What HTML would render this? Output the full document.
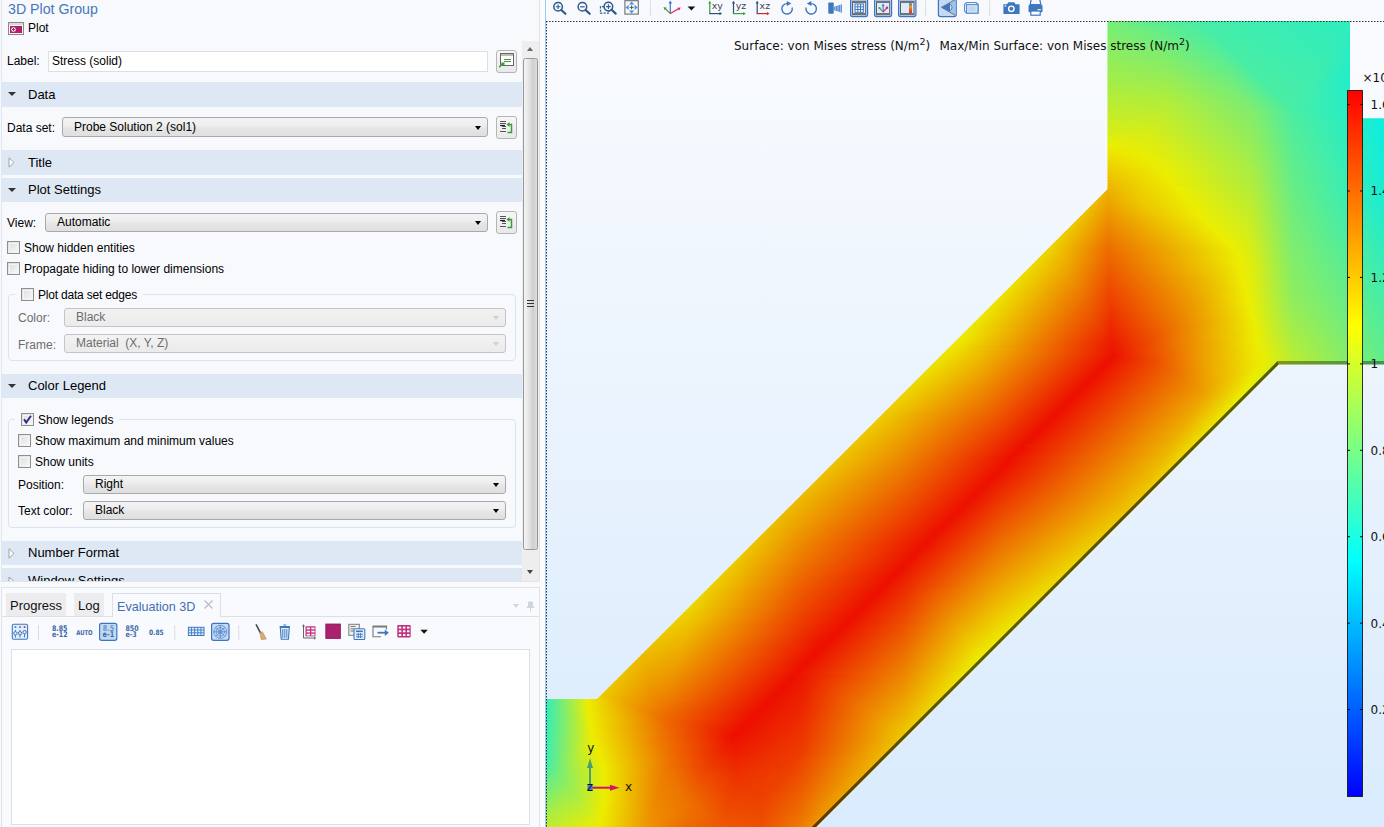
<!DOCTYPE html>
<html lang="en"><head><meta charset="utf-8"><title>3D Plot Group</title>
<style>
html,body{margin:0;padding:0}
body{width:1384px;height:827px;overflow:hidden;position:relative;background:#f8f9fd;font-family:"Liberation Sans",sans-serif;font-size:12px}
.t{position:absolute;white-space:nowrap}
.u{font-family:"Liberation Sans",sans-serif}
.p{font-family:"DejaVu Sans","Liberation Sans",sans-serif}
.a{position:absolute}
.hd{position:absolute;left:2px;width:520px;height:24.500px;background:#dee8f5}
.sel{position:absolute;box-sizing:border-box;border:1px solid #a9a9a9;border-radius:3px;background:linear-gradient(#f4f4f4,#ededed 45%,#e6e6e6 55%,#dfdfdf)}
.sel.dis{border-color:#c4c4c4;background:linear-gradient(#f2f2f2,#ebebeb)}
.btn{position:absolute;box-sizing:border-box;border:1px solid #b4b4b4;border-radius:3px;background:linear-gradient(#f6f6f6,#e9e9e9)}
.cb{position:absolute;box-sizing:border-box;width:13px;height:13px;border:1px solid #8e8f8f;background:linear-gradient(135deg,#dcdcdc,#f8f8f8)}
.cb:after{content:"";position:absolute;left:1px;top:1px;right:1px;bottom:1px;border:1px solid #f4f4f4}
.grp{position:absolute;box-sizing:border-box;border:1px solid #dbe3ec;border-radius:4px}
.tri{position:absolute;width:0;height:0;border-left:3.5px solid transparent;border-right:3.5px solid transparent;border-top:4px solid #000}
</style></head>
<body>
<div class="a" style="left:1px;top:0;width:1px;height:581px;background:#e3e6ec"></div>
<span class="t u" style="left:8px;top:-0.92px;font-size:14.2px;line-height:20px;color:#4876bb;">3D Plot Group</span>
<svg class="a" style="left:8px;top:22px" width="16" height="13" viewBox="0 0 16 13"><rect x=".5" y=".5" width="15" height="12" fill="#f4f4f4" stroke="#8a8a8a"/><rect x="1" y="1" width="14" height="2" fill="#d8d8d8"/><rect x="2" y="4" width="12" height="7" fill="#b3206a"/><circle cx="5.5" cy="7.5" r="2.3" fill="#fff"/><path d="M4 7.5h3M5.5 6v3" stroke="#b3206a" stroke-width="1"/></svg>
<span class="t u" style="left:28px;top:20.34px;font-size:12px;line-height:17px;color:#000;">Plot</span>
<span class="t u" style="left:7px;top:53.34px;font-size:12px;line-height:17px;color:#000;">Label:</span>
<div class="a" style="left:48px;top:51px;width:440px;height:21px;box-sizing:border-box;border:1px solid #dcdfe4;background:#fff"></div>
<span class="t u" style="left:52px;top:53.34px;font-size:12px;line-height:17px;color:#000;">Stress (solid)</span>
<div class="btn" style="left:496px;top:50px;width:21px;height:23px"></div>
<svg class="a" style="left:498px;top:52px" width="17" height="18" viewBox="0 0 17 18"><rect x="2.5" y="1.5" width="13" height="12" fill="#fff" stroke="#666"/><rect x="3" y="2" width="12" height="2" fill="#bbb"/><path d="M6 7.5h7M6 9.500h7" stroke="#3c9a3c" stroke-width="1"/><path d="M1.200 15.300l3.600-3.600" stroke="#3c9a3c" stroke-width="1.500" fill="none"/><path d="M2.500 10.500h4v4z" fill="#3c9a3c"/></svg>
<div class="hd" style="top:82px;height:24.5px"></div>
<div class="a" style="left:7.5px;top:92px;width:0;height:0;border-left:4px solid transparent;border-right:4px solid transparent;border-top:4.5px solid #333"></div>
<span class="t u" style="left:28px;top:85.50px;font-size:13px;line-height:18px;color:#000;">Data</span>
<div class="hd" style="top:150px;height:25.3px"></div>
<svg class="a" style="left:8px;top:157px" width="8" height="11" viewBox="0 0 8 11"><path d="M1 0.800l5 4.700-5 4.700z" fill="#fff" stroke="#a2a2a2" stroke-width="1"/></svg>
<span class="t u" style="left:28px;top:153.50px;font-size:13px;line-height:18px;color:#000;">Title</span>
<div class="hd" style="top:178px;height:24px"></div>
<div class="a" style="left:7.5px;top:188px;width:0;height:0;border-left:4px solid transparent;border-right:4px solid transparent;border-top:4.5px solid #333"></div>
<span class="t u" style="left:28px;top:180.80px;font-size:13px;line-height:18px;color:#000;">Plot Settings</span>
<div class="hd" style="top:373.5px;height:24.5px"></div>
<div class="a" style="left:7.5px;top:383.5px;width:0;height:0;border-left:4px solid transparent;border-right:4px solid transparent;border-top:4.5px solid #333"></div>
<span class="t u" style="left:28px;top:377.00px;font-size:13px;line-height:18px;color:#000;">Color Legend</span>
<div class="hd" style="top:540.7px;height:24.5px"></div>
<svg class="a" style="left:8px;top:547.7px" width="8" height="11" viewBox="0 0 8 11"><path d="M1 0.800l5 4.700-5 4.700z" fill="#fff" stroke="#a2a2a2" stroke-width="1"/></svg>
<span class="t u" style="left:28px;top:544.20px;font-size:13px;line-height:18px;color:#000;">Number Format</span>
<span class="t u" style="left:7px;top:120.34px;font-size:12px;line-height:17px;color:#000;">Data set:</span>
<div class="sel" style="left:62px;top:117px;width:426px;height:20px"></div>
<span class="t u" style="left:74px;top:118.74px;font-size:12px;line-height:17px;color:#000;">Probe Solution 2 (sol1)</span>
<div class="tri" style="left:475.0px;top:125.5px;border-top-color:#000"></div>
<div class="btn" style="left:496px;top:116px;width:21px;height:23px"></div>
<svg class="a" style="left:498px;top:118px" width="17" height="18" viewBox="0 0 17 18"><path d="M2 3.500h6M2 5.500h6M4 8.500h4M4 10.500h4M2 13.500h6" stroke="#555" stroke-width="1"/><path d="M2 7.500h5" stroke="#222" stroke-width="1.200"/><path d="M9.500 14.500h4v-8h-3" stroke="#3c9a3c" stroke-width="1.500" fill="none"/><path d="M11.500 4l-3 2.500 3 2.500z" fill="#3c9a3c"/></svg>
<span class="t u" style="left:7px;top:215.34px;font-size:12px;line-height:17px;color:#000;">View:</span>
<div class="sel" style="left:45px;top:212.5px;width:443px;height:19.5px"></div>
<span class="t u" style="left:57px;top:213.74px;font-size:12px;line-height:17px;color:#000;">Automatic</span>
<div class="tri" style="left:475.0px;top:220.75px;border-top-color:#000"></div>
<div class="btn" style="left:496px;top:211px;width:21px;height:23px"></div>
<svg class="a" style="left:498px;top:213px" width="17" height="18" viewBox="0 0 17 18"><path d="M2 3.500h6M2 5.500h6M4 8.500h4M4 10.500h4M2 13.500h6" stroke="#555" stroke-width="1"/><path d="M2 7.500h5" stroke="#222" stroke-width="1.200"/><path d="M9.500 14.500h4v-8h-3" stroke="#3c9a3c" stroke-width="1.500" fill="none"/><path d="M11.500 4l-3 2.500 3 2.500z" fill="#3c9a3c"/></svg>
<div class="cb" style="left:7px;top:241px"></div>
<span class="t u" style="left:24px;top:240.34px;font-size:12px;line-height:17px;color:#000;">Show hidden entities</span>
<div class="cb" style="left:7px;top:262px"></div>
<span class="t u" style="left:24px;top:261.34px;font-size:12px;line-height:17px;color:#000;">Propagate hiding to lower dimensions</span>
<div class="grp" style="left:8px;top:294px;width:508px;height:67px"></div>
<div class="a" style="left:14.500px;top:290px;width:128px;height:10px;background:#f8f9fd"></div>
<div class="cb" style="left:21px;top:287.5px"></div>
<span class="t u" style="left:38px;top:286.54px;font-size:12px;line-height:17px;color:#000;letter-spacing:-0.2px">Plot data set edges</span>
<span class="t u" style="left:18px;top:310.34px;font-size:12px;line-height:17px;color:#6d6d6d;">Color:</span>
<div class="sel dis" style="left:64px;top:307.5px;width:442px;height:19.5px"></div>
<span class="t u" style="left:76px;top:308.74px;font-size:12px;line-height:17px;color:#6d6d6d;">Black</span>
<div class="tri" style="left:493.0px;top:315.75px;border-top-color:#d0d0d0"></div>
<span class="t u" style="left:18px;top:336.54px;font-size:12px;line-height:17px;color:#6d6d6d;">Frame:</span>
<div class="sel dis" style="left:64px;top:333.5px;width:442px;height:19.5px"></div>
<span class="t u" style="left:76px;top:334.74px;font-size:12px;line-height:17px;color:#6d6d6d;">Material&nbsp; (X, Y, Z)</span>
<div class="tri" style="left:493.0px;top:341.75px;border-top-color:#d0d0d0"></div>
<div class="grp" style="left:8px;top:419.3px;width:508px;height:109px"></div>
<div class="a" style="left:14.500px;top:415px;width:104px;height:10px;background:#f8f9fd"></div>
<div class="cb" style="left:21px;top:413px"></div>
<svg class="a" style="left:21px;top:413px" width="13" height="13" viewBox="0 0 13 13"><path d="M3 6.300l2.200 3.200L10 2.800" stroke="#2a2a8c" stroke-width="1.900" fill="none"/></svg>
<span class="t u" style="left:38px;top:412.04px;font-size:12px;line-height:17px;color:#000;">Show legends</span>
<div class="cb" style="left:18px;top:433.7px"></div>
<span class="t u" style="left:35px;top:432.84px;font-size:12px;line-height:17px;color:#000;">Show maximum and minimum values</span>
<div class="cb" style="left:18px;top:454.5px"></div>
<span class="t u" style="left:35px;top:453.64px;font-size:12px;line-height:17px;color:#000;">Show units</span>
<span class="t u" style="left:18px;top:477.34px;font-size:12px;line-height:17px;color:#000;">Position:</span>
<div class="sel" style="left:83px;top:474.7px;width:423px;height:19.8px"></div>
<span class="t u" style="left:95px;top:476.24px;font-size:12px;line-height:17px;color:#000;">Right</span>
<div class="tri" style="left:493.0px;top:483.09999999999997px;border-top-color:#000"></div>
<span class="t u" style="left:18px;top:503.14px;font-size:12px;line-height:17px;color:#000;">Text color:</span>
<div class="sel" style="left:83px;top:500.5px;width:423px;height:19.8px"></div>
<span class="t u" style="left:95px;top:502.04px;font-size:12px;line-height:17px;color:#000;">Black</span>
<div class="tri" style="left:493.0px;top:508.9px;border-top-color:#000"></div>
<div class="a" style="left:2px;top:568px;width:520px;height:12.600px;background:#dee8f5;overflow:hidden"><svg class="a" style="left:6px;top:7.500px" width="7" height="10" viewBox="0 0 7 10"><path d="M1 1l4.500 4-4.500 4z" fill="#fff" stroke="#9a9a9a" stroke-width="1"/></svg><span class="t u" style="left:26px;top:3.50px;font-size:13px;line-height:18px;color:#000;">Window Settings</span></div>
<div class="a" style="left:522px;top:41px;width:17.500px;height:539.500px;background:#eeeeef"></div>
<div class="a" style="left:522.500px;top:58px;width:15.500px;height:491.500px;box-sizing:border-box;border:1px solid #979797;border-radius:2.500px;background:linear-gradient(90deg,#f4f4f4,#e6e6e6 35%,#cfcfcf 70%,#dedede)"></div>
<div class="a" style="left:527px;top:46.500px;width:0;height:0;border-left:3.500px solid transparent;border-right:3.500px solid transparent;border-bottom:4px solid #666"></div>
<div class="a" style="left:527px;top:569.500px;width:0;height:0;border-left:3.500px solid transparent;border-right:3.500px solid transparent;border-top:4px solid #444"></div>
<div class="a" style="left:527px;top:299.8px;width:7px;height:1.300px;background:#333"></div>
<div class="a" style="left:527px;top:302.8px;width:7px;height:1.300px;background:#333"></div>
<div class="a" style="left:527px;top:305.8px;width:7px;height:1.300px;background:#333"></div>
<div class="a" style="left:0;top:580.500px;width:540px;height:1px;background:#e2e4e8"></div>
<div class="a" style="left:539px;top:0;width:1px;height:581px;background:#e2e3e6"></div>
<div class="a" style="left:540px;top:0;width:5.500px;height:827px;background:#fcfcfe"></div>
<div class="a" style="left:1px;top:586.500px;width:539px;height:245px;box-sizing:border-box;border:1px solid #e1e3e7;background:#f9fafd"></div>
<div class="a" style="left:6px;top:593px;width:60px;height:23px;background:#ececef"></div>
<span class="t u" style="left:10px;top:597.00px;font-size:13px;line-height:18px;color:#111;">Progress</span>
<div class="a" style="left:74px;top:593px;width:30px;height:23px;background:#ececef"></div>
<span class="t u" style="left:78px;top:597.00px;font-size:13px;line-height:18px;color:#111;">Log</span>
<div class="a" style="left:2px;top:616px;width:537px;height:1px;background:#dcdfe4"></div>
<div class="a" style="left:112px;top:593px;width:109px;height:24px;box-sizing:border-box;border:1px solid #dcdfe4;border-bottom:none;background:#f9fafd"></div>
<span class="t u" style="left:117px;top:597.63px;font-size:12.6px;line-height:18px;color:#3f6eb5;">Evaluation 3D</span>
<svg class="a" style="left:203px;top:599px" width="11" height="11" viewBox="0 0 11 11"><path d="M1.500 1.500l8 8M9.500 1.500l-8 8" stroke="#b9bcc4" stroke-width="1.200"/></svg>
<div class="a" style="left:513px;top:604px;width:0;height:0;border-left:3.500px solid transparent;border-right:3.500px solid transparent;border-top:4px solid #d0d5de"></div>
<svg class="a" style="left:526px;top:601px" width="9" height="11" viewBox="0 0 9 11"><path d="M2.500 1h4v4l1.500 1.500h-7l1.500-1.500zM4.500 6.500v4" fill="#cfd4de" stroke="#cfd4de" stroke-width="1"/></svg>
<div class="a" style="left:11px;top:648.500px;width:519px;height:176.500px;box-sizing:border-box;border:1px solid #dcdfe4;background:#fff"></div>
<svg class="a" style="left:0;top:618px" width="540" height="28" viewBox="0 618 540 28"><rect x="12.300" y="624.200" width="15.300" height="15" rx="1.500" fill="#e4eefb" stroke="#3d78bf" stroke-width="1.100"/><rect x="14.5" y="626.300" width="1.800" height="1.600" fill="#3d78bf"/><path d="M15.4 630v7.500" stroke="#3d78bf" stroke-width="1"/><circle cx="15.4" cy="633.3" r="1.700" fill="#e4eefb" stroke="#3d78bf" stroke-width="1"/><rect x="19.1" y="626.300" width="1.800" height="1.600" fill="#3d78bf"/><path d="M20.0 630v7.500" stroke="#3d78bf" stroke-width="1"/><circle cx="20.0" cy="633.3" r="1.700" fill="#e4eefb" stroke="#3d78bf" stroke-width="1"/><rect x="23.700000000000003" y="626.300" width="1.800" height="1.600" fill="#e0202a"/><path d="M24.6 630v7.500" stroke="#3d78bf" stroke-width="1"/><circle cx="24.6" cy="632.2" r="1.700" fill="#e4eefb" stroke="#3d78bf" stroke-width="1"/><path d="M38.500 625V640" stroke="#dcdde2" stroke-width="1"/><text transform="translate(52 631) scale(.9 1)" font-family="DejaVu Sans Condensed, DejaVu Sans, sans-serif" font-weight="bold" font-size="7.77" fill="#3c69a8" letter-spacing="0">8.85</text><text transform="translate(52 637.4) scale(.9 1)" font-family="DejaVu Sans Condensed, DejaVu Sans, sans-serif" font-weight="bold" font-size="7.77" fill="#3c69a8" letter-spacing="0">e-12</text><text transform="translate(76.3 634.7) scale(.9 1)" font-family="DejaVu Sans Condensed, DejaVu Sans, sans-serif" font-weight="bold" font-size="6.66" fill="#3c69a8" letter-spacing="-0.15">AUTO</text><rect x="99.600" y="623.300" width="17.200" height="17" rx="2" fill="#c3daf5" stroke="#3f74c0" stroke-width="1.200"/><text transform="translate(102.8 631.2) scale(.9 1)" font-family="DejaVu Sans Condensed, DejaVu Sans, sans-serif" font-weight="bold" font-size="7.99" fill="#6a94cc" letter-spacing="0">8.5</text><text transform="translate(102.6 637.4) scale(.9 1)" font-family="DejaVu Sans Condensed, DejaVu Sans, sans-serif" font-weight="bold" font-size="7.99" fill="#3c69a8" letter-spacing="0">e-1</text><text transform="translate(125.5 631) scale(.9 1)" font-family="DejaVu Sans Condensed, DejaVu Sans, sans-serif" font-weight="bold" font-size="7.77" fill="#3c69a8" letter-spacing="0">850</text><text transform="translate(125.5 637.4) scale(.9 1)" font-family="DejaVu Sans Condensed, DejaVu Sans, sans-serif" font-weight="bold" font-size="7.77" fill="#3c69a8" letter-spacing="0">e-3</text><text transform="translate(149 634.7) scale(.9 1)" font-family="DejaVu Sans Condensed, DejaVu Sans, sans-serif" font-weight="bold" font-size="7.33" fill="#3c69a8" letter-spacing="0">0.85</text><path d="M174.800 625V640" stroke="#dcdde2" stroke-width="1"/><rect x="188.400" y="627.300" width="15.600" height="8.200" fill="#e4eefb" stroke="#3d78bf" stroke-width="1"/><path d="M191.500 627.300v8.200M194.600 627.300v8.200M197.800 627.300v8.200M200.900 627.300v8.200M188.400 630h15.600M188.400 632.800h15.600" stroke="#3d78bf" stroke-width="0.900"/><rect x="211.600" y="623.300" width="17.400" height="17" rx="2" fill="#c3daf5" stroke="#3f74c0" stroke-width="1.200"/><g fill="none" stroke="#5b8fd0" stroke-width="0.900"><circle cx="220.300" cy="631.800" r="6.500"/><circle cx="220.300" cy="631.800" r="4.200"/><circle cx="220.300" cy="631.800" r="1.900"/><path d="M213.800 631.800h13M220.300 625.300v13M215.700 627.200l9.200 9.200M224.900 627.200l-9.200 9.200"/></g><path d="M238.800 625V640" stroke="#dcdde2" stroke-width="1"/><path d="M256 624.300l5 9.500" stroke="#4a4a4a" stroke-width="1.600"/><path d="M260 632.800l2.400-1 4 7.200-5.200 0.600z" fill="#d9aa78" stroke="#b98a58" stroke-width="0.600"/><path d="M280.300 627.500h9l-0.900 11.800h-7.200z" fill="#dceafa" stroke="#3d78bf" stroke-width="1.100"/><path d="M279.600 626.500h10.400M283.300 625h3" stroke="#3d78bf" stroke-width="1.200"/><path d="M282.800 629v8.800M284.800 629v8.800M286.800 629v8.800" stroke="#3d78bf" stroke-width="0.900"/><path d="M303.500 624.500V638H316" fill="none" stroke="#666" stroke-width="1"/><path d="M302 626h3M314.500 636.500v3" stroke="#666" stroke-width="0.800"/><rect x="305.500" y="626.300" width="10" height="10" fill="#c0307c"/><rect x="306.7" y="627.6" width="3.300" height="1.700" fill="#fff"/><rect x="311.3" y="627.6" width="3.300" height="1.700" fill="#fff"/><rect x="306.7" y="630.7" width="3.300" height="1.700" fill="#fff"/><rect x="311.3" y="630.7" width="3.300" height="1.700" fill="#fff"/><rect x="306.7" y="633.8000000000001" width="3.300" height="1.700" fill="#fff"/><rect x="311.3" y="633.8000000000001" width="3.300" height="1.700" fill="#fff"/><rect x="325.800" y="624" width="14.600" height="14.600" fill="#ab2170" stroke="#8c1a5c" stroke-width="0.800"/><rect x="348.800" y="624.300" width="10.500" height="11" fill="#f0f0f0" stroke="#7a7a7a" stroke-width="1"/><path d="M350.500 626.500h5M350.500 628.800h3.500M350.500 631h3.500" stroke="#7a7a7a" stroke-width="1"/><rect x="354" y="628.800" width="10.800" height="10.700" rx="1" fill="#e4eefb" stroke="#3d78bf" stroke-width="1.100"/><rect x="356" y="630.500" width="6.800" height="1.600" fill="#3d78bf"/><path d="M356 634.300h6.800M356 636.800h6.800M358.300 633v5M360.600 633v5" stroke="#3d78bf" stroke-width="0.900"/><path d="M381 636.800h-8V626h13.500v3.500" fill="none" stroke="#7a7a7a" stroke-width="1.100"/><path d="M373 626.800h13.500" stroke="#7a7a7a" stroke-width="1.500"/><path d="M377.500 632.700h8" stroke="#3d78bf" stroke-width="1.800"/><path d="M388.800 632.700l-4-3.200v6.400z" fill="#3d78bf"/><rect x="397.300" y="625" width="13.400" height="12.400" rx="0.800" fill="#c0307c"/><rect x="398.8" y="626.6" width="2.500" height="2" fill="#fff"/><rect x="402.90000000000003" y="626.6" width="2.500" height="2" fill="#fff"/><rect x="407.0" y="626.6" width="2.500" height="2" fill="#fff"/><rect x="398.8" y="630.3000000000001" width="2.500" height="2" fill="#fff"/><rect x="402.90000000000003" y="630.3000000000001" width="2.500" height="2" fill="#fff"/><rect x="407.0" y="630.3000000000001" width="2.500" height="2" fill="#fff"/><rect x="398.8" y="634.0" width="2.500" height="2" fill="#fff"/><rect x="402.90000000000003" y="634.0" width="2.500" height="2" fill="#fff"/><rect x="407.0" y="634.0" width="2.500" height="2" fill="#fff"/><path d="M420.400 629.800h7.400l-3.700 3.900z" fill="#111"/></svg>
<svg class="a" style="left:546px;top:0" width="838" height="21" viewBox="546 0 838 21"><circle cx="558.1" cy="6.8" r="4.300" fill="none" stroke="#2c5a8f" stroke-width="1.500"/><path d="M561.3000000000001 10.0L565.4 13.8" stroke="#2c5a8f" stroke-width="2.200" stroke-linecap="round"/><path d="M555.8000000000001 6.8h4.600M558.1 4.5v4.600" stroke="#2c5a8f" stroke-width="1.100"/><circle cx="582.4" cy="6.8" r="4.300" fill="none" stroke="#2c5a8f" stroke-width="1.500"/><path d="M585.6 10.0L589.6999999999999 13.8" stroke="#2c5a8f" stroke-width="2.200" stroke-linecap="round"/><path d="M580.1 6.8h4.600" stroke="#2c5a8f" stroke-width="1.200"/><path d="M604 6.700H600.500V13.200H609V10.500" fill="none" stroke="#2c5a8f" stroke-width="1.300" stroke-dasharray="2 1.300"/><circle cx="608.4" cy="6.6" r="4.300" fill="none" stroke="#2c5a8f" stroke-width="1.500"/><path d="M611.6 9.8L615.6999999999999 13.6" stroke="#2c5a8f" stroke-width="2.200" stroke-linecap="round"/><path d="M606.1 6.6h4.600M608.4 4.3v4.600" stroke="#2c5a8f" stroke-width="1.100"/><rect x="624.900" y="0.700" width="13.400" height="13.400" fill="#f4f7fc" stroke="#6e6e6e" stroke-width="1.100"/><path d="M631.600 1.400l2.600 3h-5.200zM631.600 13.400l2.600-3h-5.200zM625.600 7.400l3-2.600v5.200zM637.600 7.400l-3-2.600v5.200z" fill="#4a90d9"/><path d="M629.600 7.400h4M631.600 5.400v4" stroke="#555" stroke-width="1"/><path d="M650.500 0.500V16" stroke="#dcdde2" stroke-width="1"/><path d="M670.300 13.600V2" stroke="#3d78bf" stroke-width="1.200"/><path d="M670.300 0.500l-1.800 3h3.600z" fill="#3d78bf"/><path d="M670.300 13.600L664.800 8.300" stroke="#3aa03a" stroke-width="1.200"/><path d="M663.500 7l3.300 0.700-2.300 2.400z" fill="#3aa03a"/><path d="M670.300 13.600L679 8.500" stroke="#e0206a" stroke-width="1.200"/><path d="M680.700 7.500l-3.300 0.200 1.700 2.800z" fill="#e0206a"/><path d="M687.600 6.400h7.600l-3.800 4.200z" fill="#111"/><path d="M709.8 13.600V2.500" stroke="#3aa03a" stroke-width="1.200"/><path d="M709.8 0.800l-1.600 2.600h3.200z" fill="#3aa03a"/><path d="M709.1999999999999 13.600H720.3" stroke="#2c4f7c" stroke-width="1.200"/><path d="M722.0999999999999 13.600l-2.600-1.600v3.200z" fill="#2c4f7c"/><text x="711.8" y="9.300" font-family="DejaVu Sans, Liberation Sans, sans-serif" font-size="9.400" fill="#3a4654">xy</text><path d="M733.5 13.600V2.500" stroke="#2c4f7c" stroke-width="1.200"/><path d="M733.5 0.800l-1.600 2.600h3.200z" fill="#2c4f7c"/><path d="M732.9 13.600H744.0" stroke="#3aa03a" stroke-width="1.200"/><path d="M745.8 13.600l-2.600-1.600v3.200z" fill="#3aa03a"/><text x="735.8" y="9.300" font-family="DejaVu Sans, Liberation Sans, sans-serif" font-size="9.400" fill="#3a4654">yz</text><path d="M757.2 13.600V2.500" stroke="#2c4f7c" stroke-width="1.200"/><path d="M757.2 0.800l-1.600 2.600h3.200z" fill="#2c4f7c"/><path d="M756.6 13.600H767.7" stroke="#cc2a2a" stroke-width="1.200"/><path d="M769.5 13.600l-2.600-1.600v3.200z" fill="#cc2a2a"/><text x="759.6" y="9.300" font-family="DejaVu Sans, Liberation Sans, sans-serif" font-size="9.400" fill="#3a4654">xz</text><path d="M792.100 7.500A5.200 5.200 0 1 1 787.100 3.650" fill="none" stroke="#3d78bf" stroke-width="1.400"/><path d="M786.800 0.900l4.600 2.600-4.600 2.600z" fill="#3d78bf"/><path d="M806.150 7.500A5.200 5.200 0 1 0 811.150 3.650" fill="none" stroke="#3d78bf" stroke-width="1.400"/><path d="M811.400 0.900l-4.600 2.600 4.600 2.600z" fill="#3d78bf"/><rect x="828.300" y="2.500" width="5.400" height="11.200" rx="0.800" fill="#3d78bf"/><path d="M833.700 7l8.300-2.800v8.600l-8.300-2.800z" fill="#5b8fd0"/><path d="M835.300 7v3.300M838 6v5.300M840.600 5v7.200" stroke="#a9c6ea" stroke-width="1"/><rect x="850.6" y="-1" width="17" height="17.6" rx="2" fill="#c3daf5" stroke="#3f74c0" stroke-width="1.200"/><rect x="852.5" y="1.3" width="13.2" height="13.4" fill="#ddeafa" stroke="#5a5f68" stroke-width="1"/><path d="M852.5 2.1h13.2M852.5 13.9h13.2" stroke="#6d727b" stroke-width="1.600"/><rect x="855" y="4" width="8.300" height="8.300" fill="#fff" stroke="#3d78bf" stroke-width="1"/><path d="M857.800 4v8.300M860.500 4v8.300M855 6.800h8.300M855 9.500h8.300" stroke="#3d78bf" stroke-width="1"/><rect x="874.6" y="-1" width="17" height="17.6" rx="2" fill="#c3daf5" stroke="#3f74c0" stroke-width="1.200"/><rect x="876.5" y="1.3" width="13.2" height="13.4" fill="#ddeafa" stroke="#5a5f68" stroke-width="1"/><path d="M876.5 2.1h13.2M876.5 13.9h13.2" stroke="#6d727b" stroke-width="1.600"/><path d="M883.100 12V5" stroke="#3d78bf" stroke-width="1.100"/><path d="M883.100 3.600l-1.500 2.300h3z" fill="#3d78bf"/><path d="M883.100 12l-3.300-3.600" stroke="#3aa03a" stroke-width="1.100"/><circle cx="879.500" cy="8" r="1.100" fill="#3aa03a"/><path d="M883.100 12l3.600-3.800" stroke="#e0206a" stroke-width="1.100"/><circle cx="887" cy="7.800" r="1.200" fill="#e0206a"/><rect x="898.6" y="-1" width="17.3" height="17.6" rx="2" fill="#c3daf5" stroke="#3f74c0" stroke-width="1.200"/><rect x="900.5" y="1.3" width="13.5" height="13.4" fill="#ddeafa" stroke="#5a5f68" stroke-width="1"/><path d="M900.5 2.1h13.5M900.5 13.9h13.5" stroke="#6d727b" stroke-width="1.600"/><defs><linearGradient id="lg" x1="0" y1="0" x2="0" y2="1"><stop offset="0" stop-color="#3d78bf"/><stop offset=".35" stop-color="#e8a020"/><stop offset="1" stop-color="#e0202a"/></linearGradient></defs><rect x="909" y="3.300" width="3" height="9.600" fill="url(#lg)"/><path d="M925.500 0.500V16" stroke="#dcdde2" stroke-width="1"/><rect x="938.4" y="-1" width="17.8" height="17.6" rx="2" fill="#c3daf5" stroke="#3f74c0" stroke-width="1.200"/><path d="M955.500 -0.500L941.500 7.300L955.500 15.500" fill="#9fc3ee" stroke="#6d727b" stroke-width="1"/><path d="M941.500 7.300l8.500-4.300v8.800z" fill="#3d78bf"/><path d="M950 4.300a3.400 3.400 0 0 1 0 6.200" fill="#dceafa" stroke="#3d78bf" stroke-width="1"/><path d="M964.500 4.500l2-2h9.500l2.200 2v8.700h-11.700l-2-2z" fill="#e8f0fb" stroke="#5b8fd0" stroke-width="1.100" stroke-linejoin="round"/><rect x="966.500" y="4.600" width="11.500" height="8.600" fill="#d3e2f6" stroke="#5b8fd0" stroke-width="1.100"/><rect x="968.500" y="6.500" width="7" height="4.800" fill="#c1d5f0"/><path d="M989.700 0.500V16" stroke="#dcdde2" stroke-width="1"/><path d="M1003.400 4.200h3.600l1.400-1.900h5.800l1.400 1.900h4v9.700h-16.200z" fill="#3d78bf"/><circle cx="1011.300" cy="8.800" r="3.400" fill="#fff"/><circle cx="1011.300" cy="8.800" r="2" fill="#3d78bf"/><rect x="1004.600" y="5.400" width="1.600" height="1.200" fill="#fff"/><path d="M1031.200 -0.500h8.600l1 5h-10.600z" fill="#f4f7fc" stroke="#3d78bf" stroke-width="1.200"/><rect x="1028.500" y="5" width="14" height="7.200" rx="1" fill="#3d78bf"/><rect x="1030.800" y="11" width="9.400" height="4.200" fill="#fff" stroke="#3d78bf" stroke-width="1.200"/><rect x="1037.500" y="9" width="3.400" height="1.200" fill="#dceafa"/></svg>
<svg class="a" style="left:0;top:0" width="1384" height="827" viewBox="0 0 1384 827">
<defs>
<linearGradient id="bg" x1="0" y1="0" x2="0" y2="1"><stop offset="0" stop-color="#fafbfe"/><stop offset="1" stop-color="#d9ebfd"/></linearGradient>
<linearGradient id="cb" x1="0" y1="0" x2="0" y2="1"><stop offset="0.0000" stop-color="#f00"/><stop offset="0.0833" stop-color="#ff4000"/><stop offset="0.1667" stop-color="#ff7f00"/><stop offset="0.2500" stop-color="#ffbf00"/><stop offset="0.3333" stop-color="#ff0"/><stop offset="0.4167" stop-color="#bfff40"/><stop offset="0.5000" stop-color="#80ff80"/><stop offset="0.5833" stop-color="#40ffbf"/><stop offset="0.6667" stop-color="#0ff"/><stop offset="0.7500" stop-color="#00bfff"/><stop offset="0.8333" stop-color="#0080ff"/><stop offset="0.9167" stop-color="#0040ff"/><stop offset="1.0000" stop-color="#00f"/></linearGradient>
<clipPath id="shape"><polygon points="546,698.8 597.3,698.8 1107.5,189.3 1107.5,21 1350,21 1350,118.3 1384,118.3 1384,364.4 1278.8,364.4 816.2,827 546,827"/></clipPath>
<linearGradient id="g0" gradientUnits="userSpaceOnUse" x1="1105" x2="1351" y1="0" y2="0"><stop offset="0.0000" stop-color="#77ed77"/><stop offset="0.3455" stop-color="#4ceda2"/><stop offset="0.4309" stop-color="#43edaa"/><stop offset="1.0000" stop-color="#2fedbe"/></linearGradient><linearGradient id="g1" gradientUnits="userSpaceOnUse" x1="1105" x2="1351" y1="0" y2="0"><stop offset="0.0000" stop-color="#77ed76"/><stop offset="0.0285" stop-color="#78ed75"/><stop offset="0.3943" stop-color="#48eda5"/><stop offset="1.0000" stop-color="#2eedbf"/></linearGradient><linearGradient id="g2" gradientUnits="userSpaceOnUse" x1="1105" x2="1351" y1="0" y2="0"><stop offset="0.0000" stop-color="#79ed74"/><stop offset="0.0285" stop-color="#7aed73"/><stop offset="0.3659" stop-color="#50ed9e"/><stop offset="0.4350" stop-color="#45eda9"/><stop offset="0.9919" stop-color="#2fedbe"/><stop offset="1.0000" stop-color="#2dedc0"/></linearGradient><linearGradient id="g3" gradientUnits="userSpaceOnUse" x1="1105" x2="1351" y1="0" y2="0"><stop offset="0.0000" stop-color="#7ced71"/><stop offset="0.0285" stop-color="#7ced71"/><stop offset="0.1870" stop-color="#6ced82"/><stop offset="0.4187" stop-color="#49eda5"/><stop offset="0.5772" stop-color="#40edad"/><stop offset="0.9837" stop-color="#30edbe"/><stop offset="1.0000" stop-color="#2dedc0"/></linearGradient><linearGradient id="g4" gradientUnits="userSpaceOnUse" x1="1105" x2="1351" y1="0" y2="0"><stop offset="0.0000" stop-color="#7eed6f"/><stop offset="0.0285" stop-color="#7fed6e"/><stop offset="0.1789" stop-color="#6fed7e"/><stop offset="0.4228" stop-color="#4ceda1"/><stop offset="0.4553" stop-color="#45eda8"/><stop offset="0.9756" stop-color="#31edbd"/><stop offset="1.0000" stop-color="#2cedc1"/></linearGradient><linearGradient id="g5" gradientUnits="userSpaceOnUse" x1="1105" x2="1351" y1="0" y2="0"><stop offset="0.0000" stop-color="#80ed6d"/><stop offset="0.0285" stop-color="#81ed6c"/><stop offset="0.1707" stop-color="#72ed7b"/><stop offset="0.3740" stop-color="#58ed95"/><stop offset="0.4390" stop-color="#4beda3"/><stop offset="0.4756" stop-color="#45eda8"/><stop offset="0.9675" stop-color="#32edbc"/><stop offset="1.0000" stop-color="#2bedc2"/></linearGradient><linearGradient id="g6" gradientUnits="userSpaceOnUse" x1="1105" x2="1351" y1="0" y2="0"><stop offset="0.0000" stop-color="#83ed6a"/><stop offset="0.0285" stop-color="#83ed6a"/><stop offset="0.1626" stop-color="#76ed77"/><stop offset="0.2602" stop-color="#6ced81"/><stop offset="0.4431" stop-color="#4eed9f"/><stop offset="0.4756" stop-color="#46eda7"/><stop offset="0.9593" stop-color="#32edbb"/><stop offset="1.0000" stop-color="#2bedc2"/></linearGradient><linearGradient id="g7" gradientUnits="userSpaceOnUse" x1="1105" x2="1351" y1="0" y2="0"><stop offset="0.0000" stop-color="#85ed68"/><stop offset="0.0285" stop-color="#86ed67"/><stop offset="0.1545" stop-color="#79ed74"/><stop offset="0.2398" stop-color="#72ed7b"/><stop offset="0.4472" stop-color="#51ed9c"/><stop offset="0.4878" stop-color="#46eda7"/><stop offset="0.9512" stop-color="#33edba"/><stop offset="1.0000" stop-color="#2aedc3"/></linearGradient><linearGradient id="g8" gradientUnits="userSpaceOnUse" x1="1105" x2="1351" y1="0" y2="0"><stop offset="0.0000" stop-color="#87ed66"/><stop offset="0.0285" stop-color="#88ed65"/><stop offset="0.1504" stop-color="#7ced71"/><stop offset="0.2358" stop-color="#76ed77"/><stop offset="0.4553" stop-color="#53ed9b"/><stop offset="0.4959" stop-color="#47eda7"/><stop offset="0.9431" stop-color="#34edb9"/><stop offset="1.0000" stop-color="#29edc4"/></linearGradient><linearGradient id="g9" gradientUnits="userSpaceOnUse" x1="1105" x2="1351" y1="0" y2="0"><stop offset="0.0000" stop-color="#8aed63"/><stop offset="0.0285" stop-color="#8aed63"/><stop offset="0.1423" stop-color="#80ed6e"/><stop offset="0.2358" stop-color="#7aed74"/><stop offset="0.4634" stop-color="#54ed99"/><stop offset="0.5081" stop-color="#47eda6"/><stop offset="0.9350" stop-color="#35edb8"/><stop offset="1.0000" stop-color="#29edc4"/></linearGradient><linearGradient id="g10" gradientUnits="userSpaceOnUse" x1="1105" x2="1351" y1="0" y2="0"><stop offset="0.0000" stop-color="#8ced61"/><stop offset="0.0285" stop-color="#8ded60"/><stop offset="0.1382" stop-color="#83ed6a"/><stop offset="0.2358" stop-color="#7ded70"/><stop offset="0.4675" stop-color="#57ed96"/><stop offset="0.5203" stop-color="#47eda6"/><stop offset="0.9268" stop-color="#36edb7"/><stop offset="1.0000" stop-color="#28edc5"/></linearGradient><linearGradient id="g11" gradientUnits="userSpaceOnUse" x1="1105" x2="1351" y1="0" y2="0"><stop offset="0.0000" stop-color="#8eed5f"/><stop offset="0.0285" stop-color="#8fed5e"/><stop offset="0.1301" stop-color="#86ed67"/><stop offset="0.2358" stop-color="#80ed6d"/><stop offset="0.4756" stop-color="#59ed94"/><stop offset="0.5325" stop-color="#47eda6"/><stop offset="0.9187" stop-color="#37edb6"/><stop offset="1.0000" stop-color="#27edc6"/></linearGradient><linearGradient id="g12" gradientUnits="userSpaceOnUse" x1="1105" x2="1351" y1="0" y2="0"><stop offset="0.0000" stop-color="#91ed5c"/><stop offset="0.0285" stop-color="#91ed5c"/><stop offset="0.1260" stop-color="#89ed64"/><stop offset="0.2358" stop-color="#84ed69"/><stop offset="0.4837" stop-color="#5bed92"/><stop offset="0.5447" stop-color="#48eda6"/><stop offset="0.9106" stop-color="#38edb5"/><stop offset="1.0000" stop-color="#27edc6"/></linearGradient><linearGradient id="g13" gradientUnits="userSpaceOnUse" x1="1105" x2="1351" y1="0" y2="0"><stop offset="0.0000" stop-color="#93ed5a"/><stop offset="0.0285" stop-color="#94ed59"/><stop offset="0.1260" stop-color="#8ded61"/><stop offset="0.2398" stop-color="#87ed67"/><stop offset="0.4878" stop-color="#5eed8f"/><stop offset="0.5569" stop-color="#48eda5"/><stop offset="0.8984" stop-color="#3aedb3"/><stop offset="1.0000" stop-color="#26edc7"/></linearGradient><linearGradient id="g14" gradientUnits="userSpaceOnUse" x1="1105" x2="1351" y1="0" y2="0"><stop offset="0.0000" stop-color="#95ed58"/><stop offset="0.0285" stop-color="#96ed57"/><stop offset="0.1341" stop-color="#90ed5e"/><stop offset="0.2398" stop-color="#8aed63"/><stop offset="0.4959" stop-color="#60ed8d"/><stop offset="0.5691" stop-color="#48eda5"/><stop offset="0.8902" stop-color="#3bedb2"/><stop offset="1.0000" stop-color="#25edc8"/></linearGradient><linearGradient id="g15" gradientUnits="userSpaceOnUse" x1="1105" x2="1351" y1="0" y2="0"><stop offset="0.0000" stop-color="#98ed55"/><stop offset="0.0285" stop-color="#98ed55"/><stop offset="0.1707" stop-color="#92ed5b"/><stop offset="0.2561" stop-color="#8bed62"/><stop offset="0.5041" stop-color="#61ed8c"/><stop offset="0.5813" stop-color="#48eda5"/><stop offset="0.8821" stop-color="#3cedb1"/><stop offset="1.0000" stop-color="#25edc8"/></linearGradient><linearGradient id="g16" gradientUnits="userSpaceOnUse" x1="1105" x2="1351" y1="0" y2="0"><stop offset="0.0000" stop-color="#9aed53"/><stop offset="0.0285" stop-color="#9bed52"/><stop offset="0.2439" stop-color="#90ed5d"/><stop offset="0.5122" stop-color="#63ed8a"/><stop offset="0.5935" stop-color="#48eda5"/><stop offset="0.8780" stop-color="#3cedb1"/><stop offset="1.0000" stop-color="#24edc9"/></linearGradient><linearGradient id="g17" gradientUnits="userSpaceOnUse" x1="1105" x2="1351" y1="0" y2="0"><stop offset="0.0000" stop-color="#9ced51"/><stop offset="0.0285" stop-color="#9ded50"/><stop offset="0.2439" stop-color="#94ed5a"/><stop offset="0.5163" stop-color="#66ed87"/><stop offset="0.6057" stop-color="#49eda4"/><stop offset="0.8699" stop-color="#3dedb0"/><stop offset="1.0000" stop-color="#23edca"/></linearGradient><linearGradient id="g18" gradientUnits="userSpaceOnUse" x1="1105" x2="1351" y1="0" y2="0"><stop offset="0.0000" stop-color="#9fed4e"/><stop offset="0.0285" stop-color="#9fed4e"/><stop offset="0.2439" stop-color="#97ed56"/><stop offset="0.5244" stop-color="#68ed85"/><stop offset="0.6179" stop-color="#49eda4"/><stop offset="0.8618" stop-color="#3eedaf"/><stop offset="1.0000" stop-color="#23edca"/></linearGradient><linearGradient id="g19" gradientUnits="userSpaceOnUse" x1="1105" x2="1351" y1="0" y2="0"><stop offset="0.0000" stop-color="#a1ed4c"/><stop offset="0.0407" stop-color="#a1ed4c"/><stop offset="0.2480" stop-color="#9aed53"/><stop offset="0.5122" stop-color="#6fed7e"/><stop offset="0.6301" stop-color="#49eda4"/><stop offset="0.8537" stop-color="#3fedae"/><stop offset="1.0000" stop-color="#22edcb"/></linearGradient><linearGradient id="g20" gradientUnits="userSpaceOnUse" x1="1105" x2="1351" y1="0" y2="0"><stop offset="0.0000" stop-color="#a3ed4a"/><stop offset="0.0691" stop-color="#a4ed49"/><stop offset="0.2480" stop-color="#9ded50"/><stop offset="0.5163" stop-color="#72ed7b"/><stop offset="0.6463" stop-color="#49eda4"/><stop offset="0.8455" stop-color="#40edae"/><stop offset="1.0000" stop-color="#21edcc"/></linearGradient><linearGradient id="g21" gradientUnits="userSpaceOnUse" x1="1105" x2="1351" y1="0" y2="0"><stop offset="0.0000" stop-color="#a6ed47"/><stop offset="0.0976" stop-color="#a6ed47"/><stop offset="0.2520" stop-color="#a0ed4d"/><stop offset="0.5163" stop-color="#75ed79"/><stop offset="0.5610" stop-color="#69ed84"/><stop offset="0.6545" stop-color="#4aeda3"/><stop offset="0.8374" stop-color="#41edad"/><stop offset="1.0000" stop-color="#21edcc"/></linearGradient><linearGradient id="g22" gradientUnits="userSpaceOnUse" x1="1105" x2="1351" y1="0" y2="0"><stop offset="0.0000" stop-color="#a8ed45"/><stop offset="0.0447" stop-color="#abed42"/><stop offset="0.2520" stop-color="#a3ed4a"/><stop offset="0.5203" stop-color="#77ed76"/><stop offset="0.5650" stop-color="#6ced81"/><stop offset="0.6667" stop-color="#4aeda3"/><stop offset="0.8293" stop-color="#42edac"/><stop offset="1.0000" stop-color="#21edcc"/></linearGradient><linearGradient id="g23" gradientUnits="userSpaceOnUse" x1="1105" x2="1351" y1="0" y2="0"><stop offset="0.0000" stop-color="#abed42"/><stop offset="0.0366" stop-color="#aeed3f"/><stop offset="0.2561" stop-color="#a6ed47"/><stop offset="0.5244" stop-color="#7aed74"/><stop offset="0.5691" stop-color="#6fed7e"/><stop offset="0.6789" stop-color="#4aeda3"/><stop offset="0.8211" stop-color="#42edab"/><stop offset="1.0000" stop-color="#22edcb"/></linearGradient><linearGradient id="g24" gradientUnits="userSpaceOnUse" x1="1105" x2="1351" y1="0" y2="0"><stop offset="0.0000" stop-color="#aeed3f"/><stop offset="0.0407" stop-color="#b1ed3c"/><stop offset="0.2561" stop-color="#aaed43"/><stop offset="0.5285" stop-color="#7ced71"/><stop offset="0.5691" stop-color="#74ed7a"/><stop offset="0.6911" stop-color="#4aeda3"/><stop offset="0.8130" stop-color="#43edaa"/><stop offset="1.0000" stop-color="#22edcb"/></linearGradient><linearGradient id="g25" gradientUnits="userSpaceOnUse" x1="1105" x2="1351" y1="0" y2="0"><stop offset="0.0000" stop-color="#b1ed3c"/><stop offset="0.0407" stop-color="#b4ed3a"/><stop offset="0.2561" stop-color="#aded40"/><stop offset="0.5285" stop-color="#7fed6e"/><stop offset="0.5772" stop-color="#75ed78"/><stop offset="0.7073" stop-color="#4beda3"/><stop offset="0.8049" stop-color="#44eda9"/><stop offset="1.0000" stop-color="#23edca"/></linearGradient><linearGradient id="g26" gradientUnits="userSpaceOnUse" x1="1105" x2="1351" y1="0" y2="0"><stop offset="0.0000" stop-color="#b4ed3a"/><stop offset="0.0407" stop-color="#b6ed37"/><stop offset="0.2602" stop-color="#b0ed3d"/><stop offset="0.5325" stop-color="#81ed6c"/><stop offset="0.5813" stop-color="#78ed75"/><stop offset="0.7195" stop-color="#4beda2"/><stop offset="0.8008" stop-color="#44eda9"/><stop offset="1.0000" stop-color="#24edc9"/></linearGradient><linearGradient id="g27" gradientUnits="userSpaceOnUse" x1="1105" x2="1351" y1="0" y2="0"><stop offset="0.0000" stop-color="#b6ed37"/><stop offset="0.0407" stop-color="#b9ed34"/><stop offset="0.2602" stop-color="#b3ed3a"/><stop offset="0.5366" stop-color="#84ed69"/><stop offset="0.5854" stop-color="#7ced72"/><stop offset="0.7317" stop-color="#4beda2"/><stop offset="0.7967" stop-color="#45eda9"/><stop offset="1.0000" stop-color="#24edc9"/></linearGradient><linearGradient id="g28" gradientUnits="userSpaceOnUse" x1="1105" x2="1351" y1="0" y2="0"><stop offset="0.0000" stop-color="#b9ed34"/><stop offset="0.0407" stop-color="#bced31"/><stop offset="0.2602" stop-color="#b6ed37"/><stop offset="0.5407" stop-color="#86ed67"/><stop offset="0.5935" stop-color="#7ded70"/><stop offset="0.7439" stop-color="#4beda2"/><stop offset="1.0000" stop-color="#25edc8"/></linearGradient><linearGradient id="g29" gradientUnits="userSpaceOnUse" x1="1105" x2="1351" y1="0" y2="0"><stop offset="0.0000" stop-color="#bced31"/><stop offset="0.0407" stop-color="#bfed2e"/><stop offset="0.2561" stop-color="#b9ed34"/><stop offset="0.5366" stop-color="#89ed64"/><stop offset="0.5976" stop-color="#80ed6d"/><stop offset="0.7561" stop-color="#4beda2"/><stop offset="1.0000" stop-color="#26edc7"/></linearGradient><linearGradient id="g30" gradientUnits="userSpaceOnUse" x1="1105" x2="1351" y1="0" y2="0"><stop offset="0.0000" stop-color="#bfed2e"/><stop offset="0.0407" stop-color="#c2ed2b"/><stop offset="0.2480" stop-color="#bded30"/><stop offset="0.5366" stop-color="#8bed62"/><stop offset="0.6016" stop-color="#82ed6b"/><stop offset="0.7642" stop-color="#4beda2"/><stop offset="0.9959" stop-color="#27edc6"/><stop offset="1.0000" stop-color="#27edc7"/></linearGradient><linearGradient id="g31" gradientUnits="userSpaceOnUse" x1="1105" x2="1351" y1="0" y2="0"><stop offset="0.0000" stop-color="#c2ed2b"/><stop offset="0.0407" stop-color="#c5ed28"/><stop offset="0.2398" stop-color="#c1ed2c"/><stop offset="0.5407" stop-color="#8ded60"/><stop offset="0.6016" stop-color="#84ed69"/><stop offset="0.7683" stop-color="#4beda2"/><stop offset="0.9959" stop-color="#28edc5"/><stop offset="1.0000" stop-color="#27edc6"/></linearGradient><linearGradient id="g32" gradientUnits="userSpaceOnUse" x1="1105" x2="1383" y1="0" y2="0"><stop offset="0.0000" stop-color="#c5ed28"/><stop offset="0.0360" stop-color="#c8ed25"/><stop offset="0.2050" stop-color="#c4ed29"/><stop offset="0.4820" stop-color="#8eed5f"/><stop offset="0.5324" stop-color="#86ed68"/><stop offset="0.6799" stop-color="#4ceda2"/><stop offset="0.8849" stop-color="#28edc5"/><stop offset="1.0000" stop-color="#0dede0"/></linearGradient><linearGradient id="g33" gradientUnits="userSpaceOnUse" x1="1105" x2="1383" y1="0" y2="0"><stop offset="0.0000" stop-color="#c8ed25"/><stop offset="0.0360" stop-color="#cbed22"/><stop offset="0.1978" stop-color="#c8ed25"/><stop offset="0.4856" stop-color="#90ed5d"/><stop offset="0.5324" stop-color="#87ed66"/><stop offset="0.6799" stop-color="#4deda0"/><stop offset="0.8849" stop-color="#29edc4"/><stop offset="1.0000" stop-color="#0dede0"/></linearGradient><linearGradient id="g34" gradientUnits="userSpaceOnUse" x1="1105" x2="1383" y1="0" y2="0"><stop offset="0.0000" stop-color="#cbed22"/><stop offset="0.0360" stop-color="#ceed1f"/><stop offset="0.1906" stop-color="#cbed22"/><stop offset="0.4856" stop-color="#92ed5b"/><stop offset="0.5324" stop-color="#89ed64"/><stop offset="0.6619" stop-color="#53ed9a"/><stop offset="0.7662" stop-color="#3fedae"/><stop offset="0.8957" stop-color="#27edc6"/><stop offset="1.0000" stop-color="#0eeddf"/></linearGradient><linearGradient id="g35" gradientUnits="userSpaceOnUse" x1="1105" x2="1383" y1="0" y2="0"><stop offset="0.0000" stop-color="#ceed1f"/><stop offset="0.0360" stop-color="#d1ed1c"/><stop offset="0.1835" stop-color="#cfed1e"/><stop offset="0.4892" stop-color="#93ed5a"/><stop offset="0.5324" stop-color="#8bed62"/><stop offset="0.6583" stop-color="#57ed97"/><stop offset="0.7338" stop-color="#45eda8"/><stop offset="0.8885" stop-color="#29edc4"/><stop offset="1.0000" stop-color="#0eeddf"/></linearGradient><linearGradient id="g36" gradientUnits="userSpaceOnUse" x1="1105" x2="1383" y1="0" y2="0"><stop offset="0.0000" stop-color="#d1ed1c"/><stop offset="0.0252" stop-color="#d4ed19"/><stop offset="0.1727" stop-color="#d2ed1b"/><stop offset="0.4928" stop-color="#95ed58"/><stop offset="0.5324" stop-color="#8ded60"/><stop offset="0.6511" stop-color="#5ced92"/><stop offset="0.6835" stop-color="#50ed9e"/><stop offset="0.8921" stop-color="#29edc4"/><stop offset="1.0000" stop-color="#0fedde"/></linearGradient><linearGradient id="g37" gradientUnits="userSpaceOnUse" x1="1105" x2="1383" y1="0" y2="0"><stop offset="0.0000" stop-color="#d4ed1a"/><stop offset="0.0144" stop-color="#d9ed14"/><stop offset="0.1655" stop-color="#d6ed17"/><stop offset="0.4964" stop-color="#96ed57"/><stop offset="0.5324" stop-color="#8fed5e"/><stop offset="0.6475" stop-color="#5fed8e"/><stop offset="0.6799" stop-color="#52ed9c"/><stop offset="0.8957" stop-color="#29edc4"/><stop offset="1.0000" stop-color="#0fedde"/></linearGradient><linearGradient id="g38" gradientUnits="userSpaceOnUse" x1="1105" x2="1383" y1="0" y2="0"><stop offset="0.0000" stop-color="#d7ed16"/><stop offset="0.0144" stop-color="#dded10"/><stop offset="0.1655" stop-color="#d8ed15"/><stop offset="0.4964" stop-color="#98ed55"/><stop offset="0.5324" stop-color="#91ed5c"/><stop offset="0.6439" stop-color="#62ed8b"/><stop offset="0.6763" stop-color="#54ed9a"/><stop offset="0.8993" stop-color="#29edc4"/><stop offset="1.0000" stop-color="#10eddd"/></linearGradient><linearGradient id="g39" gradientUnits="userSpaceOnUse" x1="1105" x2="1383" y1="0" y2="0"><stop offset="0.0000" stop-color="#dced11"/><stop offset="0.0144" stop-color="#e2ed0b"/><stop offset="0.1655" stop-color="#dbed12"/><stop offset="0.5000" stop-color="#9aed54"/><stop offset="0.5360" stop-color="#91ed5c"/><stop offset="0.6403" stop-color="#65ed88"/><stop offset="0.6763" stop-color="#55ed98"/><stop offset="0.8201" stop-color="#3aedb3"/><stop offset="1.0000" stop-color="#10eddd"/></linearGradient><linearGradient id="g40" gradientUnits="userSpaceOnUse" x1="1105" x2="1383" y1="0" y2="0"><stop offset="0.0000" stop-color="#e0ed0d"/><stop offset="0.0144" stop-color="#e7ed06"/><stop offset="0.1727" stop-color="#dced11"/><stop offset="0.5000" stop-color="#9bed52"/><stop offset="0.5360" stop-color="#93ed5a"/><stop offset="0.6367" stop-color="#68ed85"/><stop offset="0.6763" stop-color="#56ed97"/><stop offset="0.8058" stop-color="#3dedb0"/><stop offset="0.9712" stop-color="#19edd4"/><stop offset="1.0000" stop-color="#11eddc"/></linearGradient><linearGradient id="g41" gradientUnits="userSpaceOnUse" x1="1105" x2="1383" y1="0" y2="0"><stop offset="0.0000" stop-color="#e5ed08"/><stop offset="0.0144" stop-color="#ebed02"/><stop offset="0.1942" stop-color="#dbed12"/><stop offset="0.5000" stop-color="#9ded50"/><stop offset="0.5360" stop-color="#95ed58"/><stop offset="0.6295" stop-color="#6ded80"/><stop offset="0.6727" stop-color="#58ed95"/><stop offset="0.8022" stop-color="#3fedaf"/><stop offset="0.9568" stop-color="#1dedd0"/><stop offset="1.0000" stop-color="#12eddc"/></linearGradient><linearGradient id="g42" gradientUnits="userSpaceOnUse" x1="1105" x2="1383" y1="0" y2="0"><stop offset="0.0000" stop-color="#eaed04"/><stop offset="0.0216" stop-color="#edeb00"/><stop offset="0.1871" stop-color="#dfed0e"/><stop offset="0.5036" stop-color="#9fed4e"/><stop offset="0.5360" stop-color="#97ed56"/><stop offset="0.6259" stop-color="#70ed7d"/><stop offset="0.6727" stop-color="#59ed94"/><stop offset="0.7986" stop-color="#40edad"/><stop offset="0.9424" stop-color="#21edcc"/><stop offset="1.0000" stop-color="#12eddb"/></linearGradient><linearGradient id="g43" gradientUnits="userSpaceOnUse" x1="1105" x2="1383" y1="0" y2="0"><stop offset="0.0000" stop-color="#edec00"/><stop offset="0.0144" stop-color="#ede600"/><stop offset="0.1151" stop-color="#eaed03"/><stop offset="0.2482" stop-color="#d5ed18"/><stop offset="0.5072" stop-color="#a0ed4d"/><stop offset="0.5432" stop-color="#96ed57"/><stop offset="0.6223" stop-color="#74ed7a"/><stop offset="0.6727" stop-color="#5aed93"/><stop offset="0.8022" stop-color="#40edad"/><stop offset="0.9496" stop-color="#20edcd"/><stop offset="1.0000" stop-color="#13eddb"/></linearGradient><linearGradient id="g44" gradientUnits="userSpaceOnUse" x1="1105" x2="1383" y1="0" y2="0"><stop offset="0.0000" stop-color="#ede800"/><stop offset="0.0144" stop-color="#ede200"/><stop offset="0.1367" stop-color="#ebed02"/><stop offset="0.3201" stop-color="#c8ed25"/><stop offset="0.5108" stop-color="#a2ed4b"/><stop offset="0.5683" stop-color="#8eed5f"/><stop offset="0.6439" stop-color="#69ed84"/><stop offset="0.6763" stop-color="#5bed92"/><stop offset="0.8058" stop-color="#40edad"/><stop offset="0.9568" stop-color="#1fedce"/><stop offset="1.0000" stop-color="#13edda"/></linearGradient><linearGradient id="g45" gradientUnits="userSpaceOnUse" x1="1105" x2="1383" y1="0" y2="0"><stop offset="0.0000" stop-color="#ede400"/><stop offset="0.0144" stop-color="#edde00"/><stop offset="0.1547" stop-color="#ebed03"/><stop offset="0.5144" stop-color="#a3ed4a"/><stop offset="0.6079" stop-color="#7eed6f"/><stop offset="0.6727" stop-color="#5ded90"/><stop offset="0.8094" stop-color="#40edad"/><stop offset="0.9676" stop-color="#1cedd1"/><stop offset="1.0000" stop-color="#14edda"/></linearGradient><linearGradient id="g46" gradientUnits="userSpaceOnUse" x1="1105" x2="1383" y1="0" y2="0"><stop offset="0.0000" stop-color="#ede000"/><stop offset="0.0144" stop-color="#edda00"/><stop offset="0.1727" stop-color="#eaed03"/><stop offset="0.5144" stop-color="#a5ed48"/><stop offset="0.6007" stop-color="#83ed6a"/><stop offset="0.6727" stop-color="#5eed8f"/><stop offset="0.8129" stop-color="#40edad"/><stop offset="0.9892" stop-color="#17edd6"/><stop offset="1.0000" stop-color="#14edd9"/></linearGradient><linearGradient id="g47" gradientUnits="userSpaceOnUse" x1="1105" x2="1383" y1="0" y2="0"><stop offset="0.0000" stop-color="#eddc00"/><stop offset="0.0144" stop-color="#edd600"/><stop offset="0.1259" stop-color="#ede600"/><stop offset="0.1906" stop-color="#eaed03"/><stop offset="0.5144" stop-color="#a7ed46"/><stop offset="0.5971" stop-color="#86ed67"/><stop offset="0.6727" stop-color="#5fed8e"/><stop offset="0.8165" stop-color="#41edad"/><stop offset="0.9964" stop-color="#16edd8"/><stop offset="1.0000" stop-color="#15edd9"/></linearGradient><linearGradient id="g48" gradientUnits="userSpaceOnUse" x1="1105" x2="1383" y1="0" y2="0"><stop offset="0.0000" stop-color="#edd700"/><stop offset="0.0144" stop-color="#edd200"/><stop offset="0.1151" stop-color="#ede100"/><stop offset="0.2014" stop-color="#eaed03"/><stop offset="0.5180" stop-color="#a9ed45"/><stop offset="0.5935" stop-color="#89ed64"/><stop offset="0.6727" stop-color="#60ed8d"/><stop offset="0.8201" stop-color="#41edac"/><stop offset="1.0000" stop-color="#15edd8"/></linearGradient><linearGradient id="g49" gradientUnits="userSpaceOnUse" x1="1105" x2="1383" y1="0" y2="0"><stop offset="0.0000" stop-color="#edd300"/><stop offset="0.0144" stop-color="#edce00"/><stop offset="0.1043" stop-color="#eddb00"/><stop offset="0.2086" stop-color="#ebed03"/><stop offset="0.5324" stop-color="#a6ed47"/><stop offset="0.6007" stop-color="#86ed67"/><stop offset="0.6727" stop-color="#62ed8c"/><stop offset="0.8273" stop-color="#40edad"/><stop offset="1.0000" stop-color="#16edd7"/></linearGradient><linearGradient id="g50" gradientUnits="userSpaceOnUse" x1="1105" x2="1383" y1="0" y2="0"><stop offset="0.0000" stop-color="#edcf00"/><stop offset="0.0144" stop-color="#edca00"/><stop offset="0.0935" stop-color="#edd600"/><stop offset="0.2158" stop-color="#ebed02"/><stop offset="0.5324" stop-color="#a8ed45"/><stop offset="0.6007" stop-color="#88ed66"/><stop offset="0.6727" stop-color="#63ed8a"/><stop offset="0.8309" stop-color="#40edad"/><stop offset="1.0000" stop-color="#16edd7"/></linearGradient><linearGradient id="g51" gradientUnits="userSpaceOnUse" x1="1105" x2="1383" y1="0" y2="0"><stop offset="0.0000" stop-color="#edcb00"/><stop offset="0.0144" stop-color="#edc500"/><stop offset="0.0863" stop-color="#edd200"/><stop offset="0.2230" stop-color="#ebed02"/><stop offset="0.5324" stop-color="#aaed44"/><stop offset="0.6007" stop-color="#89ed64"/><stop offset="0.6727" stop-color="#64ed89"/><stop offset="0.8345" stop-color="#41edad"/><stop offset="1.0000" stop-color="#17edd6"/></linearGradient><linearGradient id="g52" gradientUnits="userSpaceOnUse" x1="1105" x2="1383" y1="0" y2="0"><stop offset="0.0000" stop-color="#edc700"/><stop offset="0.0144" stop-color="#edc100"/><stop offset="0.0791" stop-color="#edcd00"/><stop offset="0.2302" stop-color="#eced01"/><stop offset="0.5324" stop-color="#aced42"/><stop offset="0.6115" stop-color="#84ed69"/><stop offset="0.6727" stop-color="#65ed88"/><stop offset="0.8417" stop-color="#40edad"/><stop offset="1.0000" stop-color="#17edd6"/></linearGradient><linearGradient id="g53" gradientUnits="userSpaceOnUse" x1="1105" x2="1383" y1="0" y2="0"><stop offset="0.0000" stop-color="#edc300"/><stop offset="0.0144" stop-color="#edbd00"/><stop offset="0.0791" stop-color="#edcb00"/><stop offset="0.2446" stop-color="#ebed02"/><stop offset="0.5324" stop-color="#aded40"/><stop offset="0.6727" stop-color="#66ed87"/><stop offset="0.9496" stop-color="#25edc8"/><stop offset="1.0000" stop-color="#18edd5"/></linearGradient><linearGradient id="g54" gradientUnits="userSpaceOnUse" x1="1105" x2="1383" y1="0" y2="0"><stop offset="0.0000" stop-color="#edbf00"/><stop offset="0.0144" stop-color="#edb900"/><stop offset="0.2302" stop-color="#edea00"/><stop offset="0.4173" stop-color="#c9ed25"/><stop offset="0.5360" stop-color="#aeed3f"/><stop offset="0.6727" stop-color="#67ed86"/><stop offset="0.9496" stop-color="#26edc7"/><stop offset="1.0000" stop-color="#18edd5"/></linearGradient><linearGradient id="g55" gradientUnits="userSpaceOnUse" x1="1105" x2="1383" y1="0" y2="0"><stop offset="0.0000" stop-color="#edbb00"/><stop offset="0.0144" stop-color="#edb500"/><stop offset="0.1403" stop-color="#edd400"/><stop offset="0.2626" stop-color="#ebed02"/><stop offset="0.5324" stop-color="#b1ed3c"/><stop offset="0.6727" stop-color="#69ed85"/><stop offset="0.9532" stop-color="#25edc8"/><stop offset="1.0000" stop-color="#19edd4"/></linearGradient><linearGradient id="g56" gradientUnits="userSpaceOnUse" x1="1103" x2="1383" y1="0" y2="0"><stop offset="0.0000" stop-color="#edba00"/><stop offset="0.0179" stop-color="#edb100"/><stop offset="0.1429" stop-color="#edd100"/><stop offset="0.2750" stop-color="#ebed02"/><stop offset="0.5357" stop-color="#b3ed3a"/><stop offset="0.6750" stop-color="#6aed83"/><stop offset="0.9536" stop-color="#26edc7"/><stop offset="1.0000" stop-color="#19edd4"/></linearGradient><linearGradient id="g57" gradientUnits="userSpaceOnUse" x1="1100" x2="1383" y1="0" y2="0"><stop offset="0.0000" stop-color="#edbc00"/><stop offset="0.0283" stop-color="#edad00"/><stop offset="0.1449" stop-color="#edce00"/><stop offset="0.2933" stop-color="#ebed02"/><stop offset="0.5406" stop-color="#b5ed38"/><stop offset="0.6784" stop-color="#6bed82"/><stop offset="0.9611" stop-color="#25edc9"/><stop offset="1.0000" stop-color="#1aedd3"/></linearGradient><linearGradient id="g58" gradientUnits="userSpaceOnUse" x1="1097" x2="1383" y1="0" y2="0"><stop offset="0.0000" stop-color="#edbe00"/><stop offset="0.0385" stop-color="#edaa00"/><stop offset="0.1434" stop-color="#edc900"/><stop offset="0.3077" stop-color="#ebed02"/><stop offset="0.5420" stop-color="#b8ed35"/><stop offset="0.6818" stop-color="#6ced81"/><stop offset="0.9650" stop-color="#24edc9"/><stop offset="1.0000" stop-color="#1aedd3"/></linearGradient><linearGradient id="g59" gradientUnits="userSpaceOnUse" x1="1094" x2="1383" y1="0" y2="0"><stop offset="0.0000" stop-color="#edc000"/><stop offset="0.0484" stop-color="#eda600"/><stop offset="0.1488" stop-color="#edc600"/><stop offset="0.3253" stop-color="#ebed02"/><stop offset="0.5467" stop-color="#b9ed34"/><stop offset="0.6851" stop-color="#6ded80"/><stop offset="0.9792" stop-color="#21edcc"/><stop offset="1.0000" stop-color="#1bedd2"/></linearGradient><linearGradient id="g60" gradientUnits="userSpaceOnUse" x1="1091" x2="1383" y1="0" y2="0"><stop offset="0.0000" stop-color="#edc200"/><stop offset="0.0582" stop-color="#eda300"/><stop offset="0.1712" stop-color="#edc800"/><stop offset="0.3425" stop-color="#ebed02"/><stop offset="0.5479" stop-color="#bded30"/><stop offset="0.6884" stop-color="#6fed7f"/><stop offset="0.9863" stop-color="#20edcd"/><stop offset="1.0000" stop-color="#1cedd1"/></linearGradient><linearGradient id="g61" gradientUnits="userSpaceOnUse" x1="1088" x2="1383" y1="0" y2="0"><stop offset="0.0000" stop-color="#edc400"/><stop offset="0.0678" stop-color="#ed9f00"/><stop offset="0.1932" stop-color="#edc800"/><stop offset="0.3559" stop-color="#ebed02"/><stop offset="0.5525" stop-color="#bfed2e"/><stop offset="0.6915" stop-color="#70ed7d"/><stop offset="0.9864" stop-color="#21edcc"/><stop offset="1.0000" stop-color="#1dedd0"/></linearGradient><linearGradient id="g62" gradientUnits="userSpaceOnUse" x1="1085" x2="1383" y1="0" y2="0"><stop offset="0.0000" stop-color="#edc500"/><stop offset="0.0772" stop-color="#ed9c00"/><stop offset="0.2047" stop-color="#edc500"/><stop offset="0.3691" stop-color="#eced02"/><stop offset="0.5570" stop-color="#c1ed2d"/><stop offset="0.6946" stop-color="#71ed7c"/><stop offset="0.9799" stop-color="#24edc9"/><stop offset="1.0000" stop-color="#1fedcf"/></linearGradient><linearGradient id="g63" gradientUnits="userSpaceOnUse" x1="1082" x2="1383" y1="0" y2="0"><stop offset="0.0000" stop-color="#edc700"/><stop offset="0.0864" stop-color="#ed9800"/><stop offset="0.2193" stop-color="#edc400"/><stop offset="0.3821" stop-color="#eced01"/><stop offset="0.5615" stop-color="#c2ed2b"/><stop offset="0.6977" stop-color="#72ed7b"/><stop offset="0.9767" stop-color="#27edc6"/><stop offset="1.0000" stop-color="#20edcd"/></linearGradient><linearGradient id="g64" gradientUnits="userSpaceOnUse" x1="1079" x2="1383" y1="0" y2="0"><stop offset="0.0000" stop-color="#edc900"/><stop offset="0.0954" stop-color="#ed9500"/><stop offset="0.2336" stop-color="#edc200"/><stop offset="0.3947" stop-color="#eced01"/><stop offset="0.5625" stop-color="#c6ed27"/><stop offset="0.6974" stop-color="#74ed79"/><stop offset="0.9671" stop-color="#2bedc2"/><stop offset="1.0000" stop-color="#21edcc"/></linearGradient><linearGradient id="g65" gradientUnits="userSpaceOnUse" x1="1076" x2="1383" y1="0" y2="0"><stop offset="0.0000" stop-color="#edcb00"/><stop offset="0.1042" stop-color="#ed9100"/><stop offset="0.2541" stop-color="#edc200"/><stop offset="0.4104" stop-color="#eced01"/><stop offset="0.5668" stop-color="#c8ed25"/><stop offset="0.6906" stop-color="#7aed73"/><stop offset="0.7199" stop-color="#71ed7d"/><stop offset="1.0000" stop-color="#23edcb"/></linearGradient><linearGradient id="g66" gradientUnits="userSpaceOnUse" x1="1073" x2="1383" y1="0" y2="0"><stop offset="0.0000" stop-color="#edcd00"/><stop offset="0.1129" stop-color="#ed8e00"/><stop offset="0.2806" stop-color="#edc400"/><stop offset="0.4290" stop-color="#ebed02"/><stop offset="0.5710" stop-color="#caed24"/><stop offset="0.6871" stop-color="#80ed6d"/><stop offset="0.7065" stop-color="#75ed78"/><stop offset="0.9645" stop-color="#2fedbf"/><stop offset="1.0000" stop-color="#24edc9"/></linearGradient><linearGradient id="g67" gradientUnits="userSpaceOnUse" x1="1070" x2="1383" y1="0" y2="0"><stop offset="0.0000" stop-color="#edcf00"/><stop offset="0.1214" stop-color="#ed8a00"/><stop offset="0.3227" stop-color="#edca00"/><stop offset="0.4409" stop-color="#eced01"/><stop offset="0.5751" stop-color="#cbed22"/><stop offset="0.6837" stop-color="#86ed68"/><stop offset="0.7093" stop-color="#76ed77"/><stop offset="0.9617" stop-color="#31edbc"/><stop offset="1.0000" stop-color="#25edc8"/></linearGradient><linearGradient id="g68" gradientUnits="userSpaceOnUse" x1="1067" x2="1383" y1="0" y2="0"><stop offset="0.0000" stop-color="#edd100"/><stop offset="0.1297" stop-color="#ed8700"/><stop offset="0.3513" stop-color="#edcd00"/><stop offset="0.4557" stop-color="#eced01"/><stop offset="0.5791" stop-color="#cded20"/><stop offset="0.6835" stop-color="#89ed64"/><stop offset="0.7120" stop-color="#77ed76"/><stop offset="0.9589" stop-color="#33edba"/><stop offset="1.0000" stop-color="#27edc7"/></linearGradient><linearGradient id="g69" gradientUnits="userSpaceOnUse" x1="1064" x2="1383" y1="0" y2="0"><stop offset="0.0000" stop-color="#edd200"/><stop offset="0.1379" stop-color="#ed8300"/><stop offset="0.4671" stop-color="#eded00"/><stop offset="0.5799" stop-color="#d0ed1d"/><stop offset="0.6740" stop-color="#93ed5a"/><stop offset="0.7116" stop-color="#79ed74"/><stop offset="0.9530" stop-color="#37edb7"/><stop offset="1.0000" stop-color="#28edc5"/></linearGradient><linearGradient id="g70" gradientUnits="userSpaceOnUse" x1="1061" x2="1383" y1="0" y2="0"><stop offset="0.0000" stop-color="#edd400"/><stop offset="0.1460" stop-color="#ed8000"/><stop offset="0.4845" stop-color="#eced01"/><stop offset="0.5839" stop-color="#d2ed1b"/><stop offset="0.6739" stop-color="#97ed57"/><stop offset="0.7143" stop-color="#7aed73"/><stop offset="0.9534" stop-color="#38edb5"/><stop offset="1.0000" stop-color="#29edc4"/></linearGradient><linearGradient id="g71" gradientUnits="userSpaceOnUse" x1="1058" x2="1383" y1="0" y2="0"><stop offset="0.0000" stop-color="#edd600"/><stop offset="0.1538" stop-color="#ed7c00"/><stop offset="0.4985" stop-color="#eced01"/><stop offset="0.5846" stop-color="#d5ed18"/><stop offset="0.6646" stop-color="#a1ed4c"/><stop offset="0.7169" stop-color="#7bed72"/><stop offset="0.9508" stop-color="#3aedb3"/><stop offset="1.0000" stop-color="#2bedc3"/></linearGradient><linearGradient id="g72" gradientUnits="userSpaceOnUse" x1="1055" x2="1383" y1="0" y2="0"><stop offset="0.0000" stop-color="#edd800"/><stop offset="0.1616" stop-color="#ed7900"/><stop offset="0.5122" stop-color="#eced01"/><stop offset="0.5884" stop-color="#d6ed17"/><stop offset="0.6646" stop-color="#a4ed49"/><stop offset="0.7195" stop-color="#7ced71"/><stop offset="0.9451" stop-color="#3dedb0"/><stop offset="1.0000" stop-color="#2cedc1"/></linearGradient><linearGradient id="g73" gradientUnits="userSpaceOnUse" x1="1052" x2="1383" y1="0" y2="0"><stop offset="0.0000" stop-color="#edd900"/><stop offset="0.1692" stop-color="#ed7500"/><stop offset="0.5257" stop-color="#eced01"/><stop offset="0.5982" stop-color="#d6ed17"/><stop offset="0.6858" stop-color="#97ed56"/><stop offset="0.7221" stop-color="#7ded70"/><stop offset="0.9335" stop-color="#43edab"/><stop offset="1.0000" stop-color="#2dedc0"/></linearGradient><linearGradient id="g74" gradientUnits="userSpaceOnUse" x1="1049" x2="1383" y1="0" y2="0"><stop offset="0.0000" stop-color="#edda00"/><stop offset="0.1766" stop-color="#ed7200"/><stop offset="0.5389" stop-color="#eced01"/><stop offset="0.6048" stop-color="#d6ed17"/><stop offset="0.7126" stop-color="#86ed67"/><stop offset="0.7305" stop-color="#7ded70"/><stop offset="0.9401" stop-color="#42edab"/><stop offset="1.0000" stop-color="#2fedbf"/></linearGradient><linearGradient id="g75" gradientUnits="userSpaceOnUse" x1="1046" x2="1383" y1="0" y2="0"><stop offset="0.0000" stop-color="#eddb00"/><stop offset="0.1840" stop-color="#ed6e00"/><stop offset="0.5519" stop-color="#eced01"/><stop offset="0.6142" stop-color="#d4ed19"/><stop offset="0.7270" stop-color="#7fed6e"/><stop offset="0.9139" stop-color="#4ceda1"/><stop offset="1.0000" stop-color="#30edbd"/></linearGradient><linearGradient id="g76" gradientUnits="userSpaceOnUse" x1="1043" x2="1383" y1="0" y2="0"><stop offset="0.0000" stop-color="#eddb00"/><stop offset="0.0647" stop-color="#edb800"/><stop offset="0.1912" stop-color="#ed6b00"/><stop offset="0.5647" stop-color="#eced01"/><stop offset="0.6176" stop-color="#d5ed18"/><stop offset="0.7294" stop-color="#81ed6d"/><stop offset="0.9088" stop-color="#4fed9e"/><stop offset="1.0000" stop-color="#31edbc"/></linearGradient><linearGradient id="g77" gradientUnits="userSpaceOnUse" x1="1040" x2="1383" y1="0" y2="0"><stop offset="0.0000" stop-color="#eddc00"/><stop offset="0.0641" stop-color="#edbb00"/><stop offset="0.1983" stop-color="#ed6800"/><stop offset="0.5773" stop-color="#ebed03"/><stop offset="0.6210" stop-color="#d7ed16"/><stop offset="0.7318" stop-color="#82ed6c"/><stop offset="0.9067" stop-color="#51ed9c"/><stop offset="1.0000" stop-color="#33edbb"/></linearGradient><linearGradient id="g78" gradientUnits="userSpaceOnUse" x1="1037" x2="1383" y1="0" y2="0"><stop offset="0.0000" stop-color="#eddd00"/><stop offset="0.0723" stop-color="#edb900"/><stop offset="0.2081" stop-color="#ed6600"/><stop offset="0.5809" stop-color="#eced02"/><stop offset="0.6243" stop-color="#d9ed14"/><stop offset="0.7341" stop-color="#83ed6a"/><stop offset="0.9046" stop-color="#53ed9a"/><stop offset="1.0000" stop-color="#34edb9"/></linearGradient><linearGradient id="g79" gradientUnits="userSpaceOnUse" x1="1034" x2="1383" y1="0" y2="0"><stop offset="0.0000" stop-color="#edde00"/><stop offset="0.0831" stop-color="#edb400"/><stop offset="0.2149" stop-color="#ed6400"/><stop offset="0.5731" stop-color="#ede900"/><stop offset="0.5931" stop-color="#e9ed04"/><stop offset="0.6246" stop-color="#dced11"/><stop offset="0.7364" stop-color="#84ed69"/><stop offset="0.9054" stop-color="#55ed99"/><stop offset="1.0000" stop-color="#35edb8"/></linearGradient><linearGradient id="g80" gradientUnits="userSpaceOnUse" x1="1031" x2="1383" y1="0" y2="0"><stop offset="0.0000" stop-color="#eddf00"/><stop offset="0.0966" stop-color="#edae00"/><stop offset="0.2216" stop-color="#ed6100"/><stop offset="0.5710" stop-color="#ede500"/><stop offset="0.5938" stop-color="#ebed02"/><stop offset="0.6278" stop-color="#dded10"/><stop offset="0.7386" stop-color="#85ed68"/><stop offset="0.9034" stop-color="#57ed96"/><stop offset="1.0000" stop-color="#37edb7"/></linearGradient><linearGradient id="g81" gradientUnits="userSpaceOnUse" x1="1028" x2="1383" y1="0" y2="0"><stop offset="0.0000" stop-color="#eddf00"/><stop offset="0.1070" stop-color="#edaa00"/><stop offset="0.2282" stop-color="#ed5e00"/><stop offset="0.5662" stop-color="#eddf00"/><stop offset="0.5972" stop-color="#eced01"/><stop offset="0.6310" stop-color="#deed0f"/><stop offset="0.7408" stop-color="#86ed67"/><stop offset="0.9042" stop-color="#58ed95"/><stop offset="1.0000" stop-color="#38edb5"/></linearGradient><linearGradient id="g82" gradientUnits="userSpaceOnUse" x1="1025" x2="1383" y1="0" y2="0"><stop offset="0.0000" stop-color="#ede000"/><stop offset="0.1201" stop-color="#eda400"/><stop offset="0.2346" stop-color="#ed5b00"/><stop offset="0.5642" stop-color="#eddb00"/><stop offset="0.6034" stop-color="#ebed02"/><stop offset="0.6341" stop-color="#dfed0e"/><stop offset="0.7430" stop-color="#87ed66"/><stop offset="0.9050" stop-color="#59ed94"/><stop offset="1.0000" stop-color="#39edb4"/></linearGradient><linearGradient id="g83" gradientUnits="userSpaceOnUse" x1="1022" x2="1383" y1="0" y2="0"><stop offset="0.0000" stop-color="#ede100"/><stop offset="0.1302" stop-color="#eda000"/><stop offset="0.2410" stop-color="#ed5900"/><stop offset="0.5596" stop-color="#edd500"/><stop offset="0.6066" stop-color="#eced01"/><stop offset="0.6399" stop-color="#deed0f"/><stop offset="0.7452" stop-color="#88ed65"/><stop offset="0.9086" stop-color="#5aed93"/><stop offset="1.0000" stop-color="#3bedb3"/></linearGradient><linearGradient id="g84" gradientUnits="userSpaceOnUse" x1="1019" x2="1383" y1="0" y2="0"><stop offset="0.0000" stop-color="#ede200"/><stop offset="0.1429" stop-color="#ed9a00"/><stop offset="0.2473" stop-color="#ed5600"/><stop offset="0.5549" stop-color="#edd000"/><stop offset="0.6126" stop-color="#eced01"/><stop offset="0.6429" stop-color="#dfed0e"/><stop offset="0.7473" stop-color="#89ed64"/><stop offset="0.9066" stop-color="#5ced91"/><stop offset="1.0000" stop-color="#3cedb1"/></linearGradient><linearGradient id="g85" gradientUnits="userSpaceOnUse" x1="1016" x2="1383" y1="0" y2="0"><stop offset="0.0000" stop-color="#ede200"/><stop offset="0.1553" stop-color="#ed9400"/><stop offset="0.2534" stop-color="#ed5300"/><stop offset="0.5204" stop-color="#edbc00"/><stop offset="0.6185" stop-color="#eced01"/><stop offset="0.6458" stop-color="#e0ed0d"/><stop offset="0.7493" stop-color="#8aed63"/><stop offset="0.9101" stop-color="#5ced91"/><stop offset="1.0000" stop-color="#3dedb0"/></linearGradient><linearGradient id="g86" gradientUnits="userSpaceOnUse" x1="1013" x2="1383" y1="0" y2="0"><stop offset="0.0000" stop-color="#ede300"/><stop offset="0.1649" stop-color="#ed9000"/><stop offset="0.2595" stop-color="#ed5100"/><stop offset="0.5514" stop-color="#edc700"/><stop offset="0.6216" stop-color="#eced01"/><stop offset="0.6486" stop-color="#e1ed0d"/><stop offset="0.7514" stop-color="#8bed62"/><stop offset="0.9108" stop-color="#5eed90"/><stop offset="1.0000" stop-color="#3fedaf"/></linearGradient><linearGradient id="g87" gradientUnits="userSpaceOnUse" x1="1010" x2="1383" y1="0" y2="0"><stop offset="0.0000" stop-color="#ede400"/><stop offset="0.1769" stop-color="#ed8a00"/><stop offset="0.2681" stop-color="#ed4f00"/><stop offset="0.4718" stop-color="#eda200"/><stop offset="0.5496" stop-color="#edc300"/><stop offset="0.6273" stop-color="#eced01"/><stop offset="0.6542" stop-color="#dfed0e"/><stop offset="0.7534" stop-color="#8ced61"/><stop offset="0.9142" stop-color="#5eed8f"/><stop offset="1.0000" stop-color="#40edad"/></linearGradient><linearGradient id="g88" gradientUnits="userSpaceOnUse" x1="1007" x2="1383" y1="0" y2="0"><stop offset="0.0000" stop-color="#ede500"/><stop offset="0.1888" stop-color="#ed8400"/><stop offset="0.2739" stop-color="#ed4c00"/><stop offset="0.4734" stop-color="#ed9e00"/><stop offset="0.5479" stop-color="#edbf00"/><stop offset="0.6330" stop-color="#eced01"/><stop offset="0.6569" stop-color="#e0ed0d"/><stop offset="0.7553" stop-color="#8ded60"/><stop offset="0.9149" stop-color="#5fed8e"/><stop offset="1.0000" stop-color="#41edac"/></linearGradient><linearGradient id="g89" gradientUnits="userSpaceOnUse" x1="1004" x2="1383" y1="0" y2="0"><stop offset="0.0000" stop-color="#ede600"/><stop offset="0.1979" stop-color="#ed7f00"/><stop offset="0.2797" stop-color="#ed4900"/><stop offset="0.4802" stop-color="#ed9d00"/><stop offset="0.5462" stop-color="#edbb00"/><stop offset="0.6385" stop-color="#eced01"/><stop offset="0.6596" stop-color="#e1ed0c"/><stop offset="0.7573" stop-color="#8eed5f"/><stop offset="0.9182" stop-color="#60ed8e"/><stop offset="1.0000" stop-color="#43edaa"/></linearGradient><linearGradient id="g90" gradientUnits="userSpaceOnUse" x1="1001" x2="1383" y1="0" y2="0"><stop offset="0.0000" stop-color="#ede600"/><stop offset="0.2094" stop-color="#ed7900"/><stop offset="0.2853" stop-color="#ed4700"/><stop offset="0.4869" stop-color="#ed9c00"/><stop offset="0.5471" stop-color="#edb800"/><stop offset="0.6414" stop-color="#eced01"/><stop offset="0.6623" stop-color="#e2ed0b"/><stop offset="0.7592" stop-color="#8fed5e"/><stop offset="0.9188" stop-color="#61ed8c"/><stop offset="1.0000" stop-color="#44eda9"/></linearGradient><linearGradient id="g91" gradientUnits="userSpaceOnUse" x1="998" x2="1383" y1="0" y2="0"><stop offset="0.0000" stop-color="#ede700"/><stop offset="0.2208" stop-color="#ed7300"/><stop offset="0.2909" stop-color="#ed4400"/><stop offset="0.4961" stop-color="#ed9c00"/><stop offset="0.5532" stop-color="#edb900"/><stop offset="0.6468" stop-color="#eced01"/><stop offset="0.6675" stop-color="#e1ed0c"/><stop offset="0.7610" stop-color="#91ed5d"/><stop offset="0.9221" stop-color="#61ed8c"/><stop offset="1.0000" stop-color="#46eda7"/></linearGradient><linearGradient id="g92" gradientUnits="userSpaceOnUse" x1="995" x2="1383" y1="0" y2="0"><stop offset="0.0000" stop-color="#ede800"/><stop offset="0.2294" stop-color="#ed6f00"/><stop offset="0.2964" stop-color="#ed4100"/><stop offset="0.5052" stop-color="#ed9b00"/><stop offset="0.6521" stop-color="#eced01"/><stop offset="0.6701" stop-color="#e2ed0c"/><stop offset="0.7629" stop-color="#92ed5c"/><stop offset="0.9278" stop-color="#61ed8c"/><stop offset="1.0000" stop-color="#47eda6"/></linearGradient><linearGradient id="g93" gradientUnits="userSpaceOnUse" x1="992" x2="1383" y1="0" y2="0"><stop offset="0.0000" stop-color="#ede900"/><stop offset="0.2404" stop-color="#ed6900"/><stop offset="0.3018" stop-color="#ed3e00"/><stop offset="0.5294" stop-color="#eda400"/><stop offset="0.6547" stop-color="#eded01"/><stop offset="0.6752" stop-color="#e0ed0d"/><stop offset="0.7647" stop-color="#93ed5a"/><stop offset="0.9309" stop-color="#61ed8c"/><stop offset="1.0000" stop-color="#49eda5"/></linearGradient><linearGradient id="g94" gradientUnits="userSpaceOnUse" x1="989" x2="1383" y1="0" y2="0"><stop offset="0.0000" stop-color="#ede900"/><stop offset="0.2513" stop-color="#ed6300"/><stop offset="0.3071" stop-color="#ed3c00"/><stop offset="0.5279" stop-color="#eda000"/><stop offset="0.6599" stop-color="#eced01"/><stop offset="0.6802" stop-color="#dfed0e"/><stop offset="0.7665" stop-color="#95ed58"/><stop offset="0.9365" stop-color="#61ed8c"/><stop offset="1.0000" stop-color="#4aeda3"/></linearGradient><linearGradient id="g95" gradientUnits="userSpaceOnUse" x1="986" x2="1383" y1="0" y2="0"><stop offset="0.0000" stop-color="#edea00"/><stop offset="0.2594" stop-color="#ed5f00"/><stop offset="0.3149" stop-color="#ed3a00"/><stop offset="0.5264" stop-color="#ed9c00"/><stop offset="0.6650" stop-color="#eced01"/><stop offset="0.6877" stop-color="#dbed12"/><stop offset="0.7657" stop-color="#98ed55"/><stop offset="0.9421" stop-color="#60ed8d"/><stop offset="1.0000" stop-color="#4beda2"/></linearGradient><linearGradient id="g96" gradientUnits="userSpaceOnUse" x1="983" x2="1383" y1="0" y2="0"><stop offset="0.0000" stop-color="#edeb00"/><stop offset="0.2700" stop-color="#ed5900"/><stop offset="0.3200" stop-color="#ed3700"/><stop offset="0.5225" stop-color="#ed9600"/><stop offset="0.6700" stop-color="#eced01"/><stop offset="0.7700" stop-color="#99ed54"/><stop offset="0.9475" stop-color="#60ed8d"/><stop offset="1.0000" stop-color="#4deda0"/></linearGradient><linearGradient id="g97" gradientUnits="userSpaceOnUse" x1="980" x2="1383" y1="0" y2="0"><stop offset="0.0000" stop-color="#edec00"/><stop offset="0.2804" stop-color="#ed5300"/><stop offset="0.3251" stop-color="#ed3400"/><stop offset="0.5211" stop-color="#ed9200"/><stop offset="0.6725" stop-color="#eded01"/><stop offset="0.7717" stop-color="#9bed52"/><stop offset="0.9553" stop-color="#5fed8e"/><stop offset="1.0000" stop-color="#4eed9f"/></linearGradient><linearGradient id="g98" gradientUnits="userSpaceOnUse" x1="977" x2="1383" y1="0" y2="0"><stop offset="0.0000" stop-color="#eded00"/><stop offset="0.2882" stop-color="#ed4f00"/><stop offset="0.3300" stop-color="#ed3200"/><stop offset="0.5197" stop-color="#ed8e00"/><stop offset="0.6773" stop-color="#eced01"/><stop offset="0.7734" stop-color="#9ded50"/><stop offset="0.9680" stop-color="#5ced92"/><stop offset="1.0000" stop-color="#50ed9d"/></linearGradient><linearGradient id="g99" gradientUnits="userSpaceOnUse" x1="974" x2="1383" y1="0" y2="0"><stop offset="0.0000" stop-color="#eded00"/><stop offset="0.2983" stop-color="#ed4900"/><stop offset="0.3350" stop-color="#ed2f00"/><stop offset="0.5086" stop-color="#ed8400"/><stop offset="0.6822" stop-color="#eced01"/><stop offset="0.7751" stop-color="#9fed4e"/><stop offset="0.8875" stop-color="#7aed73"/><stop offset="1.0000" stop-color="#51ed9c"/></linearGradient><linearGradient id="g100" gradientUnits="userSpaceOnUse" x1="971" x2="1383" y1="0" y2="0"><stop offset="0.0000" stop-color="#eced01"/><stop offset="0.3083" stop-color="#ed4300"/><stop offset="0.3398" stop-color="#ed2c00"/><stop offset="0.5000" stop-color="#ed7c00"/><stop offset="0.6869" stop-color="#ebed02"/><stop offset="0.7791" stop-color="#a0ed4d"/><stop offset="0.8786" stop-color="#7fed6f"/><stop offset="1.0000" stop-color="#52ed9b"/></linearGradient><linearGradient id="g101" gradientUnits="userSpaceOnUse" x1="968" x2="1383" y1="0" y2="0"><stop offset="0.0000" stop-color="#ebed02"/><stop offset="0.3157" stop-color="#ed3f00"/><stop offset="0.3446" stop-color="#ed2900"/><stop offset="0.4940" stop-color="#ed7400"/><stop offset="0.6892" stop-color="#eced01"/><stop offset="0.7807" stop-color="#a2ed4b"/><stop offset="0.8747" stop-color="#81ed6c"/><stop offset="1.0000" stop-color="#54ed99"/></linearGradient><linearGradient id="g102" gradientUnits="userSpaceOnUse" x1="965" x2="1383" y1="0" y2="0"><stop offset="0.0000" stop-color="#ebed02"/><stop offset="0.0789" stop-color="#edc400"/><stop offset="0.3254" stop-color="#ed3900"/><stop offset="0.3493" stop-color="#ed2700"/><stop offset="0.4856" stop-color="#ed6c00"/><stop offset="0.6483" stop-color="#edd300"/><stop offset="0.6938" stop-color="#ebed02"/><stop offset="0.7823" stop-color="#a4ed49"/><stop offset="0.8756" stop-color="#83ed6a"/><stop offset="1.0000" stop-color="#55ed98"/></linearGradient><linearGradient id="g103" gradientUnits="userSpaceOnUse" x1="962" x2="1383" y1="0" y2="0"><stop offset="0.0000" stop-color="#ebed02"/><stop offset="0.0238" stop-color="#ede300"/><stop offset="0.3349" stop-color="#ed3300"/><stop offset="0.3563" stop-color="#ed2500"/><stop offset="0.4774" stop-color="#ed6300"/><stop offset="0.6010" stop-color="#edb400"/><stop offset="0.6983" stop-color="#ebed02"/><stop offset="0.7838" stop-color="#a6ed47"/><stop offset="0.8765" stop-color="#84ed69"/><stop offset="1.0000" stop-color="#57ed96"/></linearGradient><linearGradient id="g104" gradientUnits="userSpaceOnUse" x1="959" x2="1383" y1="0" y2="0"><stop offset="0.0000" stop-color="#eced01"/><stop offset="0.0189" stop-color="#ede700"/><stop offset="0.3443" stop-color="#ed2d00"/><stop offset="0.3608" stop-color="#ed2200"/><stop offset="0.4717" stop-color="#ed5c00"/><stop offset="0.5920" stop-color="#edac00"/><stop offset="0.7005" stop-color="#eced01"/><stop offset="0.7854" stop-color="#a8ed45"/><stop offset="0.8821" stop-color="#84ed69"/><stop offset="1.0000" stop-color="#58ed95"/></linearGradient><linearGradient id="g105" gradientUnits="userSpaceOnUse" x1="956" x2="1383" y1="0" y2="0"><stop offset="0.0000" stop-color="#eded00"/><stop offset="0.0164" stop-color="#ede900"/><stop offset="0.3513" stop-color="#ed2800"/><stop offset="0.3653" stop-color="#ed2000"/><stop offset="0.4637" stop-color="#ed5400"/><stop offset="0.5902" stop-color="#eda900"/><stop offset="0.7026" stop-color="#eded00"/><stop offset="0.7869" stop-color="#aaed43"/><stop offset="0.8852" stop-color="#85ed68"/><stop offset="1.0000" stop-color="#5aed94"/></linearGradient><linearGradient id="g106" gradientUnits="userSpaceOnUse" x1="953" x2="1383" y1="0" y2="0"><stop offset="0.0000" stop-color="#edeb00"/><stop offset="0.0209" stop-color="#ede600"/><stop offset="0.3605" stop-color="#ed2200"/><stop offset="0.3698" stop-color="#ed1d00"/><stop offset="0.4558" stop-color="#ed4b00"/><stop offset="0.5372" stop-color="#ed8500"/><stop offset="0.7047" stop-color="#edec00"/><stop offset="0.7395" stop-color="#d4ed19"/><stop offset="0.7884" stop-color="#aced41"/><stop offset="0.8907" stop-color="#85ed68"/><stop offset="1.0000" stop-color="#5bed92"/></linearGradient><linearGradient id="g107" gradientUnits="userSpaceOnUse" x1="950" x2="1383" y1="0" y2="0"><stop offset="0.0000" stop-color="#edea00"/><stop offset="0.0208" stop-color="#ede600"/><stop offset="0.3672" stop-color="#ed1e00"/><stop offset="0.3764" stop-color="#ed1b00"/><stop offset="0.4503" stop-color="#ed4400"/><stop offset="0.5312" stop-color="#ed7d00"/><stop offset="0.6998" stop-color="#ede800"/><stop offset="0.7159" stop-color="#e9ed04"/><stop offset="0.7898" stop-color="#aeed3f"/><stop offset="0.8961" stop-color="#85ed69"/><stop offset="1.0000" stop-color="#5ced91"/></linearGradient><linearGradient id="g108" gradientUnits="userSpaceOnUse" x1="947" x2="1383" y1="0" y2="0"><stop offset="0.0000" stop-color="#ede900"/><stop offset="0.0206" stop-color="#ede400"/><stop offset="0.3670" stop-color="#ed1f00"/><stop offset="0.3784" stop-color="#ed1700"/><stop offset="0.4472" stop-color="#ed3f00"/><stop offset="0.5321" stop-color="#ed7b00"/><stop offset="0.6628" stop-color="#edd100"/><stop offset="0.7156" stop-color="#ebed02"/><stop offset="0.7546" stop-color="#cfed1f"/><stop offset="0.7913" stop-color="#b0ed3d"/><stop offset="1.0000" stop-color="#5ded90"/></linearGradient><linearGradient id="g109" gradientUnits="userSpaceOnUse" x1="944" x2="1383" y1="0" y2="0"><stop offset="0.0000" stop-color="#ede800"/><stop offset="0.0205" stop-color="#ede300"/><stop offset="0.1207" stop-color="#edad00"/><stop offset="0.3827" stop-color="#ed1500"/><stop offset="0.4510" stop-color="#ed3e00"/><stop offset="0.5308" stop-color="#ed7700"/><stop offset="0.6036" stop-color="#eda900"/><stop offset="0.7107" stop-color="#edea00"/><stop offset="0.7380" stop-color="#e0ed0d"/><stop offset="0.7927" stop-color="#b2ed3b"/><stop offset="1.0000" stop-color="#5eed8f"/></linearGradient><linearGradient id="g110" gradientUnits="userSpaceOnUse" x1="941" x2="1383" y1="0" y2="0"><stop offset="0.0000" stop-color="#ede700"/><stop offset="0.0204" stop-color="#ede200"/><stop offset="0.0950" stop-color="#edbb00"/><stop offset="0.3891" stop-color="#ed1300"/><stop offset="0.5181" stop-color="#ed6900"/><stop offset="0.5905" stop-color="#ed9f00"/><stop offset="0.7036" stop-color="#ede400"/><stop offset="0.7240" stop-color="#ebed03"/><stop offset="0.7624" stop-color="#cfed1e"/><stop offset="0.7941" stop-color="#b4ed39"/><stop offset="1.0000" stop-color="#5fed8e"/></linearGradient><linearGradient id="g111" gradientUnits="userSpaceOnUse" x1="938" x2="1383" y1="0" y2="0"><stop offset="0.0000" stop-color="#ede500"/><stop offset="0.0202" stop-color="#ede100"/><stop offset="0.0944" stop-color="#edbb00"/><stop offset="0.3933" stop-color="#ed1000"/><stop offset="0.5213" stop-color="#ed6900"/><stop offset="0.5933" stop-color="#ed9f00"/><stop offset="0.7011" stop-color="#ede100"/><stop offset="0.7281" stop-color="#eaed03"/><stop offset="0.7663" stop-color="#cfed1e"/><stop offset="0.7955" stop-color="#b6ed37"/><stop offset="1.0000" stop-color="#60ed8d"/></linearGradient><linearGradient id="g112" gradientUnits="userSpaceOnUse" x1="935" x2="1383" y1="0" y2="0"><stop offset="0.0000" stop-color="#ede400"/><stop offset="0.0201" stop-color="#eddf00"/><stop offset="0.0982" stop-color="#edb900"/><stop offset="0.3929" stop-color="#ed0f00"/><stop offset="0.5022" stop-color="#ed5600"/><stop offset="0.5938" stop-color="#ed9d00"/><stop offset="0.6987" stop-color="#edde00"/><stop offset="0.7299" stop-color="#ebed02"/><stop offset="0.7701" stop-color="#cfed1e"/><stop offset="0.7969" stop-color="#b8ed35"/><stop offset="1.0000" stop-color="#61ed8c"/></linearGradient><linearGradient id="g113" gradientUnits="userSpaceOnUse" x1="932" x2="1383" y1="0" y2="0"><stop offset="0.0000" stop-color="#ede300"/><stop offset="0.0200" stop-color="#edde00"/><stop offset="0.1042" stop-color="#edb500"/><stop offset="0.3902" stop-color="#ed0f00"/><stop offset="0.4989" stop-color="#ed5000"/><stop offset="0.5987" stop-color="#ed9e00"/><stop offset="0.6984" stop-color="#eddc00"/><stop offset="0.7339" stop-color="#eaed03"/><stop offset="0.7738" stop-color="#cfed1e"/><stop offset="0.7982" stop-color="#baed33"/><stop offset="1.0000" stop-color="#62ed8c"/></linearGradient><linearGradient id="g114" gradientUnits="userSpaceOnUse" x1="929" x2="1383" y1="0" y2="0"><stop offset="0.0000" stop-color="#ede200"/><stop offset="0.0198" stop-color="#eddd00"/><stop offset="0.1101" stop-color="#edb100"/><stop offset="0.3877" stop-color="#ed0f00"/><stop offset="0.5132" stop-color="#ed5900"/><stop offset="0.6035" stop-color="#ed9f00"/><stop offset="0.7026" stop-color="#eddc00"/><stop offset="0.7335" stop-color="#eaed03"/><stop offset="0.7775" stop-color="#cded20"/><stop offset="0.8018" stop-color="#bbed32"/><stop offset="1.0000" stop-color="#61ed8c"/></linearGradient><linearGradient id="g115" gradientUnits="userSpaceOnUse" x1="926" x2="1278" y1="0" y2="0"><stop offset="0.0000" stop-color="#ede000"/><stop offset="0.0256" stop-color="#eddc00"/><stop offset="0.1506" stop-color="#edad00"/><stop offset="0.5000" stop-color="#ed0f00"/><stop offset="0.6847" stop-color="#ed6100"/><stop offset="0.7926" stop-color="#eda200"/><stop offset="0.9347" stop-color="#ede700"/><stop offset="0.9489" stop-color="#eaed03"/><stop offset="1.0000" stop-color="#d0ed1d"/></linearGradient><linearGradient id="g116" gradientUnits="userSpaceOnUse" x1="923" x2="1275" y1="0" y2="0"><stop offset="0.0000" stop-color="#eddf00"/><stop offset="0.0256" stop-color="#eddb00"/><stop offset="0.1619" stop-color="#eda800"/><stop offset="0.5000" stop-color="#ed0f00"/><stop offset="0.7045" stop-color="#ed6800"/><stop offset="0.8068" stop-color="#eda500"/><stop offset="0.9261" stop-color="#eddf00"/><stop offset="0.9489" stop-color="#ebed02"/><stop offset="1.0000" stop-color="#d2ed1b"/></linearGradient><linearGradient id="g117" gradientUnits="userSpaceOnUse" x1="920" x2="1272" y1="0" y2="0"><stop offset="0.0000" stop-color="#edde00"/><stop offset="0.0256" stop-color="#edd900"/><stop offset="0.1705" stop-color="#eda400"/><stop offset="0.5000" stop-color="#ed0f00"/><stop offset="0.6477" stop-color="#ed4e00"/><stop offset="0.7273" stop-color="#ed7000"/><stop offset="0.8210" stop-color="#eda700"/><stop offset="0.9176" stop-color="#edd600"/><stop offset="0.9517" stop-color="#eced01"/><stop offset="1.0000" stop-color="#d3ed1a"/></linearGradient><linearGradient id="g118" gradientUnits="userSpaceOnUse" x1="917" x2="1269" y1="0" y2="0"><stop offset="0.0000" stop-color="#eddd00"/><stop offset="0.0256" stop-color="#edd800"/><stop offset="0.1818" stop-color="#ed9f00"/><stop offset="0.5000" stop-color="#ed0f00"/><stop offset="0.6335" stop-color="#ed4700"/><stop offset="0.7500" stop-color="#ed7900"/><stop offset="0.8381" stop-color="#edac00"/><stop offset="0.9091" stop-color="#edce00"/><stop offset="0.9545" stop-color="#eced01"/><stop offset="1.0000" stop-color="#d4ed19"/></linearGradient><linearGradient id="g119" gradientUnits="userSpaceOnUse" x1="914" x2="1266" y1="0" y2="0"><stop offset="0.0000" stop-color="#eddc00"/><stop offset="0.0256" stop-color="#edd700"/><stop offset="0.1932" stop-color="#ed9a00"/><stop offset="0.5000" stop-color="#ed0f00"/><stop offset="0.6307" stop-color="#ed4500"/><stop offset="0.7727" stop-color="#ed8100"/><stop offset="0.8551" stop-color="#edaf00"/><stop offset="0.9034" stop-color="#edc800"/><stop offset="0.9574" stop-color="#eced01"/><stop offset="1.0000" stop-color="#d5ed18"/></linearGradient><linearGradient id="g120" gradientUnits="userSpaceOnUse" x1="911" x2="1263" y1="0" y2="0"><stop offset="0.0000" stop-color="#edda00"/><stop offset="0.0256" stop-color="#edd600"/><stop offset="0.2045" stop-color="#ed9400"/><stop offset="0.5000" stop-color="#ed0f00"/><stop offset="0.6307" stop-color="#ed4500"/><stop offset="0.7528" stop-color="#ed7600"/><stop offset="0.7955" stop-color="#ed8a00"/><stop offset="0.8750" stop-color="#edb400"/><stop offset="0.9631" stop-color="#ebed02"/><stop offset="1.0000" stop-color="#d7ed17"/></linearGradient><linearGradient id="g121" gradientUnits="userSpaceOnUse" x1="908" x2="1260" y1="0" y2="0"><stop offset="0.0000" stop-color="#edd900"/><stop offset="0.0256" stop-color="#edd400"/><stop offset="0.2159" stop-color="#ed8f00"/><stop offset="0.5000" stop-color="#ed0f00"/><stop offset="0.6364" stop-color="#ed4700"/><stop offset="0.7614" stop-color="#ed7900"/><stop offset="0.8153" stop-color="#ed9000"/><stop offset="0.8920" stop-color="#edbb00"/><stop offset="0.9659" stop-color="#ebed02"/><stop offset="1.0000" stop-color="#d8ed15"/></linearGradient><linearGradient id="g122" gradientUnits="userSpaceOnUse" x1="905" x2="1257" y1="0" y2="0"><stop offset="0.0000" stop-color="#edd800"/><stop offset="0.0256" stop-color="#edd300"/><stop offset="0.2244" stop-color="#ed8b00"/><stop offset="0.5000" stop-color="#ed0f00"/><stop offset="0.6449" stop-color="#ed4a00"/><stop offset="0.7699" stop-color="#ed7c00"/><stop offset="0.8381" stop-color="#ed9900"/><stop offset="0.8892" stop-color="#edb700"/><stop offset="0.9688" stop-color="#ebed02"/><stop offset="1.0000" stop-color="#d9ed14"/></linearGradient><linearGradient id="g123" gradientUnits="userSpaceOnUse" x1="902" x2="1254" y1="0" y2="0"><stop offset="0.0000" stop-color="#edd700"/><stop offset="0.0256" stop-color="#edd200"/><stop offset="0.2358" stop-color="#ed8600"/><stop offset="0.5000" stop-color="#ed0f00"/><stop offset="0.6506" stop-color="#ed4c00"/><stop offset="0.7727" stop-color="#ed7d00"/><stop offset="0.8608" stop-color="#eda000"/><stop offset="0.9716" stop-color="#eced02"/><stop offset="1.0000" stop-color="#dbed12"/></linearGradient><linearGradient id="g124" gradientUnits="userSpaceOnUse" x1="899" x2="1251" y1="0" y2="0"><stop offset="0.0000" stop-color="#edd500"/><stop offset="0.0256" stop-color="#edd100"/><stop offset="0.2472" stop-color="#ed8100"/><stop offset="0.5000" stop-color="#ed0f00"/><stop offset="0.6591" stop-color="#ed4f00"/><stop offset="0.7841" stop-color="#ed8100"/><stop offset="0.8665" stop-color="#eda200"/><stop offset="0.9744" stop-color="#eced01"/><stop offset="1.0000" stop-color="#deed0f"/></linearGradient><linearGradient id="g125" gradientUnits="userSpaceOnUse" x1="896" x2="1248" y1="0" y2="0"><stop offset="0.0000" stop-color="#edd400"/><stop offset="0.0256" stop-color="#edcf00"/><stop offset="0.2585" stop-color="#ed7c00"/><stop offset="0.5000" stop-color="#ed0f00"/><stop offset="0.6648" stop-color="#ed5100"/><stop offset="0.7869" stop-color="#ed8200"/><stop offset="0.8693" stop-color="#eda300"/><stop offset="0.9773" stop-color="#eced01"/><stop offset="1.0000" stop-color="#e0ed0d"/></linearGradient><linearGradient id="g126" gradientUnits="userSpaceOnUse" x1="893" x2="1245" y1="0" y2="0"><stop offset="0.0000" stop-color="#edd300"/><stop offset="0.0256" stop-color="#edce00"/><stop offset="0.2699" stop-color="#ed7600"/><stop offset="0.5000" stop-color="#ed0f00"/><stop offset="0.6733" stop-color="#ed5400"/><stop offset="0.8011" stop-color="#ed8700"/><stop offset="0.8722" stop-color="#eda400"/><stop offset="0.9801" stop-color="#eced02"/><stop offset="1.0000" stop-color="#e1ed0c"/></linearGradient><linearGradient id="g127" gradientUnits="userSpaceOnUse" x1="890" x2="1242" y1="0" y2="0"><stop offset="0.0000" stop-color="#edd200"/><stop offset="0.0284" stop-color="#edcc00"/><stop offset="0.2812" stop-color="#ed7100"/><stop offset="0.5000" stop-color="#ed0f00"/><stop offset="0.6818" stop-color="#ed5700"/><stop offset="0.8097" stop-color="#ed8a00"/><stop offset="0.8750" stop-color="#eda500"/><stop offset="0.9830" stop-color="#ebed02"/><stop offset="1.0000" stop-color="#e2ed0b"/></linearGradient><linearGradient id="g128" gradientUnits="userSpaceOnUse" x1="887" x2="1239" y1="0" y2="0"><stop offset="0.0000" stop-color="#edd100"/><stop offset="0.0369" stop-color="#edc800"/><stop offset="0.2898" stop-color="#ed6d00"/><stop offset="0.5000" stop-color="#ed0f00"/><stop offset="0.6903" stop-color="#ed5a00"/><stop offset="0.8210" stop-color="#ed8f00"/><stop offset="0.8807" stop-color="#eda800"/><stop offset="0.9830" stop-color="#eced01"/><stop offset="1.0000" stop-color="#e4ed0a"/></linearGradient><linearGradient id="g129" gradientUnits="userSpaceOnUse" x1="884" x2="1236" y1="0" y2="0"><stop offset="0.0000" stop-color="#edd100"/><stop offset="0.0739" stop-color="#edba00"/><stop offset="0.3040" stop-color="#ed6700"/><stop offset="0.5000" stop-color="#ed0f00"/><stop offset="0.6989" stop-color="#ed5d00"/><stop offset="0.8352" stop-color="#ed9400"/><stop offset="0.8835" stop-color="#eda800"/><stop offset="0.9858" stop-color="#ebed02"/><stop offset="1.0000" stop-color="#e5ed08"/></linearGradient><linearGradient id="g130" gradientUnits="userSpaceOnUse" x1="881" x2="1233" y1="0" y2="0"><stop offset="0.0000" stop-color="#edd000"/><stop offset="0.3097" stop-color="#ed6400"/><stop offset="0.5000" stop-color="#ed0f00"/><stop offset="0.7074" stop-color="#ed6000"/><stop offset="0.8466" stop-color="#ed9800"/><stop offset="0.8864" stop-color="#eda900"/><stop offset="0.9858" stop-color="#eced01"/><stop offset="1.0000" stop-color="#e6ed07"/></linearGradient><linearGradient id="g131" gradientUnits="userSpaceOnUse" x1="878" x2="1230" y1="0" y2="0"><stop offset="0.0000" stop-color="#edcf00"/><stop offset="0.3125" stop-color="#ed6300"/><stop offset="0.5000" stop-color="#ed0f00"/><stop offset="0.7159" stop-color="#ed6400"/><stop offset="0.8665" stop-color="#ed9f00"/><stop offset="0.8977" stop-color="#edb000"/><stop offset="0.9886" stop-color="#ebed02"/><stop offset="1.0000" stop-color="#e7ed06"/></linearGradient><linearGradient id="g132" gradientUnits="userSpaceOnUse" x1="875" x2="1227" y1="0" y2="0"><stop offset="0.0000" stop-color="#edcf00"/><stop offset="0.1676" stop-color="#ed9500"/><stop offset="0.3381" stop-color="#ed5700"/><stop offset="0.5000" stop-color="#ed0f00"/><stop offset="0.7244" stop-color="#ed6700"/><stop offset="0.8920" stop-color="#edab00"/><stop offset="0.9915" stop-color="#eced02"/><stop offset="1.0000" stop-color="#e8ed05"/></linearGradient><linearGradient id="g133" gradientUnits="userSpaceOnUse" x1="872" x2="1224" y1="0" y2="0"><stop offset="0.0000" stop-color="#edce00"/><stop offset="0.0824" stop-color="#edb200"/><stop offset="0.3466" stop-color="#ed5300"/><stop offset="0.5000" stop-color="#ed0f00"/><stop offset="0.7330" stop-color="#ed6a00"/><stop offset="0.8949" stop-color="#edac00"/><stop offset="0.9915" stop-color="#eded00"/><stop offset="1.0000" stop-color="#e9ed04"/></linearGradient><linearGradient id="g134" gradientUnits="userSpaceOnUse" x1="869" x2="1221" y1="0" y2="0"><stop offset="0.0000" stop-color="#edcd00"/><stop offset="0.0909" stop-color="#edaf00"/><stop offset="0.3580" stop-color="#ed4e00"/><stop offset="0.5000" stop-color="#ed0f00"/><stop offset="0.7415" stop-color="#ed6d00"/><stop offset="0.8977" stop-color="#edac00"/><stop offset="0.9943" stop-color="#eded00"/><stop offset="1.0000" stop-color="#ebed03"/></linearGradient><linearGradient id="g135" gradientUnits="userSpaceOnUse" x1="866" x2="1218" y1="0" y2="0"><stop offset="0.0000" stop-color="#edcd00"/><stop offset="0.0994" stop-color="#edab00"/><stop offset="0.3722" stop-color="#ed4800"/><stop offset="0.5000" stop-color="#ed0f00"/><stop offset="0.7500" stop-color="#ed7000"/><stop offset="0.9006" stop-color="#edad00"/><stop offset="0.9943" stop-color="#edec00"/><stop offset="1.0000" stop-color="#eced01"/></linearGradient><linearGradient id="g136" gradientUnits="userSpaceOnUse" x1="863" x2="1215" y1="0" y2="0"><stop offset="0.0000" stop-color="#edcc00"/><stop offset="0.1080" stop-color="#eda800"/><stop offset="0.3835" stop-color="#ed4200"/><stop offset="0.5000" stop-color="#ed0f00"/><stop offset="0.7614" stop-color="#ed7500"/><stop offset="0.9034" stop-color="#edae00"/><stop offset="0.9972" stop-color="#edec00"/><stop offset="1.0000" stop-color="#eded00"/></linearGradient><linearGradient id="g137" gradientUnits="userSpaceOnUse" x1="860" x2="1212" y1="0" y2="0"><stop offset="0.0000" stop-color="#edcc00"/><stop offset="0.1165" stop-color="#eda500"/><stop offset="0.3949" stop-color="#ed3d00"/><stop offset="0.5000" stop-color="#ed0f00"/><stop offset="0.7699" stop-color="#ed7800"/><stop offset="0.9091" stop-color="#edb100"/><stop offset="0.9972" stop-color="#edeb00"/><stop offset="1.0000" stop-color="#edec00"/></linearGradient><linearGradient id="g138" gradientUnits="userSpaceOnUse" x1="857" x2="1209" y1="0" y2="0"><stop offset="0.0000" stop-color="#edcb00"/><stop offset="0.1250" stop-color="#eda100"/><stop offset="0.3409" stop-color="#ed5200"/><stop offset="0.4375" stop-color="#ed2a00"/><stop offset="0.5000" stop-color="#ed0f00"/><stop offset="0.7784" stop-color="#ed7b00"/><stop offset="0.9119" stop-color="#edb200"/><stop offset="0.9972" stop-color="#edea00"/><stop offset="1.0000" stop-color="#edeb00"/></linearGradient><linearGradient id="g139" gradientUnits="userSpaceOnUse" x1="854" x2="1206" y1="0" y2="0"><stop offset="0.0000" stop-color="#edca00"/><stop offset="0.1335" stop-color="#ed9e00"/><stop offset="0.3466" stop-color="#ed4f00"/><stop offset="0.4375" stop-color="#ed2a00"/><stop offset="0.5000" stop-color="#ed0f00"/><stop offset="0.7869" stop-color="#ed7e00"/><stop offset="0.9148" stop-color="#edb200"/><stop offset="0.9972" stop-color="#ede900"/><stop offset="1.0000" stop-color="#edea00"/></linearGradient><linearGradient id="g140" gradientUnits="userSpaceOnUse" x1="851" x2="1203" y1="0" y2="0"><stop offset="0.0000" stop-color="#edca00"/><stop offset="0.1420" stop-color="#ed9b00"/><stop offset="0.3636" stop-color="#ed4700"/><stop offset="0.4574" stop-color="#ed2000"/><stop offset="0.5000" stop-color="#ed0f00"/><stop offset="0.7955" stop-color="#ed8100"/><stop offset="0.9176" stop-color="#edb300"/><stop offset="0.9972" stop-color="#ede800"/><stop offset="1.0000" stop-color="#ede900"/></linearGradient><linearGradient id="g141" gradientUnits="userSpaceOnUse" x1="848" x2="1200" y1="0" y2="0"><stop offset="0.0000" stop-color="#edc900"/><stop offset="0.1506" stop-color="#ed9700"/><stop offset="0.3807" stop-color="#ed4000"/><stop offset="0.4943" stop-color="#ed1000"/><stop offset="0.8011" stop-color="#ed8300"/><stop offset="0.9205" stop-color="#edb400"/><stop offset="0.9972" stop-color="#ede700"/><stop offset="1.0000" stop-color="#ede800"/></linearGradient><linearGradient id="g142" gradientUnits="userSpaceOnUse" x1="845" x2="1197" y1="0" y2="0"><stop offset="0.0000" stop-color="#edc800"/><stop offset="0.1619" stop-color="#ed9300"/><stop offset="0.4006" stop-color="#ed3800"/><stop offset="0.5000" stop-color="#ed0f00"/><stop offset="0.8125" stop-color="#ed8800"/><stop offset="0.9233" stop-color="#edb500"/><stop offset="0.9972" stop-color="#ede500"/><stop offset="1.0000" stop-color="#ede600"/></linearGradient><linearGradient id="g143" gradientUnits="userSpaceOnUse" x1="842" x2="1194" y1="0" y2="0"><stop offset="0.0000" stop-color="#edc800"/><stop offset="0.1705" stop-color="#ed8f00"/><stop offset="0.4233" stop-color="#ed2f00"/><stop offset="0.5000" stop-color="#ed0f00"/><stop offset="0.8210" stop-color="#ed8b00"/><stop offset="0.9261" stop-color="#edb600"/><stop offset="0.9972" stop-color="#ede400"/><stop offset="1.0000" stop-color="#ede500"/></linearGradient><linearGradient id="g144" gradientUnits="userSpaceOnUse" x1="839" x2="1191" y1="0" y2="0"><stop offset="0.0000" stop-color="#edc700"/><stop offset="0.1790" stop-color="#ed8c00"/><stop offset="0.4830" stop-color="#ed1500"/><stop offset="0.5000" stop-color="#ed0f00"/><stop offset="0.8324" stop-color="#ed8f00"/><stop offset="0.9290" stop-color="#edb600"/><stop offset="0.9972" stop-color="#ede300"/><stop offset="1.0000" stop-color="#ede400"/></linearGradient><linearGradient id="g145" gradientUnits="userSpaceOnUse" x1="836" x2="1188" y1="0" y2="0"><stop offset="0.0000" stop-color="#edc700"/><stop offset="0.1875" stop-color="#ed8900"/><stop offset="0.4943" stop-color="#ed1000"/><stop offset="0.8381" stop-color="#ed9100"/><stop offset="0.9347" stop-color="#edb900"/><stop offset="0.9972" stop-color="#ede200"/><stop offset="1.0000" stop-color="#ede300"/></linearGradient><linearGradient id="g146" gradientUnits="userSpaceOnUse" x1="833" x2="1185" y1="0" y2="0"><stop offset="0.0000" stop-color="#edc600"/><stop offset="0.1989" stop-color="#ed8400"/><stop offset="0.5000" stop-color="#ed0f00"/><stop offset="0.8494" stop-color="#ed9500"/><stop offset="0.9375" stop-color="#edba00"/><stop offset="0.9972" stop-color="#ede100"/><stop offset="1.0000" stop-color="#ede200"/></linearGradient><linearGradient id="g147" gradientUnits="userSpaceOnUse" x1="830" x2="1182" y1="0" y2="0"><stop offset="0.0000" stop-color="#edc500"/><stop offset="0.2074" stop-color="#ed8100"/><stop offset="0.5000" stop-color="#ed0f00"/><stop offset="0.8580" stop-color="#ed9900"/><stop offset="0.9403" stop-color="#edbb00"/><stop offset="0.9972" stop-color="#ede000"/><stop offset="1.0000" stop-color="#ede100"/></linearGradient><linearGradient id="g148" gradientUnits="userSpaceOnUse" x1="827" x2="1179" y1="0" y2="0"><stop offset="0.0000" stop-color="#edc500"/><stop offset="0.2159" stop-color="#ed7d00"/><stop offset="0.5000" stop-color="#ed0f00"/><stop offset="0.8665" stop-color="#ed9c00"/><stop offset="0.9432" stop-color="#edbc00"/><stop offset="0.9972" stop-color="#edde00"/><stop offset="1.0000" stop-color="#eddf00"/></linearGradient><linearGradient id="g149" gradientUnits="userSpaceOnUse" x1="824" x2="1176" y1="0" y2="0"><stop offset="0.0000" stop-color="#edc400"/><stop offset="0.2244" stop-color="#ed7a00"/><stop offset="0.5000" stop-color="#ed1000"/><stop offset="0.8778" stop-color="#eda000"/><stop offset="0.9460" stop-color="#edbc00"/><stop offset="0.9972" stop-color="#eddd00"/><stop offset="1.0000" stop-color="#edde00"/></linearGradient><linearGradient id="g150" gradientUnits="userSpaceOnUse" x1="821" x2="1173" y1="0" y2="0"><stop offset="0.0000" stop-color="#edc300"/><stop offset="0.2358" stop-color="#ed7600"/><stop offset="0.5000" stop-color="#ed1000"/><stop offset="0.8864" stop-color="#eda300"/><stop offset="0.9489" stop-color="#edbd00"/><stop offset="0.9972" stop-color="#eddc00"/><stop offset="1.0000" stop-color="#eddd00"/></linearGradient><linearGradient id="g151" gradientUnits="userSpaceOnUse" x1="818" x2="1170" y1="0" y2="0"><stop offset="0.0000" stop-color="#edc300"/><stop offset="0.2443" stop-color="#ed7200"/><stop offset="0.5000" stop-color="#ed1000"/><stop offset="0.9460" stop-color="#edba00"/><stop offset="0.9972" stop-color="#eddb00"/><stop offset="1.0000" stop-color="#eddc00"/></linearGradient><linearGradient id="g152" gradientUnits="userSpaceOnUse" x1="815" x2="1167" y1="0" y2="0"><stop offset="0.0000" stop-color="#edc200"/><stop offset="0.2528" stop-color="#ed6f00"/><stop offset="0.5000" stop-color="#ed1000"/><stop offset="0.9489" stop-color="#edbb00"/><stop offset="0.9972" stop-color="#edda00"/><stop offset="1.0000" stop-color="#eddb00"/></linearGradient><linearGradient id="g153" gradientUnits="userSpaceOnUse" x1="812" x2="1164" y1="0" y2="0"><stop offset="0.0000" stop-color="#edc100"/><stop offset="0.2642" stop-color="#ed6a00"/><stop offset="0.5000" stop-color="#ed1000"/><stop offset="0.6108" stop-color="#ed3900"/><stop offset="0.9517" stop-color="#edbc00"/><stop offset="0.9972" stop-color="#edd900"/><stop offset="1.0000" stop-color="#edda00"/></linearGradient><linearGradient id="g154" gradientUnits="userSpaceOnUse" x1="809" x2="1161" y1="0" y2="0"><stop offset="0.0000" stop-color="#edc100"/><stop offset="0.2727" stop-color="#ed6700"/><stop offset="0.5000" stop-color="#ed1000"/><stop offset="0.5881" stop-color="#ed3200"/><stop offset="0.9545" stop-color="#edbc00"/><stop offset="0.9972" stop-color="#edd700"/><stop offset="1.0000" stop-color="#edd800"/></linearGradient><linearGradient id="g155" gradientUnits="userSpaceOnUse" x1="806" x2="1158" y1="0" y2="0"><stop offset="0.0000" stop-color="#edc000"/><stop offset="0.2812" stop-color="#ed6400"/><stop offset="0.5000" stop-color="#ed1000"/><stop offset="0.5852" stop-color="#ed3200"/><stop offset="0.9148" stop-color="#edad00"/><stop offset="0.9659" stop-color="#edc300"/><stop offset="1.0000" stop-color="#edd700"/></linearGradient><linearGradient id="g156" gradientUnits="userSpaceOnUse" x1="803" x2="1155" y1="0" y2="0"><stop offset="0.0000" stop-color="#edc000"/><stop offset="0.2898" stop-color="#ed6000"/><stop offset="0.5000" stop-color="#ed1000"/><stop offset="0.5909" stop-color="#ed3500"/><stop offset="0.9148" stop-color="#edac00"/><stop offset="0.9688" stop-color="#edc400"/><stop offset="1.0000" stop-color="#edd600"/></linearGradient><linearGradient id="g157" gradientUnits="userSpaceOnUse" x1="800" x2="1152" y1="0" y2="0"><stop offset="0.0000" stop-color="#edbf00"/><stop offset="0.3011" stop-color="#ed5c00"/><stop offset="0.5000" stop-color="#ed1000"/><stop offset="0.5938" stop-color="#ed3700"/><stop offset="0.9176" stop-color="#edad00"/><stop offset="0.9716" stop-color="#edc500"/><stop offset="1.0000" stop-color="#edd500"/></linearGradient><linearGradient id="g158" gradientUnits="userSpaceOnUse" x1="797" x2="1149" y1="0" y2="0"><stop offset="0.0000" stop-color="#edbe00"/><stop offset="0.3097" stop-color="#ed5800"/><stop offset="0.5000" stop-color="#ed1000"/><stop offset="0.5994" stop-color="#ed3a00"/><stop offset="0.9261" stop-color="#edb000"/><stop offset="0.9773" stop-color="#edc700"/><stop offset="1.0000" stop-color="#edd400"/></linearGradient><linearGradient id="g159" gradientUnits="userSpaceOnUse" x1="794" x2="1146" y1="0" y2="0"><stop offset="0.0000" stop-color="#edbe00"/><stop offset="0.3182" stop-color="#ed5500"/><stop offset="0.5000" stop-color="#ed1000"/><stop offset="0.6051" stop-color="#ed3d00"/><stop offset="0.9375" stop-color="#edb400"/><stop offset="0.9801" stop-color="#edc800"/><stop offset="1.0000" stop-color="#edd300"/></linearGradient><linearGradient id="g160" gradientUnits="userSpaceOnUse" x1="791" x2="1143" y1="0" y2="0"><stop offset="0.0000" stop-color="#edbd00"/><stop offset="0.3295" stop-color="#ed5100"/><stop offset="0.5000" stop-color="#ed1000"/><stop offset="0.6108" stop-color="#ed4000"/><stop offset="0.9489" stop-color="#edb900"/><stop offset="0.9858" stop-color="#edcb00"/><stop offset="1.0000" stop-color="#edd100"/></linearGradient><linearGradient id="g161" gradientUnits="userSpaceOnUse" x1="788" x2="1140" y1="0" y2="0"><stop offset="0.0000" stop-color="#edbf00"/><stop offset="0.3409" stop-color="#ed4c00"/><stop offset="0.5000" stop-color="#ed1000"/><stop offset="0.6193" stop-color="#ed4300"/><stop offset="0.9602" stop-color="#edbd00"/><stop offset="1.0000" stop-color="#edd000"/></linearGradient><linearGradient id="g162" gradientUnits="userSpaceOnUse" x1="785" x2="1137" y1="0" y2="0"><stop offset="0.0000" stop-color="#edc000"/><stop offset="0.0142" stop-color="#edb900"/><stop offset="0.3523" stop-color="#ed4800"/><stop offset="0.5000" stop-color="#ed1000"/><stop offset="0.6250" stop-color="#ed4600"/><stop offset="0.9801" stop-color="#edc500"/><stop offset="1.0000" stop-color="#edcf00"/></linearGradient><linearGradient id="g163" gradientUnits="userSpaceOnUse" x1="782" x2="1134" y1="0" y2="0"><stop offset="0.0000" stop-color="#edc200"/><stop offset="0.0142" stop-color="#edb900"/><stop offset="0.3608" stop-color="#ed4400"/><stop offset="0.5000" stop-color="#ed1000"/><stop offset="0.6307" stop-color="#ed4900"/><stop offset="0.9830" stop-color="#edc600"/><stop offset="1.0000" stop-color="#edce00"/></linearGradient><linearGradient id="g164" gradientUnits="userSpaceOnUse" x1="779" x2="1131" y1="0" y2="0"><stop offset="0.0000" stop-color="#edc400"/><stop offset="0.0170" stop-color="#edb700"/><stop offset="0.3693" stop-color="#ed4100"/><stop offset="0.5000" stop-color="#ed1000"/><stop offset="0.6392" stop-color="#ed4d00"/><stop offset="0.9943" stop-color="#edcb00"/><stop offset="1.0000" stop-color="#edcf00"/></linearGradient><linearGradient id="g165" gradientUnits="userSpaceOnUse" x1="776" x2="1128" y1="0" y2="0"><stop offset="0.0000" stop-color="#edc500"/><stop offset="0.0170" stop-color="#edb700"/><stop offset="0.3807" stop-color="#ed3c00"/><stop offset="0.5000" stop-color="#ed1000"/><stop offset="0.6449" stop-color="#ed5000"/><stop offset="0.9943" stop-color="#edcb00"/><stop offset="1.0000" stop-color="#edd000"/></linearGradient><linearGradient id="g166" gradientUnits="userSpaceOnUse" x1="773" x2="1125" y1="0" y2="0"><stop offset="0.0000" stop-color="#edc700"/><stop offset="0.0170" stop-color="#edb800"/><stop offset="0.3949" stop-color="#ed3700"/><stop offset="0.5000" stop-color="#ed1000"/><stop offset="0.6534" stop-color="#ed5400"/><stop offset="0.9943" stop-color="#edcc00"/><stop offset="1.0000" stop-color="#edd000"/></linearGradient><linearGradient id="g167" gradientUnits="userSpaceOnUse" x1="770" x2="1122" y1="0" y2="0"><stop offset="0.0000" stop-color="#edc900"/><stop offset="0.0142" stop-color="#edba00"/><stop offset="0.2017" stop-color="#ed7900"/><stop offset="0.4062" stop-color="#ed3200"/><stop offset="0.5000" stop-color="#ed1000"/><stop offset="0.6591" stop-color="#ed5700"/><stop offset="0.9943" stop-color="#edcd00"/><stop offset="1.0000" stop-color="#edd100"/></linearGradient><linearGradient id="g168" gradientUnits="userSpaceOnUse" x1="767" x2="1119" y1="0" y2="0"><stop offset="0.0000" stop-color="#edca00"/><stop offset="0.0142" stop-color="#edbb00"/><stop offset="0.1364" stop-color="#ed8d00"/><stop offset="0.4091" stop-color="#ed3100"/><stop offset="0.5000" stop-color="#ed1000"/><stop offset="0.6676" stop-color="#ed5a00"/><stop offset="0.9943" stop-color="#edce00"/><stop offset="1.0000" stop-color="#edd200"/></linearGradient><linearGradient id="g169" gradientUnits="userSpaceOnUse" x1="764" x2="1116" y1="0" y2="0"><stop offset="0.0000" stop-color="#edcc00"/><stop offset="0.0142" stop-color="#edbc00"/><stop offset="0.1222" stop-color="#ed9200"/><stop offset="0.4205" stop-color="#ed2d00"/><stop offset="0.5000" stop-color="#ed1000"/><stop offset="0.6733" stop-color="#ed5d00"/><stop offset="0.9943" stop-color="#edcf00"/><stop offset="1.0000" stop-color="#edd300"/></linearGradient><linearGradient id="g170" gradientUnits="userSpaceOnUse" x1="761" x2="1113" y1="0" y2="0"><stop offset="0.0000" stop-color="#edcc00"/><stop offset="0.0142" stop-color="#edbd00"/><stop offset="0.1165" stop-color="#ed9400"/><stop offset="0.4318" stop-color="#ed2800"/><stop offset="0.5000" stop-color="#ed1000"/><stop offset="0.6818" stop-color="#ed6100"/><stop offset="0.9943" stop-color="#edd000"/><stop offset="1.0000" stop-color="#edd400"/></linearGradient><linearGradient id="g171" gradientUnits="userSpaceOnUse" x1="758" x2="1110" y1="0" y2="0"><stop offset="0.0000" stop-color="#edcd00"/><stop offset="0.0142" stop-color="#edbe00"/><stop offset="0.1222" stop-color="#ed9200"/><stop offset="0.4432" stop-color="#ed2400"/><stop offset="0.5000" stop-color="#ed1000"/><stop offset="0.6903" stop-color="#ed6500"/><stop offset="0.9943" stop-color="#edd100"/><stop offset="1.0000" stop-color="#edd500"/></linearGradient><linearGradient id="g172" gradientUnits="userSpaceOnUse" x1="755" x2="1107" y1="0" y2="0"><stop offset="0.0000" stop-color="#edce00"/><stop offset="0.0142" stop-color="#edbf00"/><stop offset="0.1278" stop-color="#ed9000"/><stop offset="0.4517" stop-color="#ed2000"/><stop offset="0.5000" stop-color="#ed1000"/><stop offset="0.6960" stop-color="#ed6800"/><stop offset="0.9943" stop-color="#edd200"/><stop offset="1.0000" stop-color="#edd600"/></linearGradient><linearGradient id="g173" gradientUnits="userSpaceOnUse" x1="752" x2="1104" y1="0" y2="0"><stop offset="0.0000" stop-color="#edcf00"/><stop offset="0.0142" stop-color="#edc000"/><stop offset="0.1335" stop-color="#ed8e00"/><stop offset="0.4631" stop-color="#ed1c00"/><stop offset="0.5000" stop-color="#ed1000"/><stop offset="0.7045" stop-color="#ed6c00"/><stop offset="0.9943" stop-color="#edd200"/><stop offset="1.0000" stop-color="#edd700"/></linearGradient><linearGradient id="g174" gradientUnits="userSpaceOnUse" x1="749" x2="1101" y1="0" y2="0"><stop offset="0.0000" stop-color="#edd000"/><stop offset="0.0142" stop-color="#edc100"/><stop offset="0.1420" stop-color="#ed8b00"/><stop offset="0.4744" stop-color="#ed1700"/><stop offset="0.5000" stop-color="#ed1000"/><stop offset="0.7131" stop-color="#ed6f00"/><stop offset="0.9943" stop-color="#edd300"/><stop offset="1.0000" stop-color="#edd800"/></linearGradient><linearGradient id="g175" gradientUnits="userSpaceOnUse" x1="746" x2="1098" y1="0" y2="0"><stop offset="0.0000" stop-color="#edd100"/><stop offset="0.0142" stop-color="#edc200"/><stop offset="0.1506" stop-color="#ed8800"/><stop offset="0.4858" stop-color="#ed1300"/><stop offset="0.5000" stop-color="#ed1000"/><stop offset="0.7188" stop-color="#ed7200"/><stop offset="0.9943" stop-color="#edd400"/><stop offset="1.0000" stop-color="#edd800"/></linearGradient><linearGradient id="g176" gradientUnits="userSpaceOnUse" x1="743" x2="1095" y1="0" y2="0"><stop offset="0.0000" stop-color="#edd200"/><stop offset="0.0142" stop-color="#edc300"/><stop offset="0.1562" stop-color="#ed8600"/><stop offset="0.5000" stop-color="#ed1000"/><stop offset="0.7273" stop-color="#ed7600"/><stop offset="0.9943" stop-color="#edd500"/><stop offset="1.0000" stop-color="#edd900"/></linearGradient><linearGradient id="g177" gradientUnits="userSpaceOnUse" x1="740" x2="1092" y1="0" y2="0"><stop offset="0.0000" stop-color="#edd300"/><stop offset="0.0142" stop-color="#edc400"/><stop offset="0.1676" stop-color="#ed8200"/><stop offset="0.5000" stop-color="#ed1000"/><stop offset="0.7330" stop-color="#ed7900"/><stop offset="0.9943" stop-color="#edd600"/><stop offset="1.0000" stop-color="#edda00"/></linearGradient><linearGradient id="g178" gradientUnits="userSpaceOnUse" x1="737" x2="1089" y1="0" y2="0"><stop offset="0.0000" stop-color="#edd400"/><stop offset="0.0142" stop-color="#edc400"/><stop offset="0.1761" stop-color="#ed7f00"/><stop offset="0.5000" stop-color="#ed1000"/><stop offset="0.7415" stop-color="#ed7d00"/><stop offset="0.9943" stop-color="#edd700"/><stop offset="1.0000" stop-color="#eddb00"/></linearGradient><linearGradient id="g179" gradientUnits="userSpaceOnUse" x1="734" x2="1086" y1="0" y2="0"><stop offset="0.0000" stop-color="#edd500"/><stop offset="0.0142" stop-color="#edc500"/><stop offset="0.1847" stop-color="#ed7c00"/><stop offset="0.5000" stop-color="#ed1000"/><stop offset="0.7500" stop-color="#ed8100"/><stop offset="0.9943" stop-color="#edd800"/><stop offset="1.0000" stop-color="#eddc00"/></linearGradient><linearGradient id="g180" gradientUnits="userSpaceOnUse" x1="731" x2="1083" y1="0" y2="0"><stop offset="0.0000" stop-color="#edd600"/><stop offset="0.0142" stop-color="#edc600"/><stop offset="0.1932" stop-color="#ed7900"/><stop offset="0.5000" stop-color="#ed1000"/><stop offset="0.7557" stop-color="#ed8300"/><stop offset="0.9943" stop-color="#edd900"/><stop offset="1.0000" stop-color="#eddd00"/></linearGradient><linearGradient id="g181" gradientUnits="userSpaceOnUse" x1="728" x2="1080" y1="0" y2="0"><stop offset="0.0000" stop-color="#edd600"/><stop offset="0.0142" stop-color="#edc700"/><stop offset="0.2017" stop-color="#ed7600"/><stop offset="0.5000" stop-color="#ed1000"/><stop offset="0.7642" stop-color="#ed8700"/><stop offset="0.9943" stop-color="#edd900"/><stop offset="1.0000" stop-color="#edde00"/></linearGradient><linearGradient id="g182" gradientUnits="userSpaceOnUse" x1="725" x2="1077" y1="0" y2="0"><stop offset="0.0000" stop-color="#edd700"/><stop offset="0.0142" stop-color="#edc800"/><stop offset="0.2102" stop-color="#ed7300"/><stop offset="0.5000" stop-color="#ed1000"/><stop offset="0.7727" stop-color="#ed8b00"/><stop offset="0.9943" stop-color="#edda00"/><stop offset="1.0000" stop-color="#eddf00"/></linearGradient><linearGradient id="g183" gradientUnits="userSpaceOnUse" x1="722" x2="1074" y1="0" y2="0"><stop offset="0.0000" stop-color="#edd800"/><stop offset="0.0142" stop-color="#edc900"/><stop offset="0.2216" stop-color="#ed6f00"/><stop offset="0.5000" stop-color="#ed0f00"/><stop offset="0.7784" stop-color="#ed8e00"/><stop offset="0.9943" stop-color="#eddb00"/><stop offset="1.0000" stop-color="#eddf00"/></linearGradient><linearGradient id="g184" gradientUnits="userSpaceOnUse" x1="719" x2="1071" y1="0" y2="0"><stop offset="0.0000" stop-color="#edd900"/><stop offset="0.0142" stop-color="#edca00"/><stop offset="0.2301" stop-color="#ed6c00"/><stop offset="0.5000" stop-color="#ed0f00"/><stop offset="0.7869" stop-color="#ed9200"/><stop offset="0.9943" stop-color="#eddc00"/><stop offset="1.0000" stop-color="#ede000"/></linearGradient><linearGradient id="g185" gradientUnits="userSpaceOnUse" x1="716" x2="1068" y1="0" y2="0"><stop offset="0.0000" stop-color="#edda00"/><stop offset="0.0142" stop-color="#edcb00"/><stop offset="0.2386" stop-color="#ed6900"/><stop offset="0.5000" stop-color="#ed0f00"/><stop offset="0.7926" stop-color="#ed9500"/><stop offset="0.9943" stop-color="#eddd00"/><stop offset="1.0000" stop-color="#ede100"/></linearGradient><linearGradient id="g186" gradientUnits="userSpaceOnUse" x1="713" x2="1065" y1="0" y2="0"><stop offset="0.0000" stop-color="#eddb00"/><stop offset="0.0142" stop-color="#edcc00"/><stop offset="0.2472" stop-color="#ed6600"/><stop offset="0.5000" stop-color="#ed0f00"/><stop offset="0.5511" stop-color="#ed2600"/><stop offset="0.8011" stop-color="#ed9900"/><stop offset="0.9943" stop-color="#edde00"/><stop offset="1.0000" stop-color="#ede200"/></linearGradient><linearGradient id="g187" gradientUnits="userSpaceOnUse" x1="710" x2="1062" y1="0" y2="0"><stop offset="0.0000" stop-color="#eddc00"/><stop offset="0.0142" stop-color="#edcd00"/><stop offset="0.2585" stop-color="#ed6200"/><stop offset="0.5000" stop-color="#ed0f00"/><stop offset="0.5568" stop-color="#ed2800"/><stop offset="0.8068" stop-color="#ed9b00"/><stop offset="0.9943" stop-color="#eddf00"/><stop offset="1.0000" stop-color="#ede300"/></linearGradient><linearGradient id="g188" gradientUnits="userSpaceOnUse" x1="707" x2="1059" y1="0" y2="0"><stop offset="0.0000" stop-color="#eddd00"/><stop offset="0.0142" stop-color="#edce00"/><stop offset="0.2670" stop-color="#ed5f00"/><stop offset="0.5000" stop-color="#ed0f00"/><stop offset="0.5653" stop-color="#ed2b00"/><stop offset="0.8040" stop-color="#ed9b00"/><stop offset="0.9943" stop-color="#ede000"/><stop offset="1.0000" stop-color="#ede400"/></linearGradient><linearGradient id="g189" gradientUnits="userSpaceOnUse" x1="704" x2="1056" y1="0" y2="0"><stop offset="0.0000" stop-color="#edde00"/><stop offset="0.0142" stop-color="#edce00"/><stop offset="0.2756" stop-color="#ed5c00"/><stop offset="0.5000" stop-color="#ed0f00"/><stop offset="0.5710" stop-color="#ed2d00"/><stop offset="0.6818" stop-color="#ed6400"/><stop offset="0.8267" stop-color="#eda400"/><stop offset="0.9943" stop-color="#ede000"/><stop offset="1.0000" stop-color="#ede500"/></linearGradient><linearGradient id="g190" gradientUnits="userSpaceOnUse" x1="701" x2="1053" y1="0" y2="0"><stop offset="0.0000" stop-color="#eddf00"/><stop offset="0.0142" stop-color="#edcf00"/><stop offset="0.2841" stop-color="#ed5900"/><stop offset="0.5000" stop-color="#ed0f00"/><stop offset="0.5795" stop-color="#ed3000"/><stop offset="0.6761" stop-color="#ed6100"/><stop offset="0.8352" stop-color="#eda800"/><stop offset="0.9943" stop-color="#ede100"/><stop offset="1.0000" stop-color="#ede600"/></linearGradient><linearGradient id="g191" gradientUnits="userSpaceOnUse" x1="698" x2="1050" y1="0" y2="0"><stop offset="0.0000" stop-color="#ede000"/><stop offset="0.0142" stop-color="#edd000"/><stop offset="0.2955" stop-color="#ed5500"/><stop offset="0.5000" stop-color="#ed0f00"/><stop offset="0.5881" stop-color="#ed3300"/><stop offset="0.6818" stop-color="#ed6400"/><stop offset="0.8409" stop-color="#edab00"/><stop offset="0.9943" stop-color="#ede200"/><stop offset="1.0000" stop-color="#ede600"/></linearGradient><linearGradient id="g192" gradientUnits="userSpaceOnUse" x1="695" x2="1047" y1="0" y2="0"><stop offset="0.0000" stop-color="#ede000"/><stop offset="0.0142" stop-color="#edd100"/><stop offset="0.3040" stop-color="#ed5200"/><stop offset="0.5000" stop-color="#ed0f00"/><stop offset="0.5966" stop-color="#ed3600"/><stop offset="0.6932" stop-color="#ed6900"/><stop offset="0.8494" stop-color="#edaf00"/><stop offset="0.9943" stop-color="#ede300"/><stop offset="1.0000" stop-color="#ede700"/></linearGradient><linearGradient id="g193" gradientUnits="userSpaceOnUse" x1="692" x2="1044" y1="0" y2="0"><stop offset="0.0000" stop-color="#ede100"/><stop offset="0.0142" stop-color="#edd200"/><stop offset="0.3125" stop-color="#ed4f00"/><stop offset="0.5000" stop-color="#ed0f00"/><stop offset="0.6051" stop-color="#ed3a00"/><stop offset="0.7045" stop-color="#ed6e00"/><stop offset="0.8580" stop-color="#edb200"/><stop offset="0.9943" stop-color="#ede400"/><stop offset="1.0000" stop-color="#ede800"/></linearGradient><linearGradient id="g194" gradientUnits="userSpaceOnUse" x1="689" x2="1041" y1="0" y2="0"><stop offset="0.0000" stop-color="#ede200"/><stop offset="0.0142" stop-color="#edd300"/><stop offset="0.3239" stop-color="#ed4b00"/><stop offset="0.5000" stop-color="#ed0f00"/><stop offset="0.6136" stop-color="#ed3d00"/><stop offset="0.7188" stop-color="#ed7500"/><stop offset="0.8665" stop-color="#edb600"/><stop offset="0.9943" stop-color="#ede500"/><stop offset="1.0000" stop-color="#ede900"/></linearGradient><linearGradient id="g195" gradientUnits="userSpaceOnUse" x1="686" x2="1038" y1="0" y2="0"><stop offset="0.0000" stop-color="#ede300"/><stop offset="0.0142" stop-color="#edd400"/><stop offset="0.3324" stop-color="#ed4800"/><stop offset="0.5000" stop-color="#ed0f00"/><stop offset="0.6222" stop-color="#ed4000"/><stop offset="0.7330" stop-color="#ed7b00"/><stop offset="0.8722" stop-color="#edb900"/><stop offset="0.9943" stop-color="#ede600"/><stop offset="1.0000" stop-color="#edea00"/></linearGradient><linearGradient id="g196" gradientUnits="userSpaceOnUse" x1="683" x2="1035" y1="0" y2="0"><stop offset="0.0000" stop-color="#ede400"/><stop offset="0.0114" stop-color="#edd400"/><stop offset="0.3438" stop-color="#ed4400"/><stop offset="0.5000" stop-color="#ed0f00"/><stop offset="0.6307" stop-color="#ed4300"/><stop offset="0.7472" stop-color="#ed8200"/><stop offset="0.8807" stop-color="#edbd00"/><stop offset="0.9943" stop-color="#ede700"/><stop offset="1.0000" stop-color="#edeb00"/></linearGradient><linearGradient id="g197" gradientUnits="userSpaceOnUse" x1="680" x2="1032" y1="0" y2="0"><stop offset="0.0000" stop-color="#ede500"/><stop offset="0.0114" stop-color="#edd300"/><stop offset="0.0852" stop-color="#edb600"/><stop offset="0.3523" stop-color="#ed4100"/><stop offset="0.5000" stop-color="#ed0f00"/><stop offset="0.6392" stop-color="#ed4600"/><stop offset="0.7614" stop-color="#ed8900"/><stop offset="0.8892" stop-color="#edc100"/><stop offset="0.9943" stop-color="#ede700"/><stop offset="1.0000" stop-color="#edec00"/></linearGradient><linearGradient id="g198" gradientUnits="userSpaceOnUse" x1="677" x2="1029" y1="0" y2="0"><stop offset="0.0000" stop-color="#ede500"/><stop offset="0.0114" stop-color="#edd100"/><stop offset="0.0597" stop-color="#edc200"/><stop offset="0.3608" stop-color="#ed3e00"/><stop offset="0.5000" stop-color="#ed0f00"/><stop offset="0.6477" stop-color="#ed4a00"/><stop offset="0.7756" stop-color="#ed8f00"/><stop offset="0.8977" stop-color="#edc500"/><stop offset="0.9943" stop-color="#ede800"/><stop offset="1.0000" stop-color="#eded00"/></linearGradient><linearGradient id="g199" gradientUnits="userSpaceOnUse" x1="674" x2="1026" y1="0" y2="0"><stop offset="0.0000" stop-color="#ede300"/><stop offset="0.0114" stop-color="#edcf00"/><stop offset="0.0568" stop-color="#edc300"/><stop offset="0.3722" stop-color="#ed3a00"/><stop offset="0.5000" stop-color="#ed0f00"/><stop offset="0.6562" stop-color="#ed4d00"/><stop offset="0.7898" stop-color="#ed9600"/><stop offset="0.9062" stop-color="#edc800"/><stop offset="0.9943" stop-color="#ede900"/><stop offset="1.0000" stop-color="#eded00"/></linearGradient><linearGradient id="g200" gradientUnits="userSpaceOnUse" x1="671" x2="1023" y1="0" y2="0"><stop offset="0.0000" stop-color="#ede100"/><stop offset="0.0114" stop-color="#edcd00"/><stop offset="0.0597" stop-color="#edc100"/><stop offset="0.3835" stop-color="#ed3600"/><stop offset="0.5000" stop-color="#ed0f00"/><stop offset="0.6619" stop-color="#ed4e00"/><stop offset="0.8040" stop-color="#ed9c00"/><stop offset="0.9148" stop-color="#edcc00"/><stop offset="0.9943" stop-color="#edea00"/><stop offset="1.0000" stop-color="#eced01"/></linearGradient><linearGradient id="g201" gradientUnits="userSpaceOnUse" x1="668" x2="1020" y1="0" y2="0"><stop offset="0.0000" stop-color="#ede000"/><stop offset="0.0114" stop-color="#edcc00"/><stop offset="0.0625" stop-color="#edc000"/><stop offset="0.3182" stop-color="#ed5100"/><stop offset="0.4290" stop-color="#ed2600"/><stop offset="0.5000" stop-color="#ed0f00"/><stop offset="0.6705" stop-color="#ed5200"/><stop offset="0.8210" stop-color="#eda400"/><stop offset="0.9233" stop-color="#edd000"/><stop offset="0.9943" stop-color="#edeb00"/><stop offset="1.0000" stop-color="#ebed02"/></linearGradient><linearGradient id="g202" gradientUnits="userSpaceOnUse" x1="665" x2="1017" y1="0" y2="0"><stop offset="0.0000" stop-color="#edde00"/><stop offset="0.0114" stop-color="#edca00"/><stop offset="0.0653" stop-color="#edbe00"/><stop offset="0.2812" stop-color="#ed6300"/><stop offset="0.4062" stop-color="#ed2e00"/><stop offset="0.5000" stop-color="#ed0f00"/><stop offset="0.6790" stop-color="#ed5500"/><stop offset="0.8352" stop-color="#edab00"/><stop offset="0.9318" stop-color="#edd400"/><stop offset="0.9972" stop-color="#eced01"/><stop offset="1.0000" stop-color="#eaed03"/></linearGradient><linearGradient id="g203" gradientUnits="userSpaceOnUse" x1="662" x2="1014" y1="0" y2="0"><stop offset="0.0000" stop-color="#eddc00"/><stop offset="0.0114" stop-color="#edc800"/><stop offset="0.0710" stop-color="#edbc00"/><stop offset="0.2898" stop-color="#ed6000"/><stop offset="0.4148" stop-color="#ed2b00"/><stop offset="0.5000" stop-color="#ed0f00"/><stop offset="0.6875" stop-color="#ed5800"/><stop offset="0.8494" stop-color="#edb100"/><stop offset="0.9432" stop-color="#edd900"/><stop offset="0.9972" stop-color="#ebed02"/><stop offset="1.0000" stop-color="#e9ed04"/></linearGradient><linearGradient id="g204" gradientUnits="userSpaceOnUse" x1="659" x2="1011" y1="0" y2="0"><stop offset="0.0000" stop-color="#edda00"/><stop offset="0.0114" stop-color="#edc600"/><stop offset="0.0739" stop-color="#edba00"/><stop offset="0.3011" stop-color="#ed5c00"/><stop offset="0.4261" stop-color="#ed2700"/><stop offset="0.5000" stop-color="#ed0f00"/><stop offset="0.6960" stop-color="#ed5b00"/><stop offset="0.8665" stop-color="#edb900"/><stop offset="0.9545" stop-color="#edde00"/><stop offset="0.9972" stop-color="#ebed03"/><stop offset="1.0000" stop-color="#e8ed05"/></linearGradient><linearGradient id="g205" gradientUnits="userSpaceOnUse" x1="656" x2="1008" y1="0" y2="0"><stop offset="0.0000" stop-color="#edd900"/><stop offset="0.0114" stop-color="#edc500"/><stop offset="0.0795" stop-color="#edb800"/><stop offset="0.3210" stop-color="#ed5400"/><stop offset="0.4375" stop-color="#ed2300"/><stop offset="0.5000" stop-color="#ed0f00"/><stop offset="0.7045" stop-color="#ed5e00"/><stop offset="0.8807" stop-color="#edc000"/><stop offset="0.9659" stop-color="#ede200"/><stop offset="0.9943" stop-color="#eced01"/><stop offset="1.0000" stop-color="#e8ed06"/></linearGradient><linearGradient id="g206" gradientUnits="userSpaceOnUse" x1="653" x2="1005" y1="0" y2="0"><stop offset="0.0000" stop-color="#edd700"/><stop offset="0.0114" stop-color="#edc300"/><stop offset="0.0852" stop-color="#edb500"/><stop offset="0.3409" stop-color="#ed4c00"/><stop offset="0.4489" stop-color="#ed1f00"/><stop offset="0.5000" stop-color="#ed0f00"/><stop offset="0.7131" stop-color="#ed6200"/><stop offset="0.8949" stop-color="#edc600"/><stop offset="0.9858" stop-color="#edea00"/><stop offset="1.0000" stop-color="#e7ed06"/></linearGradient><linearGradient id="g207" gradientUnits="userSpaceOnUse" x1="650" x2="1002" y1="0" y2="0"><stop offset="0.0000" stop-color="#edd500"/><stop offset="0.0114" stop-color="#edc100"/><stop offset="0.0909" stop-color="#edb300"/><stop offset="0.3636" stop-color="#ed4200"/><stop offset="0.4688" stop-color="#ed1800"/><stop offset="0.5000" stop-color="#ed0f00"/><stop offset="0.7216" stop-color="#ed6500"/><stop offset="0.9119" stop-color="#edce00"/><stop offset="0.9915" stop-color="#eced01"/><stop offset="1.0000" stop-color="#e6ed07"/></linearGradient><linearGradient id="g208" gradientUnits="userSpaceOnUse" x1="647" x2="999" y1="0" y2="0"><stop offset="0.0000" stop-color="#edd300"/><stop offset="0.0114" stop-color="#edbf00"/><stop offset="0.0966" stop-color="#edb000"/><stop offset="0.3835" stop-color="#ed3a00"/><stop offset="0.4915" stop-color="#ed1000"/><stop offset="0.5057" stop-color="#ed1100"/><stop offset="0.7301" stop-color="#ed6800"/><stop offset="0.9261" stop-color="#edd500"/><stop offset="0.9915" stop-color="#ebed02"/><stop offset="1.0000" stop-color="#e5ed08"/></linearGradient><linearGradient id="g209" gradientUnits="userSpaceOnUse" x1="644" x2="996" y1="0" y2="0"><stop offset="0.0000" stop-color="#edd200"/><stop offset="0.0114" stop-color="#edbe00"/><stop offset="0.1023" stop-color="#edad00"/><stop offset="0.3864" stop-color="#ed3a00"/><stop offset="0.4886" stop-color="#ed1100"/><stop offset="0.5028" stop-color="#ed1000"/><stop offset="0.7386" stop-color="#ed6b00"/><stop offset="0.9432" stop-color="#eddd00"/><stop offset="0.9915" stop-color="#eaed03"/><stop offset="1.0000" stop-color="#e4ed09"/></linearGradient><linearGradient id="g210" gradientUnits="userSpaceOnUse" x1="641" x2="993" y1="0" y2="0"><stop offset="0.0000" stop-color="#edd000"/><stop offset="0.0114" stop-color="#edbc00"/><stop offset="0.1080" stop-color="#edab00"/><stop offset="0.3920" stop-color="#ed3800"/><stop offset="0.4972" stop-color="#ed0e00"/><stop offset="0.7472" stop-color="#ed6f00"/><stop offset="0.9574" stop-color="#ede300"/><stop offset="0.9886" stop-color="#eced02"/><stop offset="1.0000" stop-color="#e3ed0a"/></linearGradient><linearGradient id="g211" gradientUnits="userSpaceOnUse" x1="638" x2="990" y1="0" y2="0"><stop offset="0.0000" stop-color="#edce00"/><stop offset="0.0114" stop-color="#edba00"/><stop offset="0.1136" stop-color="#eda800"/><stop offset="0.4006" stop-color="#ed3600"/><stop offset="0.4972" stop-color="#ed0e00"/><stop offset="0.7557" stop-color="#ed7200"/><stop offset="0.9688" stop-color="#ede900"/><stop offset="0.9915" stop-color="#e9ed05"/><stop offset="1.0000" stop-color="#e5ed08"/></linearGradient><linearGradient id="g212" gradientUnits="userSpaceOnUse" x1="635" x2="987" y1="0" y2="0"><stop offset="0.0000" stop-color="#edcc00"/><stop offset="0.0114" stop-color="#edb900"/><stop offset="0.1193" stop-color="#eda600"/><stop offset="0.4062" stop-color="#ed3400"/><stop offset="0.4972" stop-color="#ed0e00"/><stop offset="0.7642" stop-color="#ed7500"/><stop offset="0.9801" stop-color="#eded00"/><stop offset="1.0000" stop-color="#e7ed06"/></linearGradient><linearGradient id="g213" gradientUnits="userSpaceOnUse" x1="632" x2="984" y1="0" y2="0"><stop offset="0.0000" stop-color="#edcb00"/><stop offset="0.0114" stop-color="#edba00"/><stop offset="0.0511" stop-color="#edb100"/><stop offset="0.1250" stop-color="#eda300"/><stop offset="0.3892" stop-color="#ed3a00"/><stop offset="0.4972" stop-color="#ed0e00"/><stop offset="0.7727" stop-color="#ed7800"/><stop offset="0.9801" stop-color="#eced01"/><stop offset="0.9972" stop-color="#e8ed05"/><stop offset="1.0000" stop-color="#e8ed05"/></linearGradient><linearGradient id="g214" gradientUnits="userSpaceOnUse" x1="629" x2="981" y1="0" y2="0"><stop offset="0.0000" stop-color="#edcb00"/><stop offset="0.0114" stop-color="#edbc00"/><stop offset="0.0511" stop-color="#edaf00"/><stop offset="0.1307" stop-color="#eda100"/><stop offset="0.3807" stop-color="#ed3e00"/><stop offset="0.4972" stop-color="#ed0e00"/><stop offset="0.7812" stop-color="#ed7b00"/><stop offset="0.9830" stop-color="#eced01"/><stop offset="0.9972" stop-color="#eaed03"/><stop offset="1.0000" stop-color="#eaed03"/></linearGradient><linearGradient id="g215" gradientUnits="userSpaceOnUse" x1="626" x2="978" y1="0" y2="0"><stop offset="0.0000" stop-color="#edcb00"/><stop offset="0.0142" stop-color="#edbc00"/><stop offset="0.0597" stop-color="#edac00"/><stop offset="0.1364" stop-color="#ed9e00"/><stop offset="0.3778" stop-color="#ed3f00"/><stop offset="0.5000" stop-color="#ed0f00"/><stop offset="0.7898" stop-color="#ed7f00"/><stop offset="0.9886" stop-color="#ebed03"/><stop offset="1.0000" stop-color="#eced01"/></linearGradient><linearGradient id="g216" gradientUnits="userSpaceOnUse" x1="623" x2="975" y1="0" y2="0"><stop offset="0.0000" stop-color="#edca00"/><stop offset="0.0142" stop-color="#edbd00"/><stop offset="0.0682" stop-color="#eda900"/><stop offset="0.1420" stop-color="#ed9b00"/><stop offset="0.3778" stop-color="#ed3f00"/><stop offset="0.5000" stop-color="#ed0f00"/><stop offset="0.7983" stop-color="#ed8200"/><stop offset="0.9915" stop-color="#eded01"/><stop offset="1.0000" stop-color="#eded00"/></linearGradient><linearGradient id="g217" gradientUnits="userSpaceOnUse" x1="620" x2="972" y1="0" y2="0"><stop offset="0.0000" stop-color="#edcb00"/><stop offset="0.0170" stop-color="#edbd00"/><stop offset="0.0795" stop-color="#eda600"/><stop offset="0.1506" stop-color="#ed9800"/><stop offset="0.3864" stop-color="#ed3c00"/><stop offset="0.5000" stop-color="#ed0f00"/><stop offset="0.8068" stop-color="#ed8500"/><stop offset="0.9915" stop-color="#edec00"/><stop offset="1.0000" stop-color="#edeb00"/></linearGradient><linearGradient id="g218" gradientUnits="userSpaceOnUse" x1="617" x2="969" y1="0" y2="0"><stop offset="0.0000" stop-color="#edcc00"/><stop offset="0.0170" stop-color="#edbe00"/><stop offset="0.0881" stop-color="#eda300"/><stop offset="0.1562" stop-color="#ed9500"/><stop offset="0.3892" stop-color="#ed3a00"/><stop offset="0.5000" stop-color="#ed0f00"/><stop offset="0.5312" stop-color="#ed1800"/><stop offset="0.7216" stop-color="#ed6300"/><stop offset="0.8182" stop-color="#ed8a00"/><stop offset="0.9915" stop-color="#edeb00"/><stop offset="1.0000" stop-color="#edea00"/></linearGradient><linearGradient id="g219" gradientUnits="userSpaceOnUse" x1="614" x2="966" y1="0" y2="0"><stop offset="0.0000" stop-color="#edcd00"/><stop offset="0.0170" stop-color="#edbf00"/><stop offset="0.0994" stop-color="#ed9f00"/><stop offset="0.1619" stop-color="#ed9300"/><stop offset="0.3949" stop-color="#ed3800"/><stop offset="0.5000" stop-color="#ed0f00"/><stop offset="0.5369" stop-color="#ed1800"/><stop offset="0.6080" stop-color="#ed3800"/><stop offset="0.8239" stop-color="#ed8b00"/><stop offset="0.9915" stop-color="#ede900"/><stop offset="1.0000" stop-color="#ede800"/></linearGradient><linearGradient id="g220" gradientUnits="userSpaceOnUse" x1="611" x2="963" y1="0" y2="0"><stop offset="0.0000" stop-color="#edcf00"/><stop offset="0.0170" stop-color="#edc000"/><stop offset="0.1080" stop-color="#ed9c00"/><stop offset="0.1676" stop-color="#ed9000"/><stop offset="0.4006" stop-color="#ed3600"/><stop offset="0.5000" stop-color="#ed0f00"/><stop offset="0.5455" stop-color="#ed1a00"/><stop offset="0.6193" stop-color="#ed3c00"/><stop offset="0.8324" stop-color="#ed8f00"/><stop offset="0.9915" stop-color="#ede700"/><stop offset="1.0000" stop-color="#ede600"/></linearGradient><linearGradient id="g221" gradientUnits="userSpaceOnUse" x1="608" x2="960" y1="0" y2="0"><stop offset="0.0000" stop-color="#edd000"/><stop offset="0.0170" stop-color="#edc100"/><stop offset="0.1193" stop-color="#ed9900"/><stop offset="0.1733" stop-color="#ed8d00"/><stop offset="0.4091" stop-color="#ed3200"/><stop offset="0.5000" stop-color="#ed0f00"/><stop offset="0.5540" stop-color="#ed1b00"/><stop offset="0.6364" stop-color="#ed4300"/><stop offset="0.8409" stop-color="#ed9200"/><stop offset="0.9915" stop-color="#ede600"/><stop offset="1.0000" stop-color="#ede500"/></linearGradient><linearGradient id="g222" gradientUnits="userSpaceOnUse" x1="605" x2="957" y1="0" y2="0"><stop offset="0.0000" stop-color="#edd100"/><stop offset="0.0170" stop-color="#edc200"/><stop offset="0.1307" stop-color="#ed9500"/><stop offset="0.1818" stop-color="#ed8a00"/><stop offset="0.4176" stop-color="#ed2f00"/><stop offset="0.5000" stop-color="#ed0f00"/><stop offset="0.5625" stop-color="#ed1d00"/><stop offset="0.6534" stop-color="#ed4900"/><stop offset="0.8494" stop-color="#ed9500"/><stop offset="0.9915" stop-color="#ede400"/><stop offset="1.0000" stop-color="#ede300"/></linearGradient><linearGradient id="g223" gradientUnits="userSpaceOnUse" x1="602" x2="954" y1="0" y2="0"><stop offset="0.0000" stop-color="#edd200"/><stop offset="0.0170" stop-color="#edc300"/><stop offset="0.1392" stop-color="#ed9200"/><stop offset="0.1875" stop-color="#ed8700"/><stop offset="0.4261" stop-color="#ed2b00"/><stop offset="0.5000" stop-color="#ed0f00"/><stop offset="0.5682" stop-color="#ed1d00"/><stop offset="0.6733" stop-color="#ed5100"/><stop offset="0.8580" stop-color="#ed9800"/><stop offset="0.9915" stop-color="#ede200"/><stop offset="1.0000" stop-color="#ede100"/></linearGradient><linearGradient id="g224" gradientUnits="userSpaceOnUse" x1="599" x2="951" y1="0" y2="0"><stop offset="0.0000" stop-color="#edd300"/><stop offset="0.0170" stop-color="#edc400"/><stop offset="0.1506" stop-color="#ed8f00"/><stop offset="0.1960" stop-color="#ed8400"/><stop offset="0.4375" stop-color="#ed2700"/><stop offset="0.5000" stop-color="#ed0f00"/><stop offset="0.5767" stop-color="#ed1f00"/><stop offset="0.6932" stop-color="#ed5800"/><stop offset="0.8665" stop-color="#ed9b00"/><stop offset="0.9915" stop-color="#ede100"/><stop offset="1.0000" stop-color="#ede000"/></linearGradient><linearGradient id="g225" gradientUnits="userSpaceOnUse" x1="596" x2="948" y1="0" y2="0"><stop offset="0.0000" stop-color="#edd700"/><stop offset="0.0398" stop-color="#edbc00"/><stop offset="0.1619" stop-color="#ed8b00"/><stop offset="0.2074" stop-color="#ed7f00"/><stop offset="0.4489" stop-color="#ed2200"/><stop offset="0.5000" stop-color="#ed0f00"/><stop offset="0.5852" stop-color="#ed2000"/><stop offset="0.7131" stop-color="#ed5f00"/><stop offset="0.8750" stop-color="#ed9f00"/><stop offset="0.9915" stop-color="#eddf00"/><stop offset="1.0000" stop-color="#edde00"/></linearGradient><linearGradient id="g226" gradientUnits="userSpaceOnUse" x1="544" x2="945" y1="0" y2="0"><stop offset="0.0000" stop-color="#2fedbe"/><stop offset="0.0050" stop-color="#30edbd"/><stop offset="0.1072" stop-color="#eced01"/><stop offset="0.1845" stop-color="#edb000"/><stop offset="0.2743" stop-color="#ed8800"/><stop offset="0.3416" stop-color="#ed6f00"/><stop offset="0.5461" stop-color="#ed1400"/><stop offset="0.5636" stop-color="#ed0f00"/><stop offset="0.6434" stop-color="#ed2200"/><stop offset="0.7656" stop-color="#ed6700"/><stop offset="0.9002" stop-color="#eda300"/><stop offset="0.9925" stop-color="#eddd00"/><stop offset="1.0000" stop-color="#eddd00"/></linearGradient><linearGradient id="g227" gradientUnits="userSpaceOnUse" x1="544" x2="942" y1="0" y2="0"><stop offset="0.0000" stop-color="#2fedbe"/><stop offset="0.0075" stop-color="#35edb9"/><stop offset="0.0603" stop-color="#92ed5b"/><stop offset="0.1106" stop-color="#edec00"/><stop offset="0.2060" stop-color="#eda400"/><stop offset="0.2764" stop-color="#ed8500"/><stop offset="0.4950" stop-color="#ed2a00"/><stop offset="0.5578" stop-color="#ed0f00"/><stop offset="0.6482" stop-color="#ed2300"/><stop offset="0.7814" stop-color="#ed6e00"/><stop offset="0.9070" stop-color="#eda700"/><stop offset="0.9925" stop-color="#eddc00"/><stop offset="1.0000" stop-color="#eddb00"/></linearGradient><linearGradient id="g228" gradientUnits="userSpaceOnUse" x1="544" x2="939" y1="0" y2="0"><stop offset="0.0000" stop-color="#2fedbe"/><stop offset="0.0076" stop-color="#35edb8"/><stop offset="0.0481" stop-color="#79ed74"/><stop offset="0.1114" stop-color="#eded00"/><stop offset="0.1848" stop-color="#edb700"/><stop offset="0.2304" stop-color="#ed9700"/><stop offset="0.2835" stop-color="#ed8100"/><stop offset="0.5190" stop-color="#ed1d00"/><stop offset="0.5544" stop-color="#ed0f00"/><stop offset="0.6532" stop-color="#ed2500"/><stop offset="0.7975" stop-color="#ed7600"/><stop offset="0.9139" stop-color="#edaa00"/><stop offset="0.9924" stop-color="#edda00"/><stop offset="1.0000" stop-color="#edd900"/></linearGradient><linearGradient id="g229" gradientUnits="userSpaceOnUse" x1="544" x2="936" y1="0" y2="0"><stop offset="0.0000" stop-color="#2fedbe"/><stop offset="0.0077" stop-color="#36edb7"/><stop offset="0.0561" stop-color="#86ed68"/><stop offset="0.1122" stop-color="#ebed02"/><stop offset="0.2500" stop-color="#ed8c00"/><stop offset="0.5204" stop-color="#ed1b00"/><stop offset="0.5510" stop-color="#ed0f00"/><stop offset="0.6582" stop-color="#ed2700"/><stop offset="0.8138" stop-color="#ed7d00"/><stop offset="0.9209" stop-color="#edad00"/><stop offset="0.9923" stop-color="#edd800"/><stop offset="1.0000" stop-color="#edd800"/></linearGradient><linearGradient id="g230" gradientUnits="userSpaceOnUse" x1="544" x2="933" y1="0" y2="0"><stop offset="0.0000" stop-color="#2fedbe"/><stop offset="0.0077" stop-color="#37edb7"/><stop offset="0.0643" stop-color="#92ed5b"/><stop offset="0.1157" stop-color="#edec00"/><stop offset="0.2725" stop-color="#ed8000"/><stop offset="0.5296" stop-color="#ed1500"/><stop offset="0.5476" stop-color="#ed0f00"/><stop offset="0.6632" stop-color="#ed2800"/><stop offset="0.8303" stop-color="#ed8500"/><stop offset="0.9280" stop-color="#edb000"/><stop offset="0.9923" stop-color="#edd700"/><stop offset="1.0000" stop-color="#edd600"/></linearGradient><linearGradient id="g231" gradientUnits="userSpaceOnUse" x1="544" x2="930" y1="0" y2="0"><stop offset="0.0000" stop-color="#2fedbe"/><stop offset="0.0052" stop-color="#33edba"/><stop offset="0.0725" stop-color="#9eed4f"/><stop offset="0.1166" stop-color="#eded01"/><stop offset="0.2927" stop-color="#ed7600"/><stop offset="0.5440" stop-color="#ed0f00"/><stop offset="0.6684" stop-color="#ed2a00"/><stop offset="0.8472" stop-color="#ed8c00"/><stop offset="0.9352" stop-color="#edb300"/><stop offset="0.9922" stop-color="#edd500"/><stop offset="1.0000" stop-color="#edd400"/></linearGradient><linearGradient id="g232" gradientUnits="userSpaceOnUse" x1="544" x2="927" y1="0" y2="0"><stop offset="0.0000" stop-color="#2fedbe"/><stop offset="0.0052" stop-color="#34edb9"/><stop offset="0.0836" stop-color="#afed3f"/><stop offset="0.1201" stop-color="#edec00"/><stop offset="0.3107" stop-color="#ed6d00"/><stop offset="0.5405" stop-color="#ed0f00"/><stop offset="0.6736" stop-color="#ed2b00"/><stop offset="0.8642" stop-color="#ed9400"/><stop offset="0.9426" stop-color="#edb700"/><stop offset="0.9922" stop-color="#edd400"/><stop offset="1.0000" stop-color="#edd300"/></linearGradient><linearGradient id="g233" gradientUnits="userSpaceOnUse" x1="544" x2="924" y1="0" y2="0"><stop offset="0.0000" stop-color="#2fedbe"/><stop offset="0.0026" stop-color="#2fedbe"/><stop offset="0.0947" stop-color="#bfed2e"/><stop offset="0.1211" stop-color="#eded00"/><stop offset="0.3158" stop-color="#ed6c00"/><stop offset="0.3789" stop-color="#ed4e00"/><stop offset="0.5368" stop-color="#ed0f00"/><stop offset="0.6789" stop-color="#ed2d00"/><stop offset="0.8816" stop-color="#ed9b00"/><stop offset="0.9500" stop-color="#edba00"/><stop offset="0.9921" stop-color="#edd200"/><stop offset="1.0000" stop-color="#edd100"/></linearGradient><linearGradient id="g234" gradientUnits="userSpaceOnUse" x1="544" x2="921" y1="0" y2="0"><stop offset="0.0000" stop-color="#2fedbe"/><stop offset="0.0027" stop-color="#2fedbe"/><stop offset="0.1061" stop-color="#d0ed1d"/><stop offset="0.1220" stop-color="#eced01"/><stop offset="0.3210" stop-color="#ed6c00"/><stop offset="0.4005" stop-color="#ed4300"/><stop offset="0.5332" stop-color="#ed0f00"/><stop offset="0.6844" stop-color="#ed2e00"/><stop offset="0.8992" stop-color="#eda300"/><stop offset="0.9602" stop-color="#edbf00"/><stop offset="0.9920" stop-color="#edd000"/><stop offset="1.0000" stop-color="#edcf00"/></linearGradient><linearGradient id="g235" gradientUnits="userSpaceOnUse" x1="544" x2="918" y1="0" y2="0"><stop offset="0.0000" stop-color="#2fedbe"/><stop offset="0.0027" stop-color="#2fedbe"/><stop offset="0.0455" stop-color="#72ed7b"/><stop offset="0.1176" stop-color="#e1ed0c"/><stop offset="0.1257" stop-color="#edec00"/><stop offset="0.3262" stop-color="#ed6b00"/><stop offset="0.4332" stop-color="#ed3400"/><stop offset="0.5294" stop-color="#ed0f00"/><stop offset="0.6898" stop-color="#ed3000"/><stop offset="0.9171" stop-color="#edaa00"/><stop offset="0.9706" stop-color="#edc400"/><stop offset="0.9920" stop-color="#edcf00"/><stop offset="1.0000" stop-color="#edce00"/></linearGradient><linearGradient id="g236" gradientUnits="userSpaceOnUse" x1="544" x2="915" y1="0" y2="0"><stop offset="0.0000" stop-color="#3eedaf"/><stop offset="0.0027" stop-color="#3eedaf"/><stop offset="0.0054" stop-color="#37edb6"/><stop offset="0.1267" stop-color="#eded00"/><stop offset="0.3315" stop-color="#ed6b00"/><stop offset="0.4636" stop-color="#ed2600"/><stop offset="0.5256" stop-color="#ed0f00"/><stop offset="0.6954" stop-color="#ed3100"/><stop offset="0.9353" stop-color="#edb200"/><stop offset="0.9838" stop-color="#edca00"/><stop offset="0.9973" stop-color="#edcc00"/><stop offset="1.0000" stop-color="#edcc00"/></linearGradient><linearGradient id="g237" gradientUnits="userSpaceOnUse" x1="544" x2="912" y1="0" y2="0"><stop offset="0.0000" stop-color="#3eedaf"/><stop offset="0.0027" stop-color="#3eedaf"/><stop offset="0.0054" stop-color="#37edb6"/><stop offset="0.1304" stop-color="#edec00"/><stop offset="0.3342" stop-color="#ed6c00"/><stop offset="0.4973" stop-color="#ed1700"/><stop offset="0.5217" stop-color="#ed0f00"/><stop offset="0.7011" stop-color="#ed3300"/><stop offset="0.9538" stop-color="#edb900"/><stop offset="0.9918" stop-color="#edcb00"/><stop offset="1.0000" stop-color="#edca00"/></linearGradient><linearGradient id="g238" gradientUnits="userSpaceOnUse" x1="544" x2="909" y1="0" y2="0"><stop offset="0.0000" stop-color="#3eedaf"/><stop offset="0.0027" stop-color="#3eedaf"/><stop offset="0.0055" stop-color="#38edb5"/><stop offset="0.1288" stop-color="#eaed03"/><stop offset="0.1507" stop-color="#ede200"/><stop offset="0.3397" stop-color="#ed6b00"/><stop offset="0.5178" stop-color="#ed0f00"/><stop offset="0.7068" stop-color="#ed3500"/><stop offset="0.9726" stop-color="#edc100"/><stop offset="0.9918" stop-color="#edca00"/><stop offset="1.0000" stop-color="#edc800"/></linearGradient><linearGradient id="g239" gradientUnits="userSpaceOnUse" x1="544" x2="906" y1="0" y2="0"><stop offset="0.0000" stop-color="#3eedaf"/><stop offset="0.0055" stop-color="#39edb4"/><stop offset="0.1243" stop-color="#e3ed0a"/><stop offset="0.1381" stop-color="#edec00"/><stop offset="0.3149" stop-color="#ed7b00"/><stop offset="0.5193" stop-color="#ed1100"/><stop offset="0.7127" stop-color="#ed3600"/><stop offset="0.9917" stop-color="#edc800"/><stop offset="1.0000" stop-color="#edc700"/></linearGradient><linearGradient id="g240" gradientUnits="userSpaceOnUse" x1="544" x2="903" y1="0" y2="0"><stop offset="0.0000" stop-color="#3eedaf"/><stop offset="0.0056" stop-color="#3aedb4"/><stop offset="0.1198" stop-color="#dced12"/><stop offset="0.1421" stop-color="#edec00"/><stop offset="0.3148" stop-color="#ed7f00"/><stop offset="0.5181" stop-color="#ed1600"/><stop offset="0.5571" stop-color="#ed1900"/><stop offset="0.7187" stop-color="#ed3800"/><stop offset="0.9916" stop-color="#edc600"/><stop offset="1.0000" stop-color="#edc500"/></linearGradient><linearGradient id="g241" gradientUnits="userSpaceOnUse" x1="544" x2="900" y1="0" y2="0"><stop offset="0.0000" stop-color="#3eedaf"/><stop offset="0.0056" stop-color="#3aedb3"/><stop offset="0.1152" stop-color="#d5ed19"/><stop offset="0.1461" stop-color="#edec00"/><stop offset="0.3174" stop-color="#ed8000"/><stop offset="0.5140" stop-color="#ed1b00"/><stop offset="0.5393" stop-color="#ed1800"/><stop offset="0.7247" stop-color="#ed3900"/><stop offset="0.9916" stop-color="#edc400"/><stop offset="1.0000" stop-color="#edc300"/></linearGradient><linearGradient id="g242" gradientUnits="userSpaceOnUse" x1="544" x2="897" y1="0" y2="0"><stop offset="0.0000" stop-color="#3eedaf"/><stop offset="0.0057" stop-color="#3bedb2"/><stop offset="0.1133" stop-color="#d0ed1d"/><stop offset="0.1501" stop-color="#edec00"/><stop offset="0.3541" stop-color="#ed6e00"/><stop offset="0.5099" stop-color="#ed2000"/><stop offset="0.5411" stop-color="#ed1a00"/><stop offset="0.7309" stop-color="#ed3b00"/><stop offset="0.9915" stop-color="#edc300"/><stop offset="1.0000" stop-color="#edc100"/></linearGradient><linearGradient id="g243" gradientUnits="userSpaceOnUse" x1="544" x2="894" y1="0" y2="0"><stop offset="0.0000" stop-color="#3eedaf"/><stop offset="0.0057" stop-color="#3cedb2"/><stop offset="0.1086" stop-color="#c9ed24"/><stop offset="0.1543" stop-color="#edec00"/><stop offset="0.3600" stop-color="#ed6d00"/><stop offset="0.5057" stop-color="#ed2600"/><stop offset="0.5457" stop-color="#ed1c00"/><stop offset="0.7371" stop-color="#ed3d00"/><stop offset="0.9914" stop-color="#edc100"/><stop offset="1.0000" stop-color="#edc000"/></linearGradient><linearGradient id="g244" gradientUnits="userSpaceOnUse" x1="544" x2="891" y1="0" y2="0"><stop offset="0.0000" stop-color="#3eedaf"/><stop offset="0.0058" stop-color="#3cedb1"/><stop offset="0.1037" stop-color="#c2ed2c"/><stop offset="0.1585" stop-color="#edec00"/><stop offset="0.3631" stop-color="#ed6e00"/><stop offset="0.5014" stop-color="#ed2b00"/><stop offset="0.5504" stop-color="#ed1f00"/><stop offset="0.7378" stop-color="#ed3c00"/><stop offset="0.9914" stop-color="#edbf00"/><stop offset="1.0000" stop-color="#edbe00"/></linearGradient><linearGradient id="g245" gradientUnits="userSpaceOnUse" x1="544" x2="888" y1="0" y2="0"><stop offset="0.0000" stop-color="#3eedaf"/><stop offset="0.0058" stop-color="#3dedb0"/><stop offset="0.0988" stop-color="#baed33"/><stop offset="0.1628" stop-color="#edec00"/><stop offset="0.3692" stop-color="#ed6e00"/><stop offset="0.4971" stop-color="#ed3000"/><stop offset="0.5552" stop-color="#ed2200"/><stop offset="0.7442" stop-color="#ed3f00"/><stop offset="0.9913" stop-color="#edbd00"/><stop offset="1.0000" stop-color="#edbc00"/></linearGradient><linearGradient id="g246" gradientUnits="userSpaceOnUse" x1="544" x2="885" y1="0" y2="0"><stop offset="0.0000" stop-color="#3eedaf"/><stop offset="0.0059" stop-color="#3eedaf"/><stop offset="0.0938" stop-color="#b3ed3a"/><stop offset="0.1672" stop-color="#edec00"/><stop offset="0.3724" stop-color="#ed6f00"/><stop offset="0.4927" stop-color="#ed3600"/><stop offset="0.5630" stop-color="#ed2500"/><stop offset="0.7419" stop-color="#ed3f00"/><stop offset="0.9912" stop-color="#edbc00"/><stop offset="1.0000" stop-color="#edba00"/></linearGradient><linearGradient id="g247" gradientUnits="userSpaceOnUse" x1="544" x2="882" y1="0" y2="0"><stop offset="0.0000" stop-color="#3eedaf"/><stop offset="0.0030" stop-color="#3eedaf"/><stop offset="0.0089" stop-color="#45eda8"/><stop offset="0.0355" stop-color="#66ed87"/><stop offset="0.0917" stop-color="#afed3f"/><stop offset="0.1716" stop-color="#edec00"/><stop offset="0.3580" stop-color="#ed7900"/><stop offset="0.4882" stop-color="#ed3b00"/><stop offset="0.5680" stop-color="#ed2700"/><stop offset="0.7189" stop-color="#ed3a00"/><stop offset="0.7633" stop-color="#ed4800"/><stop offset="0.9911" stop-color="#edba00"/><stop offset="1.0000" stop-color="#edb900"/></linearGradient><linearGradient id="g248" gradientUnits="userSpaceOnUse" x1="544" x2="879" y1="0" y2="0"><stop offset="0.0000" stop-color="#3eedaf"/><stop offset="0.0030" stop-color="#3eedaf"/><stop offset="0.0060" stop-color="#49eda4"/><stop offset="0.0239" stop-color="#57ed97"/><stop offset="0.0866" stop-color="#a8ed46"/><stop offset="0.1761" stop-color="#edec00"/><stop offset="0.3582" stop-color="#ed7a00"/><stop offset="0.4836" stop-color="#ed4000"/><stop offset="0.5731" stop-color="#ed2a00"/><stop offset="0.7164" stop-color="#ed3a00"/><stop offset="0.7701" stop-color="#ed4a00"/><stop offset="0.9910" stop-color="#edb800"/><stop offset="1.0000" stop-color="#edb700"/></linearGradient><linearGradient id="g249" gradientUnits="userSpaceOnUse" x1="544" x2="876" y1="0" y2="0"><stop offset="0.0000" stop-color="#3eedaf"/><stop offset="0.0030" stop-color="#3eedaf"/><stop offset="0.0060" stop-color="#4fed9e"/><stop offset="0.0331" stop-color="#63ed8a"/><stop offset="0.0813" stop-color="#a0ed4d"/><stop offset="0.1807" stop-color="#edec00"/><stop offset="0.3584" stop-color="#ed7c00"/><stop offset="0.3946" stop-color="#ed6e00"/><stop offset="0.4789" stop-color="#ed4600"/><stop offset="0.5783" stop-color="#ed2c00"/><stop offset="0.7410" stop-color="#ed4000"/><stop offset="0.7771" stop-color="#ed4d00"/><stop offset="0.9910" stop-color="#edb600"/><stop offset="1.0000" stop-color="#edb500"/></linearGradient><linearGradient id="g250" gradientUnits="userSpaceOnUse" x1="544" x2="873" y1="0" y2="0"><stop offset="0.0000" stop-color="#3eedaf"/><stop offset="0.0030" stop-color="#3eedaf"/><stop offset="0.0061" stop-color="#55ed99"/><stop offset="0.0395" stop-color="#6ced82"/><stop offset="0.0760" stop-color="#99ed54"/><stop offset="0.1824" stop-color="#edec00"/><stop offset="0.3587" stop-color="#ed7d00"/><stop offset="0.3921" stop-color="#ed7300"/><stop offset="0.4802" stop-color="#ed4900"/><stop offset="0.5836" stop-color="#ed2f00"/><stop offset="0.7386" stop-color="#ed4000"/><stop offset="0.7842" stop-color="#ed4f00"/><stop offset="0.9909" stop-color="#edb500"/><stop offset="1.0000" stop-color="#edb300"/></linearGradient><linearGradient id="g251" gradientUnits="userSpaceOnUse" x1="544" x2="870" y1="0" y2="0"><stop offset="0.0000" stop-color="#3eedaf"/><stop offset="0.0031" stop-color="#3eedaf"/><stop offset="0.0061" stop-color="#5aed93"/><stop offset="0.0491" stop-color="#78ed75"/><stop offset="0.0736" stop-color="#95ed59"/><stop offset="0.1840" stop-color="#edec00"/><stop offset="0.3589" stop-color="#ed7f00"/><stop offset="0.3988" stop-color="#ed7300"/><stop offset="0.4785" stop-color="#ed4e00"/><stop offset="0.5920" stop-color="#ed3200"/><stop offset="0.7362" stop-color="#ed4000"/><stop offset="0.7914" stop-color="#ed5200"/><stop offset="0.9908" stop-color="#edb300"/><stop offset="1.0000" stop-color="#edb200"/></linearGradient><linearGradient id="g252" gradientUnits="userSpaceOnUse" x1="544" x2="867" y1="0" y2="0"><stop offset="0.0000" stop-color="#3eedaf"/><stop offset="0.0031" stop-color="#3eedaf"/><stop offset="0.0062" stop-color="#60ed8d"/><stop offset="0.0557" stop-color="#80ed6d"/><stop offset="0.0929" stop-color="#a1ed4c"/><stop offset="0.1858" stop-color="#edec00"/><stop offset="0.3622" stop-color="#ed7f00"/><stop offset="0.4056" stop-color="#ed7300"/><stop offset="0.4799" stop-color="#ed5200"/><stop offset="0.5975" stop-color="#ed3300"/><stop offset="0.7368" stop-color="#ed4100"/><stop offset="0.7988" stop-color="#ed5400"/><stop offset="0.9907" stop-color="#edb100"/><stop offset="1.0000" stop-color="#edb000"/></linearGradient><linearGradient id="g253" gradientUnits="userSpaceOnUse" x1="544" x2="864" y1="0" y2="0"><stop offset="0.0000" stop-color="#85ed68"/><stop offset="0.0031" stop-color="#85ed68"/><stop offset="0.0063" stop-color="#66ed87"/><stop offset="0.0750" stop-color="#92ed5c"/><stop offset="0.1875" stop-color="#edec00"/><stop offset="0.3625" stop-color="#ed8100"/><stop offset="0.4125" stop-color="#ed7400"/><stop offset="0.4813" stop-color="#ed5500"/><stop offset="0.6031" stop-color="#ed3500"/><stop offset="0.7344" stop-color="#ed4100"/><stop offset="0.8063" stop-color="#ed5700"/><stop offset="0.9906" stop-color="#edaf00"/><stop offset="1.0000" stop-color="#edae00"/></linearGradient><linearGradient id="g254" gradientUnits="userSpaceOnUse" x1="544" x2="861" y1="0" y2="0"><stop offset="0.0000" stop-color="#85ed68"/><stop offset="0.0032" stop-color="#85ed68"/><stop offset="0.0063" stop-color="#6ced82"/><stop offset="0.0631" stop-color="#8ced61"/><stop offset="0.0978" stop-color="#a3ed4a"/><stop offset="0.1893" stop-color="#edec00"/><stop offset="0.3628" stop-color="#ed8200"/><stop offset="0.4196" stop-color="#ed7400"/><stop offset="0.4795" stop-color="#ed5a00"/><stop offset="0.6025" stop-color="#ed3800"/><stop offset="0.7224" stop-color="#ed3e00"/><stop offset="0.8139" stop-color="#ed5900"/><stop offset="0.9905" stop-color="#edae00"/><stop offset="1.0000" stop-color="#edac00"/></linearGradient><linearGradient id="g255" gradientUnits="userSpaceOnUse" x1="544" x2="858" y1="0" y2="0"><stop offset="0.0000" stop-color="#85ed68"/><stop offset="0.0032" stop-color="#85ed68"/><stop offset="0.0064" stop-color="#71ed7c"/><stop offset="0.0605" stop-color="#90ed5e"/><stop offset="0.0860" stop-color="#9bed53"/><stop offset="0.1911" stop-color="#eded00"/><stop offset="0.3631" stop-color="#ed8400"/><stop offset="0.4268" stop-color="#ed7400"/><stop offset="0.4809" stop-color="#ed5e00"/><stop offset="0.5860" stop-color="#ed3e00"/><stop offset="0.6338" stop-color="#ed3900"/><stop offset="0.7325" stop-color="#ed4100"/><stop offset="0.8217" stop-color="#ed5c00"/><stop offset="0.9904" stop-color="#edac00"/><stop offset="1.0000" stop-color="#edab00"/></linearGradient><linearGradient id="g256" gradientUnits="userSpaceOnUse" x1="544" x2="855" y1="0" y2="0"><stop offset="0.0000" stop-color="#85ed68"/><stop offset="0.0032" stop-color="#85ed68"/><stop offset="0.0064" stop-color="#77ed76"/><stop offset="0.0579" stop-color="#93ed5a"/><stop offset="0.0932" stop-color="#a1ed4d"/><stop offset="0.1929" stop-color="#eded00"/><stop offset="0.3633" stop-color="#ed8500"/><stop offset="0.4341" stop-color="#ed7500"/><stop offset="0.4823" stop-color="#ed6100"/><stop offset="0.5916" stop-color="#ed3f00"/><stop offset="0.6817" stop-color="#ed3c00"/><stop offset="0.7395" stop-color="#ed4400"/><stop offset="0.8296" stop-color="#ed5e00"/><stop offset="0.9871" stop-color="#edaa00"/><stop offset="1.0000" stop-color="#eda900"/></linearGradient><linearGradient id="g257" gradientUnits="userSpaceOnUse" x1="544" x2="852" y1="0" y2="0"><stop offset="0.0000" stop-color="#85ed68"/><stop offset="0.0032" stop-color="#85ed68"/><stop offset="0.0065" stop-color="#7ded70"/><stop offset="0.0552" stop-color="#97ed56"/><stop offset="0.1006" stop-color="#a7ed47"/><stop offset="0.1948" stop-color="#eded00"/><stop offset="0.3669" stop-color="#ed8600"/><stop offset="0.4416" stop-color="#ed7500"/><stop offset="0.4903" stop-color="#ed6300"/><stop offset="0.6104" stop-color="#ed3f00"/><stop offset="0.7110" stop-color="#ed3e00"/><stop offset="0.8377" stop-color="#ed6100"/><stop offset="0.9870" stop-color="#eda900"/><stop offset="1.0000" stop-color="#eda700"/></linearGradient><linearGradient id="g258" gradientUnits="userSpaceOnUse" x1="544" x2="849" y1="0" y2="0"><stop offset="0.0000" stop-color="#85ed68"/><stop offset="0.0098" stop-color="#84ed69"/><stop offset="0.0525" stop-color="#9bed52"/><stop offset="0.1082" stop-color="#aced41"/><stop offset="0.2000" stop-color="#edeb00"/><stop offset="0.3672" stop-color="#ed8700"/><stop offset="0.4525" stop-color="#ed7400"/><stop offset="0.6131" stop-color="#ed4100"/><stop offset="0.7180" stop-color="#ed3f00"/><stop offset="0.8459" stop-color="#ed6300"/><stop offset="0.9607" stop-color="#ed9b00"/><stop offset="0.9902" stop-color="#eda700"/><stop offset="1.0000" stop-color="#eda500"/></linearGradient><linearGradient id="g259" gradientUnits="userSpaceOnUse" x1="544" x2="846" y1="0" y2="0"><stop offset="0.0000" stop-color="#85ed68"/><stop offset="0.0497" stop-color="#9eed4f"/><stop offset="0.1159" stop-color="#b2ed3b"/><stop offset="0.2020" stop-color="#edeb00"/><stop offset="0.3675" stop-color="#ed8900"/><stop offset="0.4603" stop-color="#ed7400"/><stop offset="0.6159" stop-color="#ed4300"/><stop offset="0.7252" stop-color="#ed4200"/><stop offset="0.8543" stop-color="#ed6600"/><stop offset="0.9503" stop-color="#ed9500"/><stop offset="0.9901" stop-color="#eda500"/><stop offset="1.0000" stop-color="#eda400"/></linearGradient><linearGradient id="g260" gradientUnits="userSpaceOnUse" x1="544" x2="843" y1="0" y2="0"><stop offset="0.0000" stop-color="#beed2f"/><stop offset="0.0033" stop-color="#beed2f"/><stop offset="0.0067" stop-color="#8eed5f"/><stop offset="0.0468" stop-color="#a2ed4b"/><stop offset="0.1237" stop-color="#b8ed35"/><stop offset="0.2007" stop-color="#edec00"/><stop offset="0.3679" stop-color="#ed8a00"/><stop offset="0.4783" stop-color="#ed7200"/><stop offset="0.6154" stop-color="#ed4600"/><stop offset="0.7291" stop-color="#ed4300"/><stop offset="0.8629" stop-color="#ed6800"/><stop offset="0.9532" stop-color="#ed9400"/><stop offset="0.9900" stop-color="#eda300"/><stop offset="1.0000" stop-color="#eda200"/></linearGradient><linearGradient id="g261" gradientUnits="userSpaceOnUse" x1="544" x2="840" y1="0" y2="0"><stop offset="0.0000" stop-color="#beed2f"/><stop offset="0.0034" stop-color="#beed2f"/><stop offset="0.0068" stop-color="#94ed59"/><stop offset="0.0439" stop-color="#a6ed47"/><stop offset="0.1351" stop-color="#c1ed2c"/><stop offset="0.2027" stop-color="#edeb00"/><stop offset="0.3682" stop-color="#ed8b00"/><stop offset="0.4865" stop-color="#ed7300"/><stop offset="0.6216" stop-color="#ed4800"/><stop offset="0.7365" stop-color="#ed4500"/><stop offset="0.8716" stop-color="#ed6b00"/><stop offset="0.9527" stop-color="#ed9300"/><stop offset="0.9899" stop-color="#eda100"/><stop offset="1.0000" stop-color="#eda000"/></linearGradient><linearGradient id="g262" gradientUnits="userSpaceOnUse" x1="544" x2="837" y1="0" y2="0"><stop offset="0.0000" stop-color="#beed2f"/><stop offset="0.0034" stop-color="#beed2f"/><stop offset="0.0068" stop-color="#99ed54"/><stop offset="0.0410" stop-color="#aaed44"/><stop offset="0.1433" stop-color="#c7ed26"/><stop offset="0.2014" stop-color="#edec00"/><stop offset="0.3720" stop-color="#ed8c00"/><stop offset="0.4676" stop-color="#ed7800"/><stop offset="0.5427" stop-color="#ed6300"/><stop offset="0.6246" stop-color="#ed4a00"/><stop offset="0.7440" stop-color="#ed4600"/><stop offset="0.8805" stop-color="#ed6d00"/><stop offset="0.9625" stop-color="#ed9500"/><stop offset="0.9898" stop-color="#eda000"/><stop offset="1.0000" stop-color="#ed9e00"/></linearGradient><linearGradient id="g263" gradientUnits="userSpaceOnUse" x1="544" x2="834" y1="0" y2="0"><stop offset="0.0000" stop-color="#beed2f"/><stop offset="0.0034" stop-color="#beed2f"/><stop offset="0.0069" stop-color="#9fed4e"/><stop offset="0.0414" stop-color="#aeed3f"/><stop offset="0.1517" stop-color="#cded20"/><stop offset="0.2034" stop-color="#edeb00"/><stop offset="0.3724" stop-color="#ed8e00"/><stop offset="0.4586" stop-color="#ed7b00"/><stop offset="0.5448" stop-color="#ed6500"/><stop offset="0.6276" stop-color="#ed4c00"/><stop offset="0.7517" stop-color="#ed4800"/><stop offset="0.8897" stop-color="#ed7000"/><stop offset="0.9655" stop-color="#ed9500"/><stop offset="0.9897" stop-color="#ed9e00"/><stop offset="1.0000" stop-color="#ed9c00"/></linearGradient><linearGradient id="g264" gradientUnits="userSpaceOnUse" x1="544" x2="831" y1="0" y2="0"><stop offset="0.0000" stop-color="#beed2f"/><stop offset="0.0035" stop-color="#beed2f"/><stop offset="0.0070" stop-color="#a5ed48"/><stop offset="0.0418" stop-color="#b3ed3a"/><stop offset="0.1603" stop-color="#d3ed1a"/><stop offset="0.2021" stop-color="#edec00"/><stop offset="0.3728" stop-color="#ed8f00"/><stop offset="0.4495" stop-color="#ed7e00"/><stop offset="0.5017" stop-color="#ed7000"/><stop offset="0.5610" stop-color="#ed6300"/><stop offset="0.6307" stop-color="#ed4f00"/><stop offset="0.7596" stop-color="#ed4a00"/><stop offset="0.8990" stop-color="#ed7200"/><stop offset="0.9791" stop-color="#ed9900"/><stop offset="0.9965" stop-color="#ed9b00"/><stop offset="1.0000" stop-color="#ed9a00"/></linearGradient><linearGradient id="g265" gradientUnits="userSpaceOnUse" x1="544" x2="828" y1="0" y2="0"><stop offset="0.0000" stop-color="#beed2f"/><stop offset="0.0035" stop-color="#beed2f"/><stop offset="0.0070" stop-color="#abed43"/><stop offset="0.0458" stop-color="#b8ed35"/><stop offset="0.1725" stop-color="#dbed12"/><stop offset="0.2042" stop-color="#edeb00"/><stop offset="0.3732" stop-color="#ed9000"/><stop offset="0.4401" stop-color="#ed8000"/><stop offset="0.5035" stop-color="#ed6f00"/><stop offset="0.5739" stop-color="#ed6200"/><stop offset="0.6338" stop-color="#ed5100"/><stop offset="0.7676" stop-color="#ed4b00"/><stop offset="0.9085" stop-color="#ed7500"/><stop offset="0.9859" stop-color="#ed9b00"/><stop offset="1.0000" stop-color="#ed9700"/></linearGradient><linearGradient id="g266" gradientUnits="userSpaceOnUse" x1="544" x2="825" y1="0" y2="0"><stop offset="0.0000" stop-color="#beed2f"/><stop offset="0.0036" stop-color="#beed2f"/><stop offset="0.0071" stop-color="#b0ed3d"/><stop offset="0.1815" stop-color="#e1ed0c"/><stop offset="0.2028" stop-color="#edec00"/><stop offset="0.3772" stop-color="#ed9100"/><stop offset="0.4484" stop-color="#ed7d00"/><stop offset="0.5089" stop-color="#ed6d00"/><stop offset="0.5979" stop-color="#ed5d00"/><stop offset="0.6406" stop-color="#ed5300"/><stop offset="0.7758" stop-color="#ed4d00"/><stop offset="0.9181" stop-color="#ed7700"/><stop offset="0.9858" stop-color="#ed9900"/><stop offset="1.0000" stop-color="#ed9500"/></linearGradient><linearGradient id="g267" gradientUnits="userSpaceOnUse" x1="544" x2="822" y1="0" y2="0"><stop offset="0.0000" stop-color="#beed2f"/><stop offset="0.0036" stop-color="#beed2f"/><stop offset="0.0072" stop-color="#b6ed37"/><stop offset="0.1906" stop-color="#e7ed06"/><stop offset="0.2086" stop-color="#ede900"/><stop offset="0.3777" stop-color="#ed9200"/><stop offset="0.5108" stop-color="#ed6c00"/><stop offset="0.6187" stop-color="#ed5a00"/><stop offset="0.7086" stop-color="#ed5100"/><stop offset="0.7842" stop-color="#ed4e00"/><stop offset="0.9281" stop-color="#ed7a00"/><stop offset="0.9856" stop-color="#ed9700"/><stop offset="1.0000" stop-color="#ed9300"/></linearGradient><linearGradient id="g268" gradientUnits="userSpaceOnUse" x1="544" x2="819" y1="0" y2="0"><stop offset="0.0000" stop-color="#beed2f"/><stop offset="0.0182" stop-color="#bfed2e"/><stop offset="0.2036" stop-color="#edeb00"/><stop offset="0.3818" stop-color="#ed9200"/><stop offset="0.5164" stop-color="#ed6a00"/><stop offset="0.6764" stop-color="#ed5500"/><stop offset="0.7927" stop-color="#ed5000"/><stop offset="0.9418" stop-color="#ed7e00"/><stop offset="0.9855" stop-color="#ed9500"/><stop offset="1.0000" stop-color="#ed9000"/></linearGradient>
</defs>
<rect x="546" y="21" width="838" height="806" fill="url(#bg)"/>
<g clip-path="url(#shape)"><rect x="1105" y="21" width="248" height="3.6" fill="url(#g0)"/><rect x="1105" y="24" width="248" height="3.6" fill="url(#g1)"/><rect x="1105" y="27" width="248" height="3.6" fill="url(#g2)"/><rect x="1105" y="30" width="248" height="3.6" fill="url(#g3)"/><rect x="1105" y="33" width="248" height="3.6" fill="url(#g4)"/><rect x="1105" y="36" width="248" height="3.6" fill="url(#g5)"/><rect x="1105" y="39" width="248" height="3.6" fill="url(#g6)"/><rect x="1105" y="42" width="248" height="3.6" fill="url(#g7)"/><rect x="1105" y="45" width="248" height="3.6" fill="url(#g8)"/><rect x="1105" y="48" width="248" height="3.6" fill="url(#g9)"/><rect x="1105" y="51" width="248" height="3.6" fill="url(#g10)"/><rect x="1105" y="54" width="248" height="3.6" fill="url(#g11)"/><rect x="1105" y="57" width="248" height="3.6" fill="url(#g12)"/><rect x="1105" y="60" width="248" height="3.6" fill="url(#g13)"/><rect x="1105" y="63" width="248" height="3.6" fill="url(#g14)"/><rect x="1105" y="66" width="248" height="3.6" fill="url(#g15)"/><rect x="1105" y="69" width="248" height="3.6" fill="url(#g16)"/><rect x="1105" y="72" width="248" height="3.6" fill="url(#g17)"/><rect x="1105" y="75" width="248" height="3.6" fill="url(#g18)"/><rect x="1105" y="78" width="248" height="3.6" fill="url(#g19)"/><rect x="1105" y="81" width="248" height="3.6" fill="url(#g20)"/><rect x="1105" y="84" width="248" height="3.6" fill="url(#g21)"/><rect x="1105" y="87" width="248" height="3.6" fill="url(#g22)"/><rect x="1105" y="90" width="248" height="3.6" fill="url(#g23)"/><rect x="1105" y="93" width="248" height="3.6" fill="url(#g24)"/><rect x="1105" y="96" width="248" height="3.6" fill="url(#g25)"/><rect x="1105" y="99" width="248" height="3.6" fill="url(#g26)"/><rect x="1105" y="102" width="248" height="3.6" fill="url(#g27)"/><rect x="1105" y="105" width="248" height="3.6" fill="url(#g28)"/><rect x="1105" y="108" width="248" height="3.6" fill="url(#g29)"/><rect x="1105" y="111" width="248" height="3.6" fill="url(#g30)"/><rect x="1105" y="114" width="248" height="3.6" fill="url(#g31)"/><rect x="1105" y="117" width="280" height="3.6" fill="url(#g32)"/><rect x="1105" y="120" width="280" height="3.6" fill="url(#g33)"/><rect x="1105" y="123" width="280" height="3.6" fill="url(#g34)"/><rect x="1105" y="126" width="280" height="3.6" fill="url(#g35)"/><rect x="1105" y="129" width="280" height="3.6" fill="url(#g36)"/><rect x="1105" y="132" width="280" height="3.6" fill="url(#g37)"/><rect x="1105" y="135" width="280" height="3.6" fill="url(#g38)"/><rect x="1105" y="138" width="280" height="3.6" fill="url(#g39)"/><rect x="1105" y="141" width="280" height="3.6" fill="url(#g40)"/><rect x="1105" y="144" width="280" height="3.6" fill="url(#g41)"/><rect x="1105" y="147" width="280" height="3.6" fill="url(#g42)"/><rect x="1105" y="150" width="280" height="3.6" fill="url(#g43)"/><rect x="1105" y="153" width="280" height="3.6" fill="url(#g44)"/><rect x="1105" y="156" width="280" height="3.6" fill="url(#g45)"/><rect x="1105" y="159" width="280" height="3.6" fill="url(#g46)"/><rect x="1105" y="162" width="280" height="3.6" fill="url(#g47)"/><rect x="1105" y="165" width="280" height="3.6" fill="url(#g48)"/><rect x="1105" y="168" width="280" height="3.6" fill="url(#g49)"/><rect x="1105" y="171" width="280" height="3.6" fill="url(#g50)"/><rect x="1105" y="174" width="280" height="3.6" fill="url(#g51)"/><rect x="1105" y="177" width="280" height="3.6" fill="url(#g52)"/><rect x="1105" y="180" width="280" height="3.6" fill="url(#g53)"/><rect x="1105" y="183" width="280" height="3.6" fill="url(#g54)"/><rect x="1105" y="186" width="280" height="3.6" fill="url(#g55)"/><rect x="1103" y="189" width="282" height="3.6" fill="url(#g56)"/><rect x="1100" y="192" width="285" height="3.6" fill="url(#g57)"/><rect x="1097" y="195" width="288" height="3.6" fill="url(#g58)"/><rect x="1094" y="198" width="291" height="3.6" fill="url(#g59)"/><rect x="1091" y="201" width="294" height="3.6" fill="url(#g60)"/><rect x="1088" y="204" width="297" height="3.6" fill="url(#g61)"/><rect x="1085" y="207" width="300" height="3.6" fill="url(#g62)"/><rect x="1082" y="210" width="303" height="3.6" fill="url(#g63)"/><rect x="1079" y="213" width="306" height="3.6" fill="url(#g64)"/><rect x="1076" y="216" width="309" height="3.6" fill="url(#g65)"/><rect x="1073" y="219" width="312" height="3.6" fill="url(#g66)"/><rect x="1070" y="222" width="315" height="3.6" fill="url(#g67)"/><rect x="1067" y="225" width="318" height="3.6" fill="url(#g68)"/><rect x="1064" y="228" width="321" height="3.6" fill="url(#g69)"/><rect x="1061" y="231" width="324" height="3.6" fill="url(#g70)"/><rect x="1058" y="234" width="327" height="3.6" fill="url(#g71)"/><rect x="1055" y="237" width="330" height="3.6" fill="url(#g72)"/><rect x="1052" y="240" width="333" height="3.6" fill="url(#g73)"/><rect x="1049" y="243" width="336" height="3.6" fill="url(#g74)"/><rect x="1046" y="246" width="339" height="3.6" fill="url(#g75)"/><rect x="1043" y="249" width="342" height="3.6" fill="url(#g76)"/><rect x="1040" y="252" width="345" height="3.6" fill="url(#g77)"/><rect x="1037" y="255" width="348" height="3.6" fill="url(#g78)"/><rect x="1034" y="258" width="351" height="3.6" fill="url(#g79)"/><rect x="1031" y="261" width="354" height="3.6" fill="url(#g80)"/><rect x="1028" y="264" width="357" height="3.6" fill="url(#g81)"/><rect x="1025" y="267" width="360" height="3.6" fill="url(#g82)"/><rect x="1022" y="270" width="363" height="3.6" fill="url(#g83)"/><rect x="1019" y="273" width="366" height="3.6" fill="url(#g84)"/><rect x="1016" y="276" width="369" height="3.6" fill="url(#g85)"/><rect x="1013" y="279" width="372" height="3.6" fill="url(#g86)"/><rect x="1010" y="282" width="375" height="3.6" fill="url(#g87)"/><rect x="1007" y="285" width="378" height="3.6" fill="url(#g88)"/><rect x="1004" y="288" width="381" height="3.6" fill="url(#g89)"/><rect x="1001" y="291" width="384" height="3.6" fill="url(#g90)"/><rect x="998" y="294" width="387" height="3.6" fill="url(#g91)"/><rect x="995" y="297" width="390" height="3.6" fill="url(#g92)"/><rect x="992" y="300" width="393" height="3.6" fill="url(#g93)"/><rect x="989" y="303" width="396" height="3.6" fill="url(#g94)"/><rect x="986" y="306" width="399" height="3.6" fill="url(#g95)"/><rect x="983" y="309" width="402" height="3.6" fill="url(#g96)"/><rect x="980" y="312" width="405" height="3.6" fill="url(#g97)"/><rect x="977" y="315" width="408" height="3.6" fill="url(#g98)"/><rect x="974" y="318" width="411" height="3.6" fill="url(#g99)"/><rect x="971" y="321" width="414" height="3.6" fill="url(#g100)"/><rect x="968" y="324" width="417" height="3.6" fill="url(#g101)"/><rect x="965" y="327" width="420" height="3.6" fill="url(#g102)"/><rect x="962" y="330" width="423" height="3.6" fill="url(#g103)"/><rect x="959" y="333" width="426" height="3.6" fill="url(#g104)"/><rect x="956" y="336" width="429" height="3.6" fill="url(#g105)"/><rect x="953" y="339" width="432" height="3.6" fill="url(#g106)"/><rect x="950" y="342" width="435" height="3.6" fill="url(#g107)"/><rect x="947" y="345" width="438" height="3.6" fill="url(#g108)"/><rect x="944" y="348" width="441" height="3.6" fill="url(#g109)"/><rect x="941" y="351" width="444" height="3.6" fill="url(#g110)"/><rect x="938" y="354" width="447" height="3.6" fill="url(#g111)"/><rect x="935" y="357" width="450" height="3.6" fill="url(#g112)"/><rect x="932" y="360" width="453" height="3.6" fill="url(#g113)"/><rect x="929" y="363" width="456" height="3.6" fill="url(#g114)"/><rect x="926" y="366" width="354" height="3.6" fill="url(#g115)"/><rect x="923" y="369" width="354" height="3.6" fill="url(#g116)"/><rect x="920" y="372" width="354" height="3.6" fill="url(#g117)"/><rect x="917" y="375" width="354" height="3.6" fill="url(#g118)"/><rect x="914" y="378" width="354" height="3.6" fill="url(#g119)"/><rect x="911" y="381" width="354" height="3.6" fill="url(#g120)"/><rect x="908" y="384" width="354" height="3.6" fill="url(#g121)"/><rect x="905" y="387" width="354" height="3.6" fill="url(#g122)"/><rect x="902" y="390" width="354" height="3.6" fill="url(#g123)"/><rect x="899" y="393" width="354" height="3.6" fill="url(#g124)"/><rect x="896" y="396" width="354" height="3.6" fill="url(#g125)"/><rect x="893" y="399" width="354" height="3.6" fill="url(#g126)"/><rect x="890" y="402" width="354" height="3.6" fill="url(#g127)"/><rect x="887" y="405" width="354" height="3.6" fill="url(#g128)"/><rect x="884" y="408" width="354" height="3.6" fill="url(#g129)"/><rect x="881" y="411" width="354" height="3.6" fill="url(#g130)"/><rect x="878" y="414" width="354" height="3.6" fill="url(#g131)"/><rect x="875" y="417" width="354" height="3.6" fill="url(#g132)"/><rect x="872" y="420" width="354" height="3.6" fill="url(#g133)"/><rect x="869" y="423" width="354" height="3.6" fill="url(#g134)"/><rect x="866" y="426" width="354" height="3.6" fill="url(#g135)"/><rect x="863" y="429" width="354" height="3.6" fill="url(#g136)"/><rect x="860" y="432" width="354" height="3.6" fill="url(#g137)"/><rect x="857" y="435" width="354" height="3.6" fill="url(#g138)"/><rect x="854" y="438" width="354" height="3.6" fill="url(#g139)"/><rect x="851" y="441" width="354" height="3.6" fill="url(#g140)"/><rect x="848" y="444" width="354" height="3.6" fill="url(#g141)"/><rect x="845" y="447" width="354" height="3.6" fill="url(#g142)"/><rect x="842" y="450" width="354" height="3.6" fill="url(#g143)"/><rect x="839" y="453" width="354" height="3.6" fill="url(#g144)"/><rect x="836" y="456" width="354" height="3.6" fill="url(#g145)"/><rect x="833" y="459" width="354" height="3.6" fill="url(#g146)"/><rect x="830" y="462" width="354" height="3.6" fill="url(#g147)"/><rect x="827" y="465" width="354" height="3.6" fill="url(#g148)"/><rect x="824" y="468" width="354" height="3.6" fill="url(#g149)"/><rect x="821" y="471" width="354" height="3.6" fill="url(#g150)"/><rect x="818" y="474" width="354" height="3.6" fill="url(#g151)"/><rect x="815" y="477" width="354" height="3.6" fill="url(#g152)"/><rect x="812" y="480" width="354" height="3.6" fill="url(#g153)"/><rect x="809" y="483" width="354" height="3.6" fill="url(#g154)"/><rect x="806" y="486" width="354" height="3.6" fill="url(#g155)"/><rect x="803" y="489" width="354" height="3.6" fill="url(#g156)"/><rect x="800" y="492" width="354" height="3.6" fill="url(#g157)"/><rect x="797" y="495" width="354" height="3.6" fill="url(#g158)"/><rect x="794" y="498" width="354" height="3.6" fill="url(#g159)"/><rect x="791" y="501" width="354" height="3.6" fill="url(#g160)"/><rect x="788" y="504" width="354" height="3.6" fill="url(#g161)"/><rect x="785" y="507" width="354" height="3.6" fill="url(#g162)"/><rect x="782" y="510" width="354" height="3.6" fill="url(#g163)"/><rect x="779" y="513" width="354" height="3.6" fill="url(#g164)"/><rect x="776" y="516" width="354" height="3.6" fill="url(#g165)"/><rect x="773" y="519" width="354" height="3.6" fill="url(#g166)"/><rect x="770" y="522" width="354" height="3.6" fill="url(#g167)"/><rect x="767" y="525" width="354" height="3.6" fill="url(#g168)"/><rect x="764" y="528" width="354" height="3.6" fill="url(#g169)"/><rect x="761" y="531" width="354" height="3.6" fill="url(#g170)"/><rect x="758" y="534" width="354" height="3.6" fill="url(#g171)"/><rect x="755" y="537" width="354" height="3.6" fill="url(#g172)"/><rect x="752" y="540" width="354" height="3.6" fill="url(#g173)"/><rect x="749" y="543" width="354" height="3.6" fill="url(#g174)"/><rect x="746" y="546" width="354" height="3.6" fill="url(#g175)"/><rect x="743" y="549" width="354" height="3.6" fill="url(#g176)"/><rect x="740" y="552" width="354" height="3.6" fill="url(#g177)"/><rect x="737" y="555" width="354" height="3.6" fill="url(#g178)"/><rect x="734" y="558" width="354" height="3.6" fill="url(#g179)"/><rect x="731" y="561" width="354" height="3.6" fill="url(#g180)"/><rect x="728" y="564" width="354" height="3.6" fill="url(#g181)"/><rect x="725" y="567" width="354" height="3.6" fill="url(#g182)"/><rect x="722" y="570" width="354" height="3.6" fill="url(#g183)"/><rect x="719" y="573" width="354" height="3.6" fill="url(#g184)"/><rect x="716" y="576" width="354" height="3.6" fill="url(#g185)"/><rect x="713" y="579" width="354" height="3.6" fill="url(#g186)"/><rect x="710" y="582" width="354" height="3.6" fill="url(#g187)"/><rect x="707" y="585" width="354" height="3.6" fill="url(#g188)"/><rect x="704" y="588" width="354" height="3.6" fill="url(#g189)"/><rect x="701" y="591" width="354" height="3.6" fill="url(#g190)"/><rect x="698" y="594" width="354" height="3.6" fill="url(#g191)"/><rect x="695" y="597" width="354" height="3.6" fill="url(#g192)"/><rect x="692" y="600" width="354" height="3.6" fill="url(#g193)"/><rect x="689" y="603" width="354" height="3.6" fill="url(#g194)"/><rect x="686" y="606" width="354" height="3.6" fill="url(#g195)"/><rect x="683" y="609" width="354" height="3.6" fill="url(#g196)"/><rect x="680" y="612" width="354" height="3.6" fill="url(#g197)"/><rect x="677" y="615" width="354" height="3.6" fill="url(#g198)"/><rect x="674" y="618" width="354" height="3.6" fill="url(#g199)"/><rect x="671" y="621" width="354" height="3.6" fill="url(#g200)"/><rect x="668" y="624" width="354" height="3.6" fill="url(#g201)"/><rect x="665" y="627" width="354" height="3.6" fill="url(#g202)"/><rect x="662" y="630" width="354" height="3.6" fill="url(#g203)"/><rect x="659" y="633" width="354" height="3.6" fill="url(#g204)"/><rect x="656" y="636" width="354" height="3.6" fill="url(#g205)"/><rect x="653" y="639" width="354" height="3.6" fill="url(#g206)"/><rect x="650" y="642" width="354" height="3.6" fill="url(#g207)"/><rect x="647" y="645" width="354" height="3.6" fill="url(#g208)"/><rect x="644" y="648" width="354" height="3.6" fill="url(#g209)"/><rect x="641" y="651" width="354" height="3.6" fill="url(#g210)"/><rect x="638" y="654" width="354" height="3.6" fill="url(#g211)"/><rect x="635" y="657" width="354" height="3.6" fill="url(#g212)"/><rect x="632" y="660" width="354" height="3.6" fill="url(#g213)"/><rect x="629" y="663" width="354" height="3.6" fill="url(#g214)"/><rect x="626" y="666" width="354" height="3.6" fill="url(#g215)"/><rect x="623" y="669" width="354" height="3.6" fill="url(#g216)"/><rect x="620" y="672" width="354" height="3.6" fill="url(#g217)"/><rect x="617" y="675" width="354" height="3.6" fill="url(#g218)"/><rect x="614" y="678" width="354" height="3.6" fill="url(#g219)"/><rect x="611" y="681" width="354" height="3.6" fill="url(#g220)"/><rect x="608" y="684" width="354" height="3.6" fill="url(#g221)"/><rect x="605" y="687" width="354" height="3.6" fill="url(#g222)"/><rect x="602" y="690" width="354" height="3.6" fill="url(#g223)"/><rect x="599" y="693" width="354" height="3.6" fill="url(#g224)"/><rect x="596" y="696" width="354" height="3.6" fill="url(#g225)"/><rect x="544" y="699" width="403" height="3.6" fill="url(#g226)"/><rect x="544" y="702" width="400" height="3.6" fill="url(#g227)"/><rect x="544" y="705" width="397" height="3.6" fill="url(#g228)"/><rect x="544" y="708" width="394" height="3.6" fill="url(#g229)"/><rect x="544" y="711" width="391" height="3.6" fill="url(#g230)"/><rect x="544" y="714" width="388" height="3.6" fill="url(#g231)"/><rect x="544" y="717" width="385" height="3.6" fill="url(#g232)"/><rect x="544" y="720" width="382" height="3.6" fill="url(#g233)"/><rect x="544" y="723" width="379" height="3.6" fill="url(#g234)"/><rect x="544" y="726" width="376" height="3.6" fill="url(#g235)"/><rect x="544" y="729" width="373" height="3.6" fill="url(#g236)"/><rect x="544" y="732" width="370" height="3.6" fill="url(#g237)"/><rect x="544" y="735" width="367" height="3.6" fill="url(#g238)"/><rect x="544" y="738" width="364" height="3.6" fill="url(#g239)"/><rect x="544" y="741" width="361" height="3.6" fill="url(#g240)"/><rect x="544" y="744" width="358" height="3.6" fill="url(#g241)"/><rect x="544" y="747" width="355" height="3.6" fill="url(#g242)"/><rect x="544" y="750" width="352" height="3.6" fill="url(#g243)"/><rect x="544" y="753" width="349" height="3.6" fill="url(#g244)"/><rect x="544" y="756" width="346" height="3.6" fill="url(#g245)"/><rect x="544" y="759" width="343" height="3.6" fill="url(#g246)"/><rect x="544" y="762" width="340" height="3.6" fill="url(#g247)"/><rect x="544" y="765" width="337" height="3.6" fill="url(#g248)"/><rect x="544" y="768" width="334" height="3.6" fill="url(#g249)"/><rect x="544" y="771" width="331" height="3.6" fill="url(#g250)"/><rect x="544" y="774" width="328" height="3.6" fill="url(#g251)"/><rect x="544" y="777" width="325" height="3.6" fill="url(#g252)"/><rect x="544" y="780" width="322" height="3.6" fill="url(#g253)"/><rect x="544" y="783" width="319" height="3.6" fill="url(#g254)"/><rect x="544" y="786" width="316" height="3.6" fill="url(#g255)"/><rect x="544" y="789" width="313" height="3.6" fill="url(#g256)"/><rect x="544" y="792" width="310" height="3.6" fill="url(#g257)"/><rect x="544" y="795" width="307" height="3.6" fill="url(#g258)"/><rect x="544" y="798" width="304" height="3.6" fill="url(#g259)"/><rect x="544" y="801" width="301" height="3.6" fill="url(#g260)"/><rect x="544" y="804" width="298" height="3.6" fill="url(#g261)"/><rect x="544" y="807" width="295" height="3.6" fill="url(#g262)"/><rect x="544" y="810" width="292" height="3.6" fill="url(#g263)"/><rect x="544" y="813" width="289" height="3.6" fill="url(#g264)"/><rect x="544" y="816" width="286" height="3.6" fill="url(#g265)"/><rect x="544" y="819" width="283" height="3.6" fill="url(#g266)"/><rect x="544" y="822" width="280" height="3.6" fill="url(#g267)"/><rect x="544" y="825" width="277" height="2.6" fill="url(#g268)"/>
<path d="M1277.600 361.100H1386V366H1278.800L1278.800 364.400Z" fill="#000" fill-opacity="0.360"/>
<path d="M1277.600 361.100L1278.800 364.400L810 833.200L805.500 833.200Z" fill="#000" fill-opacity="0.610"/>
</g>
<text x="734" y="50" xml:space="preserve" font-family="DejaVu Sans, Liberation Sans, sans-serif" font-size="12" fill="#111">Surface: von Mises stress (N/m<tspan dy="-5" font-size="9.500">2</tspan><tspan dy="5">)</tspan>  <tspan dx="1.500">M</tspan>ax/Min Surface: von Mises stress (N/m<tspan dy="-5" font-size="9.500">2</tspan><tspan dy="5">)</tspan></text>
<rect x="1347.500" y="90.500" width="15" height="706" fill="url(#cb)" stroke="#111" stroke-opacity=".85" stroke-width="1"/>
<path d="M1347.500 104.6h2.500M1360 104.6h2.500" stroke="#000" stroke-width="1"/>
<text x="1370.500" y="109.0" font-family="DejaVu Sans, Liberation Sans, sans-serif" font-size="12" fill="#111">1.6</text>
<path d="M1347.500 191.0h2.500M1360 191.0h2.500" stroke="#000" stroke-width="1"/>
<text x="1370.500" y="195.4" font-family="DejaVu Sans, Liberation Sans, sans-serif" font-size="12" fill="#111">1.4</text>
<path d="M1347.500 277.4h2.500M1360 277.4h2.500" stroke="#000" stroke-width="1"/>
<text x="1370.500" y="281.8" font-family="DejaVu Sans, Liberation Sans, sans-serif" font-size="12" fill="#111">1.2</text>
<path d="M1347.500 363.9h2.500M1360 363.9h2.500" stroke="#000" stroke-width="1"/>
<text x="1370.500" y="368.3" font-family="DejaVu Sans, Liberation Sans, sans-serif" font-size="12" fill="#111">1</text>
<path d="M1347.500 450.3h2.500M1360 450.3h2.500" stroke="#000" stroke-width="1"/>
<text x="1370.500" y="454.7" font-family="DejaVu Sans, Liberation Sans, sans-serif" font-size="12" fill="#111">0.8</text>
<path d="M1347.500 536.7h2.500M1360 536.7h2.500" stroke="#000" stroke-width="1"/>
<text x="1370.500" y="541.1" font-family="DejaVu Sans, Liberation Sans, sans-serif" font-size="12" fill="#111">0.6</text>
<path d="M1347.500 623.2h2.500M1360 623.2h2.500" stroke="#000" stroke-width="1"/>
<text x="1370.500" y="627.6" font-family="DejaVu Sans, Liberation Sans, sans-serif" font-size="12" fill="#111">0.4</text>
<path d="M1347.500 709.6h2.500M1360 709.6h2.500" stroke="#000" stroke-width="1"/>
<text x="1370.500" y="714.0" font-family="DejaVu Sans, Liberation Sans, sans-serif" font-size="12" fill="#111">0.2</text>
<text x="1362.500" y="81.500" font-family="DejaVu Sans, Liberation Sans, sans-serif" font-size="12" fill="#111">×10<tspan dy="-5" font-size="9">7</tspan></text>
<path d="M590 787.500V767" stroke="#4a9f6c" stroke-width="2"/><path d="M590 758.500l-3 9.500h6z" fill="#4a9f6c"/>
<path d="M590 787.700H611" stroke="#d01565" stroke-width="2"/><path d="M619.500 787.700l-9.500-3v6z" fill="#d01565"/>
<rect x="587.500" y="784.500" width="5" height="5.800" fill="#3f7fd0"/>
<text x="587.300" y="751.600" font-family="DejaVu Sans, Liberation Sans, sans-serif" font-size="12" fill="#111">y</text>
<text x="625" y="790.800" font-family="DejaVu Sans, Liberation Sans, sans-serif" font-size="12" fill="#111">x</text>
<text x="586.800" y="790.800" font-family="DejaVu Sans, Liberation Sans, sans-serif" font-size="12" fill="#111">z</text>
<path d="M545.500 0V827" stroke="#9cc8f6" stroke-width="1"/>
<path d="M546.500 21V827M546 21.500H1384" stroke="#333" stroke-width="1" stroke-dasharray="1.500 1.500" fill="none"/>
</svg>
</body></html>
